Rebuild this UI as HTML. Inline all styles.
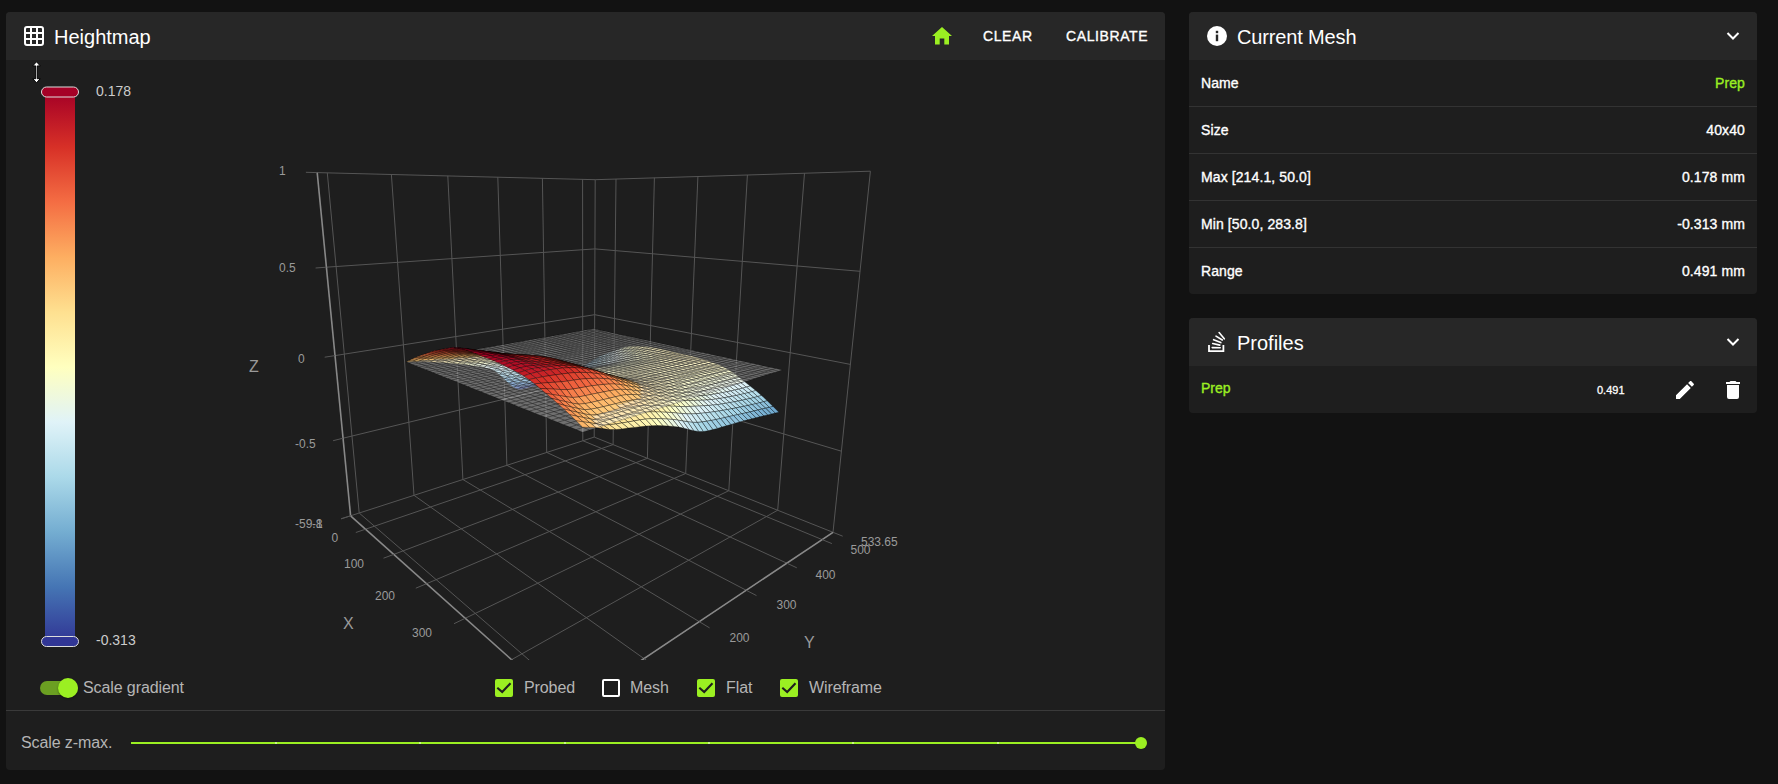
<!DOCTYPE html>
<html><head><meta charset="utf-8"><style>
*{margin:0;padding:0;box-sizing:border-box}
html,body{width:1778px;height:784px;overflow:hidden;background:#121212;font-family:"Liberation Sans",sans-serif;color:#fff}
.abs{position:absolute}
.panel{position:absolute;background:#1e1e1e;border-radius:4px;overflow:hidden}
.hdr{position:absolute;left:0;top:0;right:0;height:48px;background:#272727}
.t20{font-size:20px;line-height:20px;white-space:nowrap}
.row{position:absolute;left:0;right:0;height:47px;border-bottom:1px solid #333}
.rl{position:absolute;left:12px;top:16px;font-size:14px;font-weight:normal;-webkit-text-stroke:0.35px currentColor;line-height:14px;letter-spacing:0.1px;white-space:nowrap;color:#fff}
.rr{position:absolute;right:12px;top:16px;font-size:14px;font-weight:normal;-webkit-text-stroke:0.35px currentColor;line-height:14px;letter-spacing:0.1px;white-space:nowrap;color:#fff}
.lbl{font-size:16px;line-height:16px;color:#b5b5b5;white-space:nowrap;letter-spacing:-0.1px}
.btn{font-size:14px;font-weight:normal;-webkit-text-stroke:0.35px currentColor;line-height:14px;letter-spacing:0.6px;white-space:nowrap;color:#fff}
</style></head><body>
<div class="panel" style="left:6px;top:12px;width:1159px;height:758px">
  <div class="hdr"></div>
  <svg class="abs" style="left:18px;top:14px" width="20" height="20" viewBox="0 0 20 20">
    <rect x="1" y="1" width="18" height="18" rx="2" fill="none" stroke="#fff" stroke-width="2"/>
    <path d="M7 1V19M13 1V19M1 7H19M1 13H19" stroke="#fff" stroke-width="2"/>
  </svg>
  <div class="abs t20" style="left:48px;top:15px">Heightmap</div>
  <svg class="abs" style="left:924px;top:14px" width="24" height="20" viewBox="0 0 24 20">
    <path d="M9.7 18.5V12.5H14.3V18.5H19V10H22L12 1L2 10H5V18.5Z" fill="#9bef22"/>
  </svg>
  <div class="abs btn" style="left:977px;top:17px">CLEAR</div>
  <div class="abs btn" style="left:1060px;top:17px">CALIBRATE</div>
  <div class="abs" style="left:0;right:0;top:698px;height:1px;background:#3a3a3a"></div>
  <div class="abs lbl" style="left:15px;top:723px">Scale z-max.</div>
  <div class="abs" style="left:125px;top:730px;width:1011px;height:2px;background:#9bef22"></div>
  <svg class="abs" style="left:125px;top:728px" width="1020" height="8">
    <g fill="#fff" opacity="0.45">
      <rect x="144" y="2" width="2" height="2"/><rect x="288" y="2" width="2" height="2"/><rect x="433" y="2" width="2" height="2"/>
      <rect x="577" y="2" width="2" height="2"/><rect x="721" y="2" width="2" height="2"/><rect x="866" y="2" width="2" height="2"/>
    </g>
  </svg>
  <div class="abs" style="left:1129px;top:725px;width:12px;height:12px;border-radius:6px;background:#9bef22"></div>
  <!-- toggle -->
  <div class="abs" style="left:34px;top:669px;width:38px;height:14px;border-radius:7px;background:#6b9f22"></div>
  <div class="abs" style="left:52px;top:666px;width:20px;height:20px;border-radius:10px;background:#9bef22;box-shadow:0 1px 2px rgba(0,0,0,0.4)"></div>
  <div class="abs lbl" style="left:77px;top:668px">Scale gradient</div>
  <!-- checkboxes -->
  <div class="abs" style="left:489px;top:667px;width:18px;height:18px;border-radius:2px;background:#9bef22"></div>
  <svg class="abs" style="left:489px;top:667px" width="18" height="18"><path d="M2.3 8.7L7.2 13L15.5 4.3" fill="none" stroke="#1e1e1e" stroke-width="2.1"/></svg>
  <div class="abs lbl" style="left:518px;top:668px">Probed</div>
  <div class="abs" style="left:596px;top:667px;width:18px;height:18px;border-radius:2px;border:2px solid #fff"></div>
  <div class="abs lbl" style="left:624px;top:668px">Mesh</div>
  <div class="abs" style="left:691px;top:667px;width:18px;height:18px;border-radius:2px;background:#9bef22"></div>
  <svg class="abs" style="left:691px;top:667px" width="18" height="18"><path d="M2.3 8.7L7.2 13L15.5 4.3" fill="none" stroke="#1e1e1e" stroke-width="2.1"/></svg>
  <div class="abs lbl" style="left:720px;top:668px">Flat</div>
  <div class="abs" style="left:774px;top:667px;width:18px;height:18px;border-radius:2px;background:#9bef22"></div>
  <svg class="abs" style="left:774px;top:667px" width="18" height="18"><path d="M2.3 8.7L7.2 13L15.5 4.3" fill="none" stroke="#1e1e1e" stroke-width="2.1"/></svg>
  <div class="abs lbl" style="left:803px;top:668px">Wireframe</div>
</div>
<svg style="position:absolute;left:0;top:0" width="1778" height="784">
<style>.g{stroke:#555;stroke-width:1;fill:none} .a{stroke:#888;stroke-width:1.6;fill:none}
.t{font-family:"Liberation Sans",sans-serif;font-size:12px;fill:#9a9a9a} .n{font-family:"Liberation Sans",sans-serif;font-size:16px;fill:#9a9a9a}
.cbl{font-family:"Liberation Sans",sans-serif;font-size:14px;fill:#ccc}</style>
<clipPath id="cc"><rect x="6" y="60" width="1159" height="600"/></clipPath>
<defs><linearGradient id="cb" x1="0" y1="0" x2="0" y2="1"><stop offset="0.0" stop-color="#a50026"/><stop offset="0.1" stop-color="#d73027"/><stop offset="0.2" stop-color="#f46d43"/><stop offset="0.3" stop-color="#fdae61"/><stop offset="0.4" stop-color="#fee090"/><stop offset="0.5" stop-color="#ffffbf"/><stop offset="0.6" stop-color="#e0f3f8"/><stop offset="0.7" stop-color="#abd9e9"/><stop offset="0.8" stop-color="#74add1"/><stop offset="0.9" stop-color="#4575b4"/><stop offset="1.0" stop-color="#313695"/></linearGradient></defs>
<rect x="45" y="92" width="30" height="550" fill="url(#cb)"/>
<rect x="41.5" y="87" width="37" height="10" rx="5" fill="#a50026" stroke="#ddd" stroke-width="1"/>
<rect x="41.5" y="636.5" width="37" height="10" rx="5" fill="#313695" stroke="#ddd" stroke-width="1"/>
<text x="96" y="96" class="cbl">0.178</text>
<text x="96" y="645" class="cbl">-0.313</text>
<path d="M36.5 61.8L40.3 65.9H37.3V78.7H40.3L36.5 82.8L32.7 78.7H35.7V65.9H32.7Z" fill="#fff" stroke="#000" stroke-width="1"/>
<g clip-path="url(#cc)">
<path class="g" d="M365.6 529.2L613.1 444.6"/>
<path class="g" d="M393.8 554.4L647.4 458.3"/>
<path class="g" d="M426.6 583.7L685.7 473.5"/>
<path class="g" d="M465.2 618.3L728.8 490.7"/>
<path class="g" d="M511.5 659.7L777.7 510.2"/>
<path class="g" d="M567.5 709.7L833 532.3"/>
<path class="g" d="M359.2 513L578.2 702.5"/>
<path class="g" d="M414 495.3L644 658.6"/>
<path class="g" d="M462.9 479.5L699.3 621.7"/>
<path class="g" d="M506.9 465.3L746.3 590.3"/>
<path class="g" d="M546.7 452.4L786.9 563.2"/>
<path class="g" d="M582.8 440.7L822.2 539.6"/>
<path class="g" d="M594.2 437.1L833 532.3"/>
<path class="g" d="M350.6 515.8L594.2 437.1"/>
<path class="g" d="M359.2 513L327.3 172.9"/>
<path class="g" d="M414 495.3L391.4 174.5"/>
<path class="g" d="M462.9 479.5L447.8 175.9"/>
<path class="g" d="M506.9 465.3L497.8 177.2"/>
<path class="g" d="M546.7 452.4L542.4 178.3"/>
<path class="g" d="M582.8 440.7L582.6 179.4"/>
<path class="g" d="M594.2 437.1L595.2 179.7"/>
<path class="g" d="M343.1 438.2L594.4 377.3"/>
<path class="g" d="M335 355.6L594.7 314.7"/>
<path class="g" d="M326.4 267.2L594.9 248.9"/>
<path class="g" d="M317.2 172.6L595.2 179.7"/>
<path class="g" d="M613.1 444.6L616 179"/>
<path class="g" d="M647.4 458.3L654.4 177.8"/>
<path class="g" d="M685.7 473.5L697.9 176.5"/>
<path class="g" d="M728.8 490.7L747.4 175"/>
<path class="g" d="M777.7 510.2L804.5 173.2"/>
<path class="g" d="M833 532.3L870.4 171.2"/>
<path class="g" d="M594.4 377.3L841.4 451.2"/>
<path class="g" d="M594.7 314.7L850.4 364.4"/>
<path class="g" d="M594.9 248.9L860.1 271.3"/>
<path class="g" d="M595.2 179.7L870.4 171.2"/>
<path class="a" d="M350.6 515.8L317.2 172.6"/>
<path class="a" d="M350.6 515.8L567.5 709.7"/>
<path class="a" d="M567.5 709.7L833 532.3"/>
<path class="g" d="M350.6 515.8L341.1 518.8"/>
<path class="g" d="M343.1 438.2L333.1 440.7"/>
<path class="g" d="M335 355.6L324.7 357.2"/>
<path class="g" d="M326.4 267.2L315.6 268"/>
<path class="g" d="M317.2 172.6L305.9 172.3"/>
<path class="g" d="M350.6 515.8L341.1 518.8"/>
<path class="g" d="M365.6 529.2L355.8 532.5"/>
<path class="g" d="M393.8 554.4L383.5 558.2"/>
<path class="g" d="M426.6 583.7L415.8 588.2"/>
<path class="g" d="M465.2 618.3L454 623.7"/>
<path class="g" d="M511.5 659.7L499.9 666.2"/>
<path class="g" d="M567.5 709.7L555.4 717.7"/>
<path class="g" d="M567.5 709.7L577.6 718.8"/>
<path class="g" d="M578.2 702.5L588.4 711.4"/>
<path class="g" d="M644 658.6L654.4 665.9"/>
<path class="g" d="M699.3 621.7L709.6 627.9"/>
<path class="g" d="M746.3 590.3L756.5 595.6"/>
<path class="g" d="M786.9 563.2L796.8 567.8"/>
<path class="g" d="M822.2 539.6L831.9 543.6"/>
<path class="g" d="M833 532.3L842.7 536.2"/>
<style>#surf polygon{stroke:#000;stroke-opacity:0.32;stroke-width:1} #surf .p{fill:#fff;fill-opacity:0.36;stroke-opacity:0.22}</style><g id="surf"><polygon points="589.5,362.5 593.2,360.8 597.0,358.0 593.3,359.9" fill="#72abd0"/><polygon points="585.7,365.0 589.3,363.6 593.2,360.8 589.5,362.5" fill="#669cc8"/><polygon points="593.2,360.8 596.9,359.2 600.7,356.3 597.0,358.0" fill="#88bdda"/><polygon points="581.8,367.5 585.4,366.2 589.3,363.6 585.7,365.0" fill="#5a8ec1"/><polygon points="589.3,363.6 593.0,362.1 596.9,359.2 593.2,360.8" fill="#78b0d3"/><polygon class="p" points="589.6,329.5 593.3,330.3 597.1,329.6 593.4,328.8"/><polygon points="577.9,369.8 581.5,368.7 585.4,366.2 581.8,367.5" fill="#4f81ba"/><polygon points="596.9,359.2 600.7,357.7 604.5,354.6 600.7,356.3" fill="#9ccde3"/><polygon points="585.4,366.2 589.1,364.8 593.0,362.1 589.3,363.6" fill="#6ba2cb"/><polygon class="p" points="585.7,330.1 589.4,331.0 593.3,330.3 589.6,329.5"/><polygon class="p" points="593.3,330.3 597.0,331.1 600.9,330.4 597.1,329.6"/><polygon points="573.9,372.1 577.5,371.1 581.5,368.7 577.9,369.8" fill="#4576b4"/><polygon points="593.0,362.1 596.8,360.6 600.7,357.7 596.9,359.2" fill="#8cc0db"/><polygon points="581.5,368.7 585.2,367.4 589.1,364.8 585.4,366.2" fill="#5f94c4"/><polygon points="600.7,357.7 604.5,356.2 608.3,353.1 604.5,354.6" fill="#b0dbea"/><polygon class="p" points="581.8,330.8 585.4,331.7 589.4,331.0 585.7,330.1"/><polygon points="569.9,374.2 573.5,373.2 577.5,371.1 573.9,372.1" fill="#416aaf"/><polygon points="589.1,364.8 592.9,363.4 596.8,360.6 593.0,362.1" fill="#7cb4d5"/><polygon class="p" points="589.4,331.0 593.1,331.8 597.0,331.1 593.3,330.3"/><polygon class="p" points="597.0,331.1 600.8,331.9 604.7,331.2 600.9,330.4"/><polygon points="577.5,371.1 581.2,369.7 585.2,367.4 581.5,368.7" fill="#5588be"/><polygon points="596.8,360.6 600.6,359.2 604.5,356.2 600.7,357.7" fill="#9fcfe4"/><polygon class="p" points="577.8,331.5 581.5,332.4 585.4,331.7 581.8,330.8"/><polygon points="565.9,376.1 569.5,375.1 573.5,373.2 569.9,374.2" fill="#3e60aa"/><polygon points="585.2,367.4 588.9,366.0 592.9,363.4 589.1,364.8" fill="#6fa7ce"/><polygon class="p" points="585.4,331.7 589.2,332.5 593.1,331.8 589.4,331.0"/><polygon points="604.5,356.2 608.3,354.9 612.2,351.7 608.3,353.1" fill="#c2e4f0"/><polygon class="p" points="593.1,331.8 596.9,332.7 600.8,331.9 597.0,331.1"/><polygon points="573.5,373.2 577.2,371.9 581.2,369.7 577.5,371.1" fill="#4c7db8"/><polygon points="592.9,363.4 596.7,362.1 600.6,359.2 596.8,360.6" fill="#8fc3dd"/><polygon class="p" points="600.8,331.9 604.6,332.8 608.5,332.1 604.7,331.2"/><polygon points="581.2,369.7 584.9,368.5 588.9,366.0 585.2,367.4" fill="#659bc7"/><polygon points="561.8,377.8 565.4,376.7 569.5,375.1 565.9,376.1" fill="#3c59a6"/><polygon class="p" points="573.8,332.2 577.4,333.1 581.5,332.4 577.8,331.5"/><polygon points="600.6,359.2 604.4,357.9 608.3,354.9 604.5,356.2" fill="#b1dceb"/><polygon class="p" points="581.5,332.4 585.2,333.2 589.2,332.5 585.4,331.7"/><polygon points="569.5,375.1 573.1,373.8 577.2,371.9 573.5,373.2" fill="#4574b4"/><polygon class="p" points="589.2,332.5 593.0,333.4 596.9,332.7 593.1,331.8"/><polygon points="588.9,366.0 592.7,364.8 596.7,362.1 592.9,363.4" fill="#81b7d7"/><polygon class="p" points="596.9,332.7 600.7,333.5 604.6,332.8 600.8,331.9"/><polygon points="608.3,354.9 612.3,353.4 616.2,350.2 612.2,351.7" fill="#d4edf5"/><polygon class="p" points="604.6,332.8 608.5,333.6 612.4,332.9 608.5,332.1"/><polygon points="577.2,371.9 580.9,370.6 584.9,368.5 581.2,369.7" fill="#5b90c2"/><polygon points="596.7,362.1 600.5,360.8 604.4,357.9 600.6,359.2" fill="#a1d1e5"/><polygon points="557.7,379.2 561.3,378.0 565.4,376.7 561.8,377.8" fill="#3a54a4"/><polygon class="p" points="569.7,333.0 573.4,333.8 577.4,333.1 573.8,332.2"/><polygon class="p" points="577.4,333.1 581.2,334.0 585.2,333.2 581.5,332.4"/><polygon points="584.9,368.5 588.7,367.2 592.7,364.8 588.9,366.0" fill="#74add1"/><polygon points="565.4,376.7 569.1,375.4 573.1,373.8 569.5,375.1" fill="#426db0"/><polygon class="p" points="585.2,333.2 589.0,334.1 593.0,333.4 589.2,332.5"/><polygon points="604.4,357.9 608.4,356.5 612.3,353.4 608.3,354.9" fill="#c3e5f0"/><polygon class="p" points="593.0,333.4 596.8,334.2 600.7,333.5 596.9,332.7"/><polygon points="573.1,373.8 576.8,372.5 580.9,370.6 577.2,371.9" fill="#5487bd"/><polygon class="p" points="600.7,333.5 604.6,334.4 608.5,333.6 604.6,332.8"/><polygon points="592.7,364.8 596.5,363.5 600.5,360.8 596.7,362.1" fill="#93c6de"/><polygon points="553.6,380.5 557.1,378.9 561.3,378.0 557.7,379.2" fill="#3a51a3"/><polygon class="p" points="608.5,333.6 612.5,334.5 616.4,333.8 612.4,332.9"/><polygon points="612.3,353.4 616.3,351.9 620.2,348.6 616.2,350.2" fill="#e4f4f1"/><polygon class="p" points="565.6,333.7 569.3,334.6 573.4,333.8 569.7,333.0"/><polygon points="580.9,370.6 584.7,369.4 588.7,367.2 584.9,368.5" fill="#6ba2cb"/><polygon class="p" points="573.4,333.8 577.1,334.7 581.2,334.0 577.4,333.1"/><polygon points="600.5,360.8 604.4,359.5 608.4,356.5 604.4,357.9" fill="#b3ddeb"/><polygon points="561.3,378.0 564.9,376.6 569.1,375.4 565.4,376.7" fill="#4169ae"/><polygon class="p" points="581.2,334.0 584.9,334.8 589.0,334.1 585.2,333.2"/><polygon class="p" points="589.0,334.1 592.8,335.0 596.8,334.2 593.0,333.4"/><polygon points="588.7,367.2 592.5,366.0 596.5,363.5 592.7,364.8" fill="#86bbd9"/><polygon points="569.1,375.4 572.7,374.1 576.8,372.5 573.1,373.8" fill="#4f81ba"/><polygon class="p" points="596.8,334.2 600.7,335.1 604.6,334.4 600.7,333.5"/><polygon points="608.4,356.5 612.3,355.1 616.3,351.9 612.3,353.4" fill="#d5edf5"/><polygon points="549.4,381.8 552.9,379.9 557.1,378.9 553.6,380.5" fill="#3950a2"/><polygon class="p" points="604.6,334.4 608.6,335.3 612.5,334.5 608.5,333.6"/><polygon class="p" points="561.4,334.4 565.1,335.3 569.3,334.6 565.6,333.7"/><polygon points="576.8,372.5 580.6,371.3 584.7,369.4 580.9,370.6" fill="#649ac7"/><polygon points="596.5,363.5 600.4,362.2 604.4,359.5 600.5,360.8" fill="#a4d4e6"/><polygon class="p" points="612.5,334.5 616.5,335.4 620.3,334.7 616.4,333.8"/><polygon class="p" points="569.3,334.6 573.0,335.4 577.1,334.7 573.4,333.8"/><polygon points="557.1,378.9 560.7,377.6 564.9,376.6 561.3,378.0" fill="#4168ad"/><polygon points="616.3,351.9 620.3,350.6 624.2,347.3 620.2,348.6" fill="#eef8df"/><polygon class="p" points="577.1,334.7 580.8,335.6 584.9,334.8 581.2,334.0"/><polygon points="584.7,369.4 588.5,368.2 592.5,366.0 588.7,367.2" fill="#7bb3d4"/><polygon class="p" points="584.9,334.8 588.7,335.7 592.8,335.0 589.0,334.1"/><polygon points="604.4,359.5 608.4,358.1 612.3,355.1 608.4,356.5" fill="#c5e6f0"/><polygon points="564.9,376.6 568.6,375.4 572.7,374.1 569.1,375.4" fill="#4c7db8"/><polygon class="p" points="592.8,335.0 596.7,335.9 600.7,335.1 596.8,334.2"/><polygon points="545.1,383.0 548.6,380.9 552.9,379.9 549.4,381.8" fill="#394fa1"/><polygon class="p" points="600.7,335.1 604.6,336.0 608.6,335.3 604.6,334.4"/><polygon points="592.5,366.0 596.4,364.7 600.4,362.2 596.5,363.5" fill="#97c9e0"/><polygon class="p" points="557.2,335.2 560.9,336.0 565.1,335.3 561.4,334.4"/><polygon points="572.7,374.1 576.5,372.9 580.6,371.3 576.8,372.5" fill="#5e93c4"/><polygon class="p" points="608.6,335.3 612.5,336.1 616.5,335.4 612.5,334.5"/><polygon points="612.3,355.1 616.4,353.8 620.3,350.6 616.3,351.9" fill="#e3f4f2"/><polygon class="p" points="565.1,335.3 568.8,336.2 573.0,335.4 569.3,334.6"/><polygon points="552.9,379.9 556.5,378.5 560.7,377.6 557.1,378.9" fill="#4168ae"/><polygon class="p" points="616.5,335.4 620.5,336.3 624.4,335.5 620.3,334.7"/><polygon class="p" points="573.0,335.4 576.7,336.3 580.8,335.6 577.1,334.7"/><polygon points="580.6,371.3 584.4,370.1 588.5,368.2 584.7,369.4" fill="#73abd0"/><polygon points="600.4,362.2 604.4,360.9 608.4,358.1 604.4,359.5" fill="#b6deec"/><polygon class="p" points="580.8,335.6 584.7,336.5 588.7,335.7 584.9,334.8"/><polygon points="560.7,377.6 564.4,376.3 568.6,375.4 564.9,376.6" fill="#4b7cb8"/><polygon points="620.3,350.6 624.4,349.7 628.3,346.4 624.2,347.3" fill="#f7fcce"/><polygon class="p" points="588.7,335.7 592.6,336.6 596.7,335.9 592.8,335.0"/><polygon points="540.8,384.3 544.3,381.8 548.6,380.9 545.1,383.0" fill="#394ea1"/><polygon points="588.5,368.2 592.4,367.0 596.4,364.7 592.5,366.0" fill="#8dc1dc"/><polygon class="p" points="596.7,335.9 600.6,336.8 604.6,336.0 600.7,335.1"/><polygon points="608.4,358.1 612.4,356.9 616.4,353.8 612.3,355.1" fill="#d6eef5"/><polygon class="p" points="553.0,335.9 556.6,336.8 560.9,336.0 557.2,335.2"/><polygon points="568.6,375.4 572.3,374.1 576.5,372.9 572.7,374.1" fill="#5b90c2"/><polygon class="p" points="604.6,336.0 608.6,336.9 612.5,336.1 608.6,335.3"/><polygon class="p" points="560.9,336.0 564.6,336.9 568.8,336.2 565.1,335.3"/><polygon points="548.6,380.9 552.2,379.4 556.5,378.5 552.9,379.9" fill="#4168ae"/><polygon class="p" points="612.5,336.1 616.6,337.1 620.5,336.3 616.5,335.4"/><polygon points="596.4,364.7 600.4,363.5 604.4,360.9 600.4,362.2" fill="#a9d8e8"/><polygon class="p" points="568.8,336.2 572.6,337.1 576.7,336.3 573.0,335.4"/><polygon points="576.5,372.9 580.3,371.7 584.4,370.1 580.6,371.3" fill="#6da5cd"/><polygon points="616.4,353.8 620.5,352.9 624.4,349.7 620.3,350.6" fill="#ecf8e1"/><polygon class="p" points="620.5,336.3 624.6,337.2 628.5,336.4 624.4,335.5"/><polygon class="p" points="576.7,336.3 580.5,337.2 584.7,336.5 580.8,335.6"/><polygon points="556.5,378.5 560.1,377.2 564.4,376.3 560.7,377.6" fill="#4b7db8"/><polygon class="p" points="584.7,336.5 588.5,337.4 592.6,336.6 588.7,335.7"/><polygon points="584.4,370.1 588.3,368.9 592.4,367.0 588.5,368.2" fill="#84bad8"/><polygon points="604.4,360.9 608.4,359.7 612.4,356.9 608.4,358.1" fill="#c7e7f1"/><polygon points="536.5,385.5 539.9,382.8 544.3,381.8 540.8,384.3" fill="#384da1"/><polygon points="624.4,349.7 628.6,349.4 632.5,346.2 628.3,346.4" fill="#fdfec2"/><polygon class="p" points="592.6,336.6 596.5,337.5 600.6,336.8 596.7,335.9"/><polygon points="564.4,376.3 568.1,375.1 572.3,374.1 568.6,375.4" fill="#5b8fc1"/><polygon class="p" points="548.7,336.7 552.4,337.6 556.6,336.8 553.0,335.9"/><polygon class="p" points="600.6,336.8 604.6,337.7 608.6,336.9 604.6,336.0"/><polygon class="p" points="556.6,336.8 560.3,337.7 564.6,336.9 560.9,336.0"/><polygon points="592.4,367.0 596.3,365.8 600.4,363.5 596.4,364.7" fill="#9ecfe3"/><polygon points="544.3,381.8 547.9,380.2 552.2,379.4 548.6,380.9" fill="#4169ae"/><polygon points="612.4,356.9 616.5,355.9 620.5,352.9 616.4,353.8" fill="#e3f4f3"/><polygon class="p" points="608.6,336.9 612.6,337.8 616.6,337.1 612.5,336.1"/><polygon points="572.3,374.1 576.1,373.0 580.3,371.7 576.5,372.9" fill="#6aa2cb"/><polygon class="p" points="564.6,336.9 568.3,337.9 572.6,337.1 568.8,336.2"/><polygon class="p" points="616.6,337.1 620.7,338.0 624.6,337.2 620.5,336.3"/><polygon class="p" points="572.6,337.1 576.4,338.0 580.5,337.2 576.7,336.3"/><polygon points="552.2,379.4 555.8,377.9 560.1,377.2 556.5,378.5" fill="#4c7eb9"/><polygon class="p" points="624.6,337.2 628.7,338.1 632.6,337.3 628.5,336.4"/><polygon points="600.4,363.5 604.4,362.3 608.4,359.7 604.4,360.9" fill="#bae0ed"/><polygon points="580.3,371.7 584.1,370.6 588.3,368.9 584.4,370.1" fill="#7eb5d5"/><polygon class="p" points="580.5,337.2 584.4,338.2 588.5,337.4 584.7,336.5"/><polygon points="620.5,352.9 624.6,352.4 628.6,349.4 624.4,349.7" fill="#f3fbd4"/><polygon points="532.1,386.6 535.5,383.8 539.9,382.8 536.5,385.5" fill="#384da0"/><polygon class="p" points="588.5,337.4 592.4,338.3 596.5,337.5 592.6,336.6"/><polygon points="560.1,377.2 563.8,375.9 568.1,375.1 564.4,376.3" fill="#5b8fc2"/><polygon class="p" points="544.4,337.4 548.0,338.3 552.4,337.6 548.7,336.7"/><polygon class="p" points="596.5,337.5 600.5,338.4 604.6,337.7 600.6,336.8"/><polygon points="588.3,368.9 592.2,367.8 596.3,365.8 592.4,367.0" fill="#95c7df"/><polygon points="608.4,359.7 612.5,358.7 616.5,355.9 612.4,356.9" fill="#d6eef5"/><polygon class="p" points="552.4,337.6 556.0,338.5 560.3,337.7 556.6,336.8"/><polygon points="628.6,349.4 632.8,349.3 636.7,346.2 632.5,346.2" fill="#fffcbb"/><polygon points="539.9,382.8 543.5,380.9 547.9,380.2 544.3,381.8" fill="#426aaf"/><polygon class="p" points="604.6,337.7 608.6,338.6 612.6,337.8 608.6,336.9"/><polygon points="568.1,375.1 571.9,373.9 576.1,373.0 572.3,374.1" fill="#6aa1cb"/><polygon class="p" points="560.3,337.7 564.1,338.6 568.3,337.9 564.6,336.9"/><polygon class="p" points="612.6,337.8 616.7,338.7 620.7,338.0 616.6,337.1"/><polygon class="p" points="568.3,337.9 572.1,338.8 576.4,338.0 572.6,337.1"/><polygon points="596.3,365.8 600.3,364.7 604.4,362.3 600.4,363.5" fill="#afdbea"/><polygon points="616.5,355.9 620.6,355.4 624.6,352.4 620.5,352.9" fill="#eaf7e5"/><polygon points="547.9,380.2 551.5,378.6 555.8,377.9 552.2,379.4" fill="#4e7fb9"/><polygon class="p" points="620.7,338.0 624.8,338.9 628.7,338.1 624.6,337.2"/><polygon points="576.1,373.0 579.9,371.8 584.1,370.6 580.3,371.7" fill="#7ab2d4"/><polygon class="p" points="576.4,338.0 580.2,338.9 584.4,338.2 580.5,337.2"/><polygon points="527.6,387.8 531.1,384.7 535.5,383.8 532.1,386.6" fill="#384da0"/><polygon class="p" points="628.7,338.1 632.9,339.0 636.8,338.3 632.6,337.3"/><polygon class="p" points="584.4,338.2 588.3,339.1 592.4,338.3 588.5,337.4"/><polygon class="p" points="540.0,338.2 543.6,339.1 548.0,338.3 544.4,337.4"/><polygon points="555.8,377.9 559.5,376.6 563.8,375.9 560.1,377.2" fill="#5c91c2"/><polygon points="604.4,362.3 608.4,361.3 612.5,358.7 608.4,359.7" fill="#c9e8f2"/><polygon points="624.6,352.4 628.8,352.2 632.8,349.3 628.6,349.4" fill="#f9fdca"/><polygon points="584.1,370.6 588.0,369.4 592.2,367.8 588.3,368.9" fill="#8fc2dd"/><polygon class="p" points="592.4,338.3 596.4,339.2 600.5,338.4 596.5,337.5"/><polygon class="p" points="548.0,338.3 551.7,339.3 556.0,338.5 552.4,337.6"/><polygon points="535.5,383.8 539.1,381.6 543.5,380.9 539.9,382.8" fill="#426cb0"/><polygon class="p" points="600.5,338.4 604.5,339.4 608.6,338.6 604.6,337.7"/><polygon points="563.8,375.9 567.6,374.7 571.9,373.9 568.1,375.1" fill="#6aa1cb"/><polygon class="p" points="556.0,338.5 559.8,339.4 564.1,338.6 560.3,337.7"/><polygon points="632.8,349.3 637.0,349.2 640.9,346.4 636.7,346.2" fill="#fff8b4"/><polygon points="612.5,358.7 616.6,358.1 620.6,355.4 616.5,355.9" fill="#e2f4f4"/><polygon class="p" points="608.6,338.6 612.7,339.5 616.7,338.7 612.6,337.8"/><polygon points="592.2,367.8 596.2,366.7 600.3,364.7 596.3,365.8" fill="#a6d5e7"/><polygon class="p" points="564.1,338.6 567.9,339.6 572.1,338.8 568.3,337.9"/><polygon class="p" points="616.7,338.7 620.8,339.7 624.8,338.9 620.7,338.0"/><polygon points="543.5,380.9 547.1,379.2 551.5,378.6 547.9,380.2" fill="#5082bb"/><polygon points="571.9,373.9 575.7,372.8 579.9,371.8 576.1,373.0" fill="#79b1d3"/><polygon class="p" points="572.1,338.8 576.0,339.7 580.2,338.9 576.4,338.0"/><polygon points="523.1,388.9 526.6,385.7 531.1,384.7 527.6,387.8" fill="#384da0"/><polygon class="p" points="624.8,338.9 629.0,339.8 632.9,339.0 628.7,338.1"/><polygon points="620.6,355.4 624.8,355.0 628.8,352.2 624.6,352.4" fill="#f0f9da"/><polygon points="600.3,364.7 604.3,363.7 608.4,361.3 604.4,362.3" fill="#bee2ee"/><polygon class="p" points="580.2,338.9 584.1,339.9 588.3,339.1 584.4,338.2"/><polygon class="p" points="535.6,339.0 539.2,339.9 543.6,339.1 540.0,338.2"/><polygon points="551.5,378.6 555.2,377.1 559.5,376.6 555.8,377.9" fill="#5f93c4"/><polygon points="579.9,371.8 583.8,370.7 588.0,369.4 584.1,370.6" fill="#8bbfdb"/><polygon class="p" points="632.9,339.0 637.2,340.0 641.1,339.2 636.8,338.3"/><polygon class="p" points="588.3,339.1 592.3,340.0 596.4,339.2 592.4,338.3"/><polygon class="p" points="543.6,339.1 547.3,340.1 551.7,339.3 548.0,338.3"/><polygon class="p" points="596.4,339.2 600.4,340.2 604.5,339.4 600.5,338.4"/><polygon points="628.8,352.2 633.1,352.0 637.0,349.2 632.8,349.3" fill="#fefec2"/><polygon points="531.1,384.7 534.6,382.3 539.1,381.6 535.5,383.8" fill="#436eb0"/><polygon points="608.4,361.3 612.5,360.6 616.6,358.1 612.5,358.7" fill="#d7eef5"/><polygon points="559.5,376.6 563.3,375.3 567.6,374.7 563.8,375.9" fill="#6ca3cc"/><polygon class="p" points="551.7,339.3 555.4,340.2 559.8,339.4 556.0,338.5"/><polygon points="588.0,369.4 592.0,368.4 596.2,366.7 592.2,367.8" fill="#9fd0e4"/><polygon class="p" points="604.5,339.4 608.6,340.3 612.7,339.5 608.6,338.6"/><polygon class="p" points="559.8,339.4 563.5,340.4 567.9,339.6 564.1,338.6"/><polygon class="p" points="612.7,339.5 616.8,340.5 620.8,339.7 616.7,338.7"/><polygon points="637.0,349.2 641.3,349.3 645.3,346.6 640.9,346.4" fill="#fff4af"/><polygon points="567.6,374.7 571.4,373.6 575.7,372.8 571.9,373.9" fill="#7ab2d4"/><polygon points="539.1,381.6 542.6,379.7 547.1,379.2 543.5,380.9" fill="#5285bc"/><polygon class="p" points="567.9,339.6 571.7,340.5 576.0,339.7 572.1,338.8"/><polygon points="616.6,358.1 620.8,357.6 624.8,355.0 620.6,355.4" fill="#e8f6e9"/><polygon points="596.2,366.7 600.2,365.7 604.3,363.7 600.3,364.7" fill="#b5deec"/><polygon class="p" points="620.8,339.7 625.0,340.6 629.0,339.8 624.8,338.9"/><polygon points="518.6,389.5 522.0,386.2 526.6,385.7 523.1,388.9" fill="#394fa1"/><polygon class="p" points="576.0,339.7 579.9,340.7 584.1,339.9 580.2,338.9"/><polygon class="p" points="531.1,339.8 534.7,340.7 539.2,339.9 535.6,339.0"/><polygon points="575.7,372.8 579.6,371.6 583.8,370.7 579.9,371.8" fill="#8abfdb"/><polygon class="p" points="629.0,339.8 633.3,340.8 637.2,340.0 632.9,339.0"/><polygon points="547.1,379.2 550.8,377.6 555.2,377.1 551.5,378.6" fill="#6197c5"/><polygon class="p" points="584.1,339.9 588.1,340.8 592.3,340.0 588.3,339.1"/><polygon points="624.8,355.0 629.1,354.6 633.1,352.0 628.8,352.2" fill="#f6fbd0"/><polygon class="p" points="539.2,339.9 542.8,340.9 547.3,340.1 543.6,339.1"/><polygon class="p" points="637.2,340.0 641.5,340.9 645.4,340.1 641.1,339.2"/><polygon points="604.3,363.7 608.4,362.9 612.5,360.6 608.4,361.3" fill="#cce9f2"/><polygon class="p" points="592.3,340.0 596.3,341.0 600.4,340.2 596.4,339.2"/><polygon points="526.6,385.7 530.0,382.9 534.6,382.3 531.1,384.7" fill="#4370b1"/><polygon class="p" points="547.3,340.1 551.0,341.0 555.4,340.2 551.7,339.3"/><polygon points="583.8,370.7 587.8,369.6 592.0,368.4 588.0,369.4" fill="#9bcde2"/><polygon points="555.2,377.1 558.9,375.9 563.3,375.3 559.5,376.6" fill="#6ea6ce"/><polygon class="p" points="600.4,340.2 604.5,341.1 608.6,340.3 604.5,339.4"/><polygon class="p" points="555.4,340.2 559.2,341.2 563.5,340.4 559.8,339.4"/><polygon points="633.1,352.0 637.4,351.9 641.3,349.3 637.0,349.2" fill="#fffcbb"/><polygon points="612.5,360.6 616.7,360.0 620.8,357.6 616.6,358.1" fill="#e2f4f5"/><polygon class="p" points="608.6,340.3 612.7,341.3 616.8,340.5 612.7,339.5"/><polygon points="563.3,375.3 567.1,374.2 571.4,373.6 567.6,374.7" fill="#7cb3d4"/><polygon points="534.6,382.3 538.1,380.1 542.6,379.7 539.1,381.6" fill="#5588be"/><polygon class="p" points="563.5,340.4 567.4,341.3 571.7,340.5 567.9,339.6"/><polygon points="592.0,368.4 596.0,367.4 600.2,365.7 596.2,366.7" fill="#afdbea"/><polygon class="p" points="616.8,340.5 621.0,341.4 625.0,340.6 620.8,339.7"/><polygon class="p" points="571.7,340.5 575.6,341.5 579.9,340.7 576.0,339.7"/><polygon points="641.3,349.3 645.7,349.6 649.6,347.0 645.3,346.6" fill="#fff1aa"/><polygon points="513.9,387.7 517.3,384.3 522.0,386.2 518.6,389.5" fill="#3d5da8"/><polygon class="p" points="526.6,340.6 530.1,341.5 534.7,340.7 531.1,339.8"/><polygon points="571.4,373.6 575.3,372.5 579.6,371.6 575.7,372.8" fill="#8bbfdb"/><polygon class="p" points="625.0,340.6 629.3,341.6 633.3,340.8 629.0,339.8"/><polygon points="620.8,357.6 625.0,357.1 629.1,354.6 624.8,355.0" fill="#eef9dd"/><polygon points="542.6,379.7 546.3,377.9 550.8,377.6 547.1,379.2" fill="#659bc8"/><polygon class="p" points="579.9,340.7 583.8,341.6 588.1,340.8 584.1,339.9"/><polygon points="600.2,365.7 604.3,364.9 608.4,362.9 604.3,363.7" fill="#c3e5f0"/><polygon class="p" points="534.7,340.7 538.3,341.7 542.8,340.9 539.2,339.9"/><polygon class="p" points="633.3,340.8 637.6,341.7 641.5,340.9 637.2,340.0"/><polygon class="p" points="588.1,340.8 592.1,341.8 596.3,341.0 592.3,340.0"/><polygon points="522.0,386.2 525.4,383.0 530.0,382.9 526.6,385.7" fill="#4574b3"/><polygon class="p" points="542.8,340.9 546.5,341.8 551.0,341.0 547.3,340.1"/><polygon points="579.6,371.6 583.5,370.6 587.8,369.6 583.8,370.7" fill="#9acce2"/><polygon class="p" points="641.5,340.9 645.9,341.9 649.8,341.1 645.4,340.1"/><polygon points="550.8,377.6 554.5,376.3 558.9,375.9 555.2,377.1" fill="#72aad0"/><polygon points="629.1,354.6 633.4,354.4 637.4,351.9 633.1,352.0" fill="#fbfdc7"/><polygon class="p" points="596.3,341.0 600.3,341.9 604.5,341.1 600.4,340.2"/><polygon points="608.4,362.9 612.6,362.2 616.7,360.0 612.5,360.6" fill="#d9eff6"/><polygon class="p" points="551.0,341.0 554.8,342.0 559.2,341.2 555.4,340.2"/><polygon class="p" points="604.5,341.1 608.6,342.1 612.7,341.3 608.6,340.3"/><polygon points="587.8,369.6 591.8,368.7 596.0,367.4 592.0,368.4" fill="#abd9e9"/><polygon class="p" points="559.2,341.2 563.0,342.1 567.4,341.3 563.5,340.4"/><polygon points="558.9,375.9 562.7,374.7 567.1,374.2 563.3,375.3" fill="#7fb6d6"/><polygon points="530.0,382.9 533.6,380.4 538.1,380.1 534.6,382.3" fill="#588cc0"/><polygon points="637.4,351.9 641.7,352.0 645.7,349.6 641.3,349.3" fill="#fff8b5"/><polygon class="p" points="612.7,341.3 616.9,342.3 621.0,341.4 616.8,340.5"/><polygon class="p" points="567.4,341.3 571.3,342.3 575.6,341.5 571.7,340.5"/><polygon points="616.7,360.0 621.0,359.4 625.0,357.1 620.8,357.6" fill="#e8f6e9"/><polygon class="p" points="522.0,341.4 525.6,342.3 530.1,341.5 526.6,340.6"/><polygon class="p" points="621.0,341.4 625.3,342.4 629.3,341.6 625.0,340.6"/><polygon points="567.1,374.2 571.0,373.1 575.3,372.5 571.4,373.6" fill="#8dc1dc"/><polygon points="596.0,367.4 600.1,366.5 604.3,364.9 600.2,365.7" fill="#bde2ee"/><polygon class="p" points="575.6,341.5 579.5,342.5 583.8,341.6 579.9,340.7"/><polygon points="538.1,380.1 541.8,378.2 546.3,377.9 542.6,379.7" fill="#69a0ca"/><polygon points="645.7,349.6 650.1,350.0 654.1,347.7 649.6,347.0" fill="#feefa7"/><polygon class="p" points="530.1,341.5 533.8,342.5 538.3,341.7 534.7,340.7"/><polygon class="p" points="629.3,341.6 633.6,342.6 637.6,341.7 633.3,340.8"/><polygon points="509.1,384.0 512.5,380.7 517.3,384.3 513.9,387.7" fill="#4b7cb8"/><polygon class="p" points="583.8,341.6 587.8,342.6 592.1,341.8 588.1,340.8"/><polygon points="625.0,357.1 629.3,356.7 633.4,354.4 629.1,354.6" fill="#f4fbd3"/><polygon class="p" points="538.3,341.7 542.0,342.7 546.5,341.8 542.8,340.9"/><polygon points="575.3,372.5 579.2,371.4 583.5,370.6 579.6,371.6" fill="#9bcce2"/><polygon class="p" points="637.6,341.7 641.9,342.7 645.9,341.9 641.5,340.9"/><polygon points="604.3,364.9 608.5,364.1 612.6,362.2 608.4,362.9" fill="#d1ebf4"/><polygon points="546.3,377.9 550.0,376.5 554.5,376.3 550.8,377.6" fill="#76afd2"/><polygon class="p" points="592.1,341.8 596.1,342.8 600.3,341.9 596.3,341.0"/><polygon points="517.3,384.3 520.7,381.0 525.4,383.0 522.0,386.2" fill="#5082bb"/><polygon class="p" points="546.5,341.8 550.3,342.8 554.8,342.0 551.0,341.0"/><polygon class="p" points="645.9,341.9 650.3,342.9 654.2,342.1 649.8,341.1"/><polygon class="p" points="600.3,341.9 604.5,342.9 608.6,342.1 604.5,341.1"/><polygon points="633.4,354.4 637.7,354.3 641.7,352.0 637.4,351.9" fill="#ffffbf"/><polygon points="583.5,370.6 587.6,369.6 591.8,368.7 587.8,369.6" fill="#aad8e9"/><polygon class="p" points="554.8,342.0 558.6,343.0 563.0,342.1 559.2,341.2"/><polygon points="554.5,376.3 558.3,375.1 562.7,374.7 558.9,375.9" fill="#83b9d7"/><polygon points="525.4,383.0 529.0,380.3 533.6,380.4 530.0,382.9" fill="#5d92c3"/><polygon points="612.6,362.2 616.8,361.5 621.0,359.4 616.7,360.0" fill="#e3f4f3"/><polygon class="p" points="608.6,342.1 612.8,343.1 616.9,342.3 612.7,341.3"/><polygon class="p" points="563.0,342.1 566.9,343.1 571.3,342.3 567.4,341.3"/><polygon class="p" points="517.3,342.2 520.9,343.2 525.6,342.3 522.0,341.4"/><polygon class="p" points="616.9,342.3 621.2,343.2 625.3,342.4 621.0,341.4"/><polygon points="591.8,368.7 595.9,367.8 600.1,366.5 596.0,367.4" fill="#bae0ed"/><polygon points="641.7,352.0 646.2,352.3 650.1,350.0 645.7,349.6" fill="#fff5b0"/><polygon points="562.7,374.7 566.6,373.7 571.0,373.1 567.1,374.2" fill="#8fc3dd"/><polygon class="p" points="571.3,342.3 575.2,343.3 579.5,342.5 575.6,341.5"/><polygon class="p" points="525.6,342.3 529.2,343.3 533.8,342.5 530.1,341.5"/><polygon points="533.6,380.4 537.2,378.4 541.8,378.2 538.1,380.1" fill="#6da5cd"/><polygon class="p" points="625.3,342.4 629.6,343.4 633.6,342.6 629.3,341.6"/><polygon points="621.0,359.4 625.3,358.9 629.3,356.7 625.0,357.1" fill="#eff9dd"/><polygon class="p" points="579.5,342.5 583.5,343.4 587.8,342.6 583.8,341.6"/><polygon class="p" points="533.8,342.5 537.5,343.5 542.0,342.7 538.3,341.7"/><polygon points="650.1,350.0 654.6,350.7 658.6,348.6 654.1,347.7" fill="#feeea5"/><polygon points="571.0,373.1 574.9,372.1 579.2,371.4 575.3,372.5" fill="#9dcee3"/><polygon points="600.1,366.5 604.3,365.7 608.5,364.1 604.3,364.9" fill="#cbe9f2"/><polygon class="p" points="633.6,342.6 638.0,343.6 641.9,342.7 637.6,341.7"/><polygon class="p" points="587.8,342.6 591.9,343.6 596.1,342.8 592.1,341.8"/><polygon points="541.8,378.2 545.5,376.7 550.0,376.5 546.3,377.9" fill="#7bb3d4"/><polygon class="p" points="542.0,342.7 545.8,343.6 550.3,342.8 546.5,341.8"/><polygon points="504.2,379.3 507.6,376.1 512.5,380.7 509.1,384.0" fill="#6ba3cc"/><polygon class="p" points="641.9,342.7 646.4,343.7 650.3,342.9 645.9,341.9"/><polygon points="629.3,356.7 633.7,356.5 637.7,354.3 633.4,354.4" fill="#f9fdc9"/><polygon class="p" points="596.1,342.8 600.3,343.8 604.5,342.9 600.3,341.9"/><polygon points="579.2,371.4 583.3,370.5 587.6,369.6 583.5,370.6" fill="#abd9e9"/><polygon class="p" points="550.3,342.8 554.1,343.8 558.6,343.0 554.8,342.0"/><polygon points="512.5,380.7 515.9,377.4 520.7,381.0 517.3,384.3" fill="#679ec9"/><polygon points="608.5,364.1 612.7,363.3 616.8,361.5 612.6,362.2" fill="#def2f7"/><polygon class="p" points="650.3,342.9 654.8,343.9 658.7,343.0 654.2,342.1"/><polygon points="550.0,376.5 553.8,375.4 558.3,375.1 554.5,376.3" fill="#88bdda"/><polygon class="p" points="604.5,342.9 608.6,343.9 612.8,343.1 608.6,342.1"/><polygon class="p" points="558.6,343.0 562.4,344.0 566.9,343.1 563.0,342.1"/><polygon points="637.7,354.3 642.2,354.5 646.2,352.3 641.7,352.0" fill="#fffbb9"/><polygon points="520.7,381.0 524.2,378.2 529.0,380.3 525.4,383.0" fill="#6aa1cb"/><polygon class="p" points="512.7,343.0 516.2,344.0 520.9,343.2 517.3,342.2"/><polygon points="587.6,369.6 591.6,368.8 595.9,367.8 591.8,368.7" fill="#b9e0ed"/><polygon class="p" points="612.8,343.1 617.1,344.1 621.2,343.2 616.9,342.3"/><polygon class="p" points="566.9,343.1 570.8,344.1 575.2,343.3 571.3,342.3"/><polygon points="558.3,375.1 562.1,374.2 566.6,373.7 562.7,374.7" fill="#93c6df"/><polygon points="616.8,361.5 621.1,360.8 625.3,358.9 621.0,359.4" fill="#eaf7e6"/><polygon class="p" points="520.9,343.2 524.5,344.2 529.2,343.3 525.6,342.3"/><polygon class="p" points="621.2,343.2 625.5,344.2 629.6,343.4 625.3,342.4"/><polygon points="529.0,380.3 532.6,378.1 537.2,378.4 533.6,380.4" fill="#74acd1"/><polygon points="646.2,352.3 650.7,352.9 654.6,350.7 650.1,350.0" fill="#fff3ad"/><polygon class="p" points="575.2,343.3 579.2,344.3 583.5,343.4 579.5,342.5"/><polygon class="p" points="529.2,343.3 532.9,344.3 537.5,343.5 533.8,342.5"/><polygon points="595.9,367.8 600.0,366.9 604.3,365.7 600.1,366.5" fill="#c7e7f1"/><polygon class="p" points="629.6,343.4 633.9,344.4 638.0,343.6 633.6,342.6"/><polygon points="566.6,373.7 570.5,372.8 574.9,372.1 571.0,373.1" fill="#9fd0e4"/><polygon class="p" points="583.5,343.4 587.6,344.4 591.9,343.6 587.8,342.6"/><polygon points="625.3,358.9 629.6,358.5 633.7,356.5 629.3,356.7" fill="#f4fbd2"/><polygon class="p" points="537.5,343.5 541.2,344.5 545.8,343.6 542.0,342.7"/><polygon points="654.6,350.7 659.2,351.6 663.1,349.6 658.6,348.6" fill="#feeda4"/><polygon points="537.2,378.4 540.9,376.8 545.5,376.7 541.8,378.2" fill="#82b8d7"/><polygon class="p" points="638.0,343.6 642.4,344.6 646.4,343.7 641.9,342.7"/><polygon class="p" points="591.9,343.6 596.0,344.6 600.3,343.8 596.1,342.8"/><polygon points="604.3,365.7 608.5,364.8 612.7,363.3 608.5,364.1" fill="#d8eff6"/><polygon points="574.9,372.1 578.9,371.2 583.3,370.5 579.2,371.4" fill="#acdae9"/><polygon class="p" points="545.8,343.6 549.6,344.7 554.1,343.8 550.3,342.8"/><polygon class="p" points="646.4,343.7 650.9,344.7 654.8,343.9 650.3,342.9"/><polygon class="p" points="600.3,343.8 604.4,344.8 608.6,343.9 604.5,342.9"/><polygon points="633.7,356.5 638.1,356.5 642.2,354.5 637.7,354.3" fill="#feffc1"/><polygon points="545.5,376.7 549.2,375.6 553.8,375.4 550.0,376.5" fill="#8dc1dc"/><polygon class="p" points="554.1,343.8 558.0,344.8 562.4,344.0 558.6,343.0"/><polygon class="p" points="654.8,343.9 659.4,344.9 663.3,344.0 658.7,343.0"/><polygon class="p" points="507.9,343.9 511.5,344.9 516.2,344.0 512.7,343.0"/><polygon points="499.2,374.6 502.6,371.5 507.6,376.1 504.2,379.3" fill="#93c5de"/><polygon class="p" points="608.6,343.9 612.9,344.9 617.1,344.1 612.8,343.1"/><polygon points="583.3,370.5 587.3,369.6 591.6,368.8 587.6,369.6" fill="#b9e0ed"/><polygon points="612.7,363.3 617.0,362.6 621.1,360.8 616.8,361.5" fill="#e6f5ed"/><polygon points="507.6,376.1 511.0,373.0 515.9,377.4 512.5,380.7" fill="#8abfdb"/><polygon class="p" points="562.4,344.0 566.4,345.0 570.8,344.1 566.9,343.1"/><polygon points="553.8,375.4 557.6,374.5 562.1,374.2 558.3,375.1" fill="#98cae1"/><polygon class="p" points="516.2,344.0 519.8,345.0 524.5,344.2 520.9,343.2"/><polygon points="642.2,354.5 646.7,354.9 650.7,352.9 646.2,352.3" fill="#fff8b4"/><polygon points="515.9,377.4 519.4,374.6 524.2,378.2 520.7,381.0" fill="#84bad8"/><polygon class="p" points="617.1,344.1 621.4,345.1 625.5,344.2 621.2,343.2"/><polygon class="p" points="570.8,344.1 574.8,345.1 579.2,344.3 575.2,343.3"/><polygon class="p" points="524.5,344.2 528.2,345.2 532.9,344.3 529.2,343.3"/><polygon points="591.6,368.8 595.8,367.9 600.0,366.9 595.9,367.8" fill="#c6e6f1"/><polygon points="524.2,378.2 527.8,376.0 532.6,378.1 529.0,380.3" fill="#83b9d8"/><polygon class="p" points="625.5,344.2 629.8,345.3 633.9,344.4 629.6,343.4"/><polygon points="621.1,360.8 625.5,360.4 629.6,358.5 625.3,358.9" fill="#f0f9da"/><polygon points="562.1,374.2 566.0,373.3 570.5,372.8 566.6,373.7" fill="#a3d2e5"/><polygon class="p" points="579.2,344.3 583.2,345.3 587.6,344.4 583.5,343.4"/><polygon points="650.7,352.9 655.2,353.5 659.2,351.6 654.6,350.7" fill="#fff2ab"/><polygon class="p" points="532.9,344.3 536.6,345.3 541.2,344.5 537.5,343.5"/><polygon class="p" points="633.9,344.4 638.4,345.4 642.4,344.6 638.0,343.6"/><polygon points="532.6,378.1 536.2,376.5 540.9,376.8 537.2,378.4" fill="#8abeda"/><polygon class="p" points="587.6,344.4 591.7,345.5 596.0,344.6 591.9,343.6"/><polygon points="600.0,366.9 604.3,366.1 608.5,364.8 604.3,365.7" fill="#d5eef5"/><polygon class="p" points="541.2,344.5 545.0,345.5 549.6,344.7 545.8,343.6"/><polygon points="570.5,372.8 574.5,371.9 578.9,371.2 574.9,372.1" fill="#aedbea"/><polygon points="659.2,351.6 663.8,352.4 667.7,350.6 663.1,349.6" fill="#feeda3"/><polygon class="p" points="642.4,344.6 646.9,345.6 650.9,344.7 646.4,343.7"/><polygon points="629.6,358.5 634.0,358.4 638.1,356.5 633.7,356.5" fill="#f9fdc9"/><polygon class="p" points="596.0,344.6 600.2,345.6 604.4,344.8 600.3,343.8"/><polygon class="p" points="549.6,344.7 553.4,345.7 558.0,344.8 554.1,343.8"/><polygon points="540.9,376.8 544.6,375.7 549.2,375.6 545.5,376.7" fill="#94c6df"/><polygon class="p" points="650.9,344.7 655.4,345.7 659.4,344.9 654.8,343.9"/><polygon class="p" points="503.1,344.7 506.6,345.7 511.5,344.9 507.9,343.9"/><polygon class="p" points="604.4,344.8 608.7,345.8 612.9,344.9 608.6,343.9"/><polygon points="608.5,364.8 612.8,364.1 617.0,362.6 612.7,363.3" fill="#e3f4f2"/><polygon points="578.9,371.2 582.9,370.4 587.3,369.6 583.3,370.5" fill="#bae1ed"/><polygon class="p" points="558.0,344.8 561.9,345.8 566.4,345.0 562.4,344.0"/><polygon points="638.1,356.5 642.6,356.8 646.7,354.9 642.2,354.5" fill="#fffdbb"/><polygon class="p" points="659.4,344.9 664.0,345.9 667.9,345.0 663.3,344.0"/><polygon class="p" points="511.5,344.9 515.0,345.9 519.8,345.0 516.2,344.0"/><polygon points="549.2,375.6 553.1,374.8 557.6,374.5 553.8,375.4" fill="#9dcee3"/><polygon class="p" points="612.9,344.9 617.2,345.9 621.4,345.1 617.1,344.1"/><polygon class="p" points="566.4,345.0 570.3,346.0 574.8,345.1 570.8,344.1"/><polygon points="494.2,370.8 497.5,367.8 502.6,371.5 499.2,374.6" fill="#b7dfec"/><polygon class="p" points="519.8,345.0 523.5,346.0 528.2,345.2 524.5,344.2"/><polygon points="587.3,369.6 591.4,368.8 595.8,367.9 591.6,368.8" fill="#c7e7f1"/><polygon points="617.0,362.6 621.3,362.0 625.5,360.4 621.1,360.8" fill="#edf8e1"/><polygon points="646.7,354.9 651.2,355.4 655.2,353.5 650.7,352.9" fill="#fff6b1"/><polygon class="p" points="621.4,345.1 625.7,346.1 629.8,345.3 625.5,344.2"/><polygon points="502.6,371.5 506.0,368.6 511.0,373.0 507.6,376.1" fill="#b1dceb"/><polygon class="p" points="574.8,345.1 578.8,346.2 583.2,345.3 579.2,344.3"/><polygon points="557.6,374.5 561.5,373.7 566.0,373.3 562.1,374.2" fill="#a7d6e7"/><polygon class="p" points="528.2,345.2 531.9,346.2 536.6,345.3 532.9,344.3"/><polygon points="511.0,373.0 514.5,370.3 519.4,374.6 515.9,377.4" fill="#a8d6e8"/><polygon class="p" points="629.8,345.3 634.3,346.3 638.4,345.4 633.9,344.4"/><polygon points="519.4,374.6 523.0,372.4 527.8,376.0 524.2,378.2" fill="#9fcfe4"/><polygon class="p" points="583.2,345.3 587.3,346.3 591.7,345.5 587.6,344.4"/><polygon points="595.8,367.9 600.0,367.0 604.3,366.1 600.0,366.9" fill="#d4edf5"/><polygon points="655.2,353.5 659.8,354.2 663.8,352.4 659.2,351.6" fill="#fff0a9"/><polygon points="625.5,360.4 629.9,360.1 634.0,358.4 629.6,358.5" fill="#f6fbd0"/><polygon class="p" points="536.6,345.3 540.4,346.4 545.0,345.5 541.2,344.5"/><polygon points="566.0,373.3 570.0,372.5 574.5,371.9 570.5,372.8" fill="#b1dceb"/><polygon class="p" points="638.4,345.4 642.8,346.4 646.9,345.6 642.4,344.6"/><polygon points="527.8,376.0 531.5,374.4 536.2,376.5 532.6,378.1" fill="#9acbe1"/><polygon class="p" points="591.7,345.5 595.9,346.5 600.2,345.6 596.0,344.6"/><polygon class="p" points="545.0,345.5 548.8,346.5 553.4,345.7 549.6,344.7"/><polygon points="663.8,352.4 668.5,353.3 672.4,351.7 667.7,350.6" fill="#feeca2"/><polygon class="p" points="646.9,345.6 651.4,346.6 655.4,345.7 650.9,344.7"/><polygon class="p" points="498.3,345.6 501.8,346.6 506.6,345.7 503.1,344.7"/><polygon points="536.2,376.5 540.0,375.4 544.6,375.7 540.9,376.8" fill="#9ccde2"/><polygon points="604.3,366.1 608.5,365.3 612.8,364.1 608.5,364.8" fill="#e2f4f5"/><polygon class="p" points="600.2,345.6 604.4,346.7 608.7,345.8 604.4,344.8"/><polygon points="634.0,358.4 638.5,358.5 642.6,356.8 638.1,356.5" fill="#fefec2"/><polygon points="574.5,371.9 578.5,371.1 582.9,370.4 578.9,371.2" fill="#bce1ee"/><polygon class="p" points="553.4,345.7 557.3,346.7 561.9,345.8 558.0,344.8"/><polygon class="p" points="655.4,345.7 660.0,346.8 664.0,345.9 659.4,344.9"/><polygon class="p" points="506.6,345.7 510.2,346.7 515.0,345.9 511.5,344.9"/><polygon class="p" points="608.7,345.8 613.0,346.8 617.2,345.9 612.9,344.9"/><polygon points="544.6,375.7 548.5,374.9 553.1,374.8 549.2,375.6" fill="#a3d3e6"/><polygon class="p" points="561.9,345.8 565.8,346.9 570.3,346.0 566.4,345.0"/><polygon points="642.6,356.8 647.2,357.2 651.2,355.4 646.7,354.9" fill="#fffab7"/><polygon points="612.8,364.1 617.1,363.4 621.3,362.0 617.0,362.6" fill="#eaf7e5"/><polygon class="p" points="664.0,345.9 668.7,346.9 672.6,346.1 667.9,345.0"/><polygon class="p" points="515.0,345.9 518.7,346.9 523.5,346.0 519.8,345.0"/><polygon points="582.9,370.4 587.1,369.5 591.4,368.8 587.3,369.6" fill="#c8e7f1"/><polygon class="p" points="617.2,345.9 621.5,347.0 625.7,346.1 621.4,345.1"/><polygon class="p" points="570.3,346.0 574.4,347.0 578.8,346.2 574.8,345.1"/><polygon points="553.1,374.8 557.0,374.0 561.5,373.7 557.6,374.5" fill="#acd9e9"/><polygon class="p" points="523.5,346.0 527.2,347.1 531.9,346.2 528.2,345.2"/><polygon points="489.2,368.8 492.5,365.9 497.5,367.8 494.2,370.8" fill="#d1ecf4"/><polygon class="p" points="625.7,346.1 630.1,347.2 634.3,346.3 629.8,345.3"/><polygon points="651.2,355.4 655.8,355.9 659.8,354.2 655.2,353.5" fill="#fff4ae"/><polygon class="p" points="578.8,346.2 582.9,347.2 587.3,346.3 583.2,345.3"/><polygon points="621.3,362.0 625.7,361.7 629.9,360.1 625.5,360.4" fill="#f3fad5"/><polygon points="591.4,368.8 595.6,367.9 600.0,367.0 595.8,367.9" fill="#d5eef5"/><polygon class="p" points="531.9,346.2 535.7,347.2 540.4,346.4 536.6,345.3"/><polygon class="p" points="634.3,346.3 638.8,347.3 642.8,346.4 638.4,345.4"/><polygon points="497.5,367.8 500.9,365.1 506.0,368.6 502.6,371.5" fill="#d3edf4"/><polygon points="561.5,373.7 565.5,373.0 570.0,372.5 566.0,373.3" fill="#b5deec"/><polygon class="p" points="587.3,346.3 591.5,347.4 595.9,346.5 591.7,345.5"/><polygon points="659.8,354.2 664.5,354.9 668.5,353.3 663.8,352.4" fill="#feefa7"/><polygon class="p" points="540.4,346.4 544.2,347.4 548.8,346.5 545.0,345.5"/><polygon points="506.0,368.6 509.5,366.1 514.5,370.3 511.0,373.0" fill="#cce9f2"/><polygon class="p" points="642.8,346.4 647.4,347.5 651.4,346.6 646.9,345.6"/><polygon class="p" points="493.3,346.4 496.8,347.5 501.8,346.6 498.3,345.6"/><polygon points="514.5,370.3 518.0,368.3 523.0,372.4 519.4,374.6" fill="#c0e3ef"/><polygon points="629.9,360.1 634.4,360.2 638.5,358.5 634.0,358.4" fill="#fafdc7"/><polygon points="600.0,367.0 604.2,366.2 608.5,365.3 604.3,366.1" fill="#e1f3f6"/><polygon class="p" points="595.9,346.5 600.1,347.5 604.4,346.7 600.2,345.6"/><polygon points="523.0,372.4 526.6,371.0 531.5,374.4 527.8,376.0" fill="#b4ddec"/><polygon points="570.0,372.5 574.0,371.7 578.5,371.1 574.5,371.9" fill="#bfe3ef"/><polygon class="p" points="548.8,346.5 552.7,347.6 557.3,346.7 553.4,345.7"/><polygon points="668.5,353.3 673.2,354.3 677.1,352.8 672.4,351.7" fill="#feeca2"/><polygon points="531.5,374.4 535.2,373.3 540.0,375.4 536.2,376.5" fill="#acd9e9"/><polygon class="p" points="651.4,346.6 656.1,347.7 660.0,346.8 655.4,345.7"/><polygon class="p" points="501.8,346.6 505.3,347.6 510.2,346.7 506.6,345.7"/><polygon class="p" points="604.4,346.7 608.7,347.7 613.0,346.8 608.7,345.8"/><polygon points="638.5,358.5 643.1,358.8 647.2,357.2 642.6,356.8" fill="#fffdbc"/><polygon class="p" points="557.3,346.7 561.3,347.7 565.8,346.9 561.9,345.8"/><polygon points="608.5,365.3 612.9,364.6 617.1,363.4 612.8,364.1" fill="#e9f6e7"/><polygon points="540.0,375.4 543.8,374.7 548.5,374.9 544.6,375.7" fill="#abd9e9"/><polygon class="p" points="660.0,346.8 664.7,347.8 668.7,346.9 664.0,345.9"/><polygon class="p" points="510.2,346.7 513.8,347.8 518.7,346.9 515.0,345.9"/><polygon points="578.5,371.1 582.6,370.2 587.1,369.5 582.9,370.4" fill="#cae8f2"/><polygon class="p" points="613.0,346.8 617.3,347.9 621.5,347.0 617.2,345.9"/><polygon class="p" points="565.8,346.9 569.9,347.9 574.4,347.0 570.3,346.0"/><polygon class="p" points="668.7,346.9 673.4,348.0 677.3,347.1 672.6,346.1"/><polygon class="p" points="518.7,346.9 522.4,348.0 527.2,347.1 523.5,346.0"/><polygon points="647.2,357.2 651.8,357.6 655.8,355.9 651.2,355.4" fill="#fff7b3"/><polygon points="548.5,374.9 552.3,374.3 557.0,374.0 553.1,374.8" fill="#b1dceb"/><polygon class="p" points="621.5,347.0 626.0,348.0 630.1,347.2 625.7,346.1"/><polygon points="617.1,363.4 621.5,363.0 625.7,361.7 621.3,362.0" fill="#f1f9d9"/><polygon class="p" points="574.4,347.0 578.5,348.1 582.9,347.2 578.8,346.2"/><polygon points="587.1,369.5 591.2,368.6 595.6,367.9 591.4,368.8" fill="#d6eef5"/><polygon class="p" points="527.2,347.1 530.9,348.1 535.7,347.2 531.9,346.2"/><polygon points="484.1,367.6 487.4,364.8 492.5,365.9 489.2,368.8" fill="#e1f4f5"/><polygon class="p" points="630.1,347.2 634.6,348.2 638.8,347.3 634.3,346.3"/><polygon points="655.8,355.9 660.5,356.5 664.5,354.9 659.8,354.2" fill="#fff2ac"/><polygon points="557.0,374.0 560.9,373.4 565.5,373.0 561.5,373.7" fill="#b9e0ed"/><polygon class="p" points="582.9,347.2 587.1,348.3 591.5,347.4 587.3,346.3"/><polygon class="p" points="535.7,347.2 539.5,348.3 544.2,347.4 540.4,346.4"/><polygon points="625.7,361.7 630.2,361.7 634.4,360.2 629.9,360.1" fill="#f8fccc"/><polygon class="p" points="638.8,347.3 643.3,348.4 647.4,347.5 642.8,346.4"/><polygon class="p" points="488.4,347.3 491.9,348.4 496.8,347.5 493.3,346.4"/><polygon points="595.6,367.9 599.9,367.1 604.2,366.2 600.0,367.0" fill="#e2f4f5"/><polygon class="p" points="591.5,347.4 595.7,348.4 600.1,347.5 595.9,346.5"/><polygon points="492.5,365.9 495.9,363.3 500.9,365.1 497.5,367.8" fill="#e7f6eb"/><polygon points="664.5,354.9 669.3,355.7 673.2,354.3 668.5,353.3" fill="#feeea6"/><polygon class="p" points="544.2,347.4 548.1,348.5 552.7,347.6 548.8,346.5"/><polygon points="565.5,373.0 569.5,372.2 574.0,371.7 570.0,372.5" fill="#c2e4f0"/><polygon class="p" points="647.4,347.5 652.0,348.5 656.1,347.7 651.4,346.6"/><polygon class="p" points="496.8,347.5 500.4,348.5 505.3,347.6 501.8,346.6"/><polygon class="p" points="600.1,347.5 604.4,348.6 608.7,347.7 604.4,346.7"/><polygon points="500.9,365.1 504.4,362.8 509.5,366.1 506.0,368.6" fill="#e7f6ea"/><polygon points="634.4,360.2 638.9,360.4 643.1,358.8 638.5,358.5" fill="#feffc1"/><polygon class="p" points="552.7,347.6 556.7,348.6 561.3,347.7 557.3,346.7"/><polygon points="604.2,366.2 608.6,365.6 612.9,364.6 608.5,365.3" fill="#e9f6e8"/><polygon points="673.2,354.3 678.0,355.2 681.9,353.9 677.1,352.8" fill="#feeba1"/><polygon points="509.5,366.1 513.0,364.2 518.0,368.3 514.5,370.3" fill="#e2f4f4"/><polygon class="p" points="656.1,347.7 660.7,348.7 664.7,347.8 660.0,346.8"/><polygon class="p" points="505.3,347.6 509.0,348.7 513.8,347.8 510.2,346.7"/><polygon points="518.0,368.3 521.7,366.9 526.6,371.0 523.0,372.4" fill="#d4edf5"/><polygon points="526.6,371.0 530.3,370.0 535.2,373.3 531.5,374.4" fill="#c5e6f0"/><polygon class="p" points="608.7,347.7 613.0,348.8 617.3,347.9 613.0,346.8"/><polygon points="574.0,371.7 578.1,370.8 582.6,370.2 578.5,371.1" fill="#cdeaf3"/><polygon class="p" points="561.3,347.7 565.3,348.8 569.9,347.9 565.8,346.9"/><polygon points="535.2,373.3 539.0,372.7 543.8,374.7 540.0,375.4" fill="#bae0ed"/><polygon points="643.1,358.8 647.7,359.1 651.8,357.6 647.2,357.2" fill="#fffab7"/><polygon class="p" points="664.7,347.8 669.5,348.9 673.4,348.0 668.7,346.9"/><polygon class="p" points="513.8,347.8 517.5,348.9 522.4,348.0 518.7,346.9"/><polygon class="p" points="617.3,347.9 621.7,348.9 626.0,348.0 621.5,347.0"/><polygon points="612.9,364.6 617.3,364.2 621.5,363.0 617.1,363.4" fill="#f0f9db"/><polygon points="543.8,374.7 547.6,374.1 552.3,374.3 548.5,374.9" fill="#b8dfed"/><polygon class="p" points="569.9,347.9 573.9,349.0 578.5,348.1 574.4,347.0"/><polygon points="582.6,370.2 586.8,369.3 591.2,368.6 587.1,369.5" fill="#d8eff6"/><polygon class="p" points="673.4,348.0 678.2,349.1 682.1,348.2 677.3,347.1"/><polygon class="p" points="522.4,348.0 526.1,349.0 530.9,348.1 527.2,347.1"/><polygon class="p" points="626.0,348.0 630.4,349.1 634.6,348.2 630.1,347.2"/><polygon points="651.8,357.6 656.5,358.0 660.5,356.5 655.8,355.9" fill="#fff5b0"/><polygon class="p" points="578.5,348.1 582.6,349.2 587.1,348.3 582.9,347.2"/><polygon points="479.0,366.7 482.3,364.0 487.4,364.8 484.1,367.6" fill="#e9f7e7"/><polygon points="552.3,374.3 556.3,373.7 560.9,373.4 557.0,374.0" fill="#bde2ee"/><polygon class="p" points="530.9,348.1 534.7,349.2 539.5,348.3 535.7,347.2"/><polygon points="621.5,363.0 626.0,363.0 630.2,361.7 625.7,361.7" fill="#f6fccf"/><polygon class="p" points="634.6,348.2 639.2,349.3 643.3,348.4 638.8,347.3"/><polygon class="p" points="483.3,348.2 486.8,349.2 491.9,348.4 488.4,347.3"/><polygon points="591.2,368.6 595.5,367.8 599.9,367.1 595.6,367.9" fill="#e2f4f4"/><polygon class="p" points="587.1,348.3 591.3,349.3 595.7,348.4 591.5,347.4"/><polygon points="660.5,356.5 665.3,357.2 669.3,355.7 664.5,354.9" fill="#fff1a9"/><polygon class="p" points="539.5,348.3 543.4,349.4 548.1,348.5 544.2,347.4"/><polygon class="p" points="643.3,348.4 647.9,349.4 652.0,348.5 647.4,347.5"/><polygon points="560.9,373.4 564.9,372.7 569.5,372.2 565.5,373.0" fill="#c6e6f1"/><polygon class="p" points="491.9,348.4 495.4,349.4 500.4,348.5 496.8,347.5"/><polygon points="630.2,361.7 634.8,361.8 638.9,360.4 634.4,360.2" fill="#fcfec5"/><polygon points="487.4,364.8 490.8,362.3 495.9,363.3 492.5,365.9" fill="#f1f9d9"/><polygon class="p" points="595.7,348.4 600.0,349.5 604.4,348.6 600.1,347.5"/><polygon class="p" points="548.1,348.5 552.0,349.5 556.7,348.6 552.7,347.6"/><polygon points="669.3,355.7 674.1,356.6 678.0,355.2 673.2,354.3" fill="#feeda4"/><polygon points="599.9,367.1 604.2,366.4 608.6,365.6 604.2,366.2" fill="#e9f6e7"/><polygon class="p" points="652.0,348.5 656.7,349.6 660.7,348.7 656.1,347.7"/><polygon class="p" points="500.4,348.5 504.0,349.6 509.0,348.7 505.3,347.6"/><polygon class="p" points="604.4,348.6 608.7,349.7 613.0,348.8 608.7,347.7"/><polygon points="569.5,372.2 573.6,371.3 578.1,370.8 574.0,371.7" fill="#d0ebf3"/><polygon points="495.9,363.3 499.3,361.1 504.4,362.8 500.9,365.1" fill="#f5fbd1"/><polygon class="p" points="556.7,348.6 560.7,349.7 565.3,348.8 561.3,347.7"/><polygon points="638.9,360.4 643.6,360.6 647.7,359.1 643.1,358.8" fill="#fffcbb"/><polygon points="678.0,355.2 682.9,356.3 686.8,355.0 681.9,353.9" fill="#feeba1"/><polygon class="p" points="660.7,348.7 665.5,349.8 669.5,348.9 664.7,347.8"/><polygon class="p" points="509.0,348.7 512.6,349.8 517.5,348.9 513.8,347.8"/><polygon class="p" points="613.0,348.8 617.5,349.8 621.7,348.9 617.3,347.9"/><polygon points="608.6,365.6 613.0,365.2 617.3,364.2 612.9,364.6" fill="#eff9dc"/><polygon points="504.4,362.8 508.0,361.0 513.0,364.2 509.5,366.1" fill="#f4fbd3"/><polygon class="p" points="565.3,348.8 569.4,349.9 573.9,349.0 569.9,347.9"/><polygon points="513.0,364.2 516.7,363.0 521.7,366.9 518.0,368.3" fill="#edf8e0"/><polygon points="521.7,366.9 525.4,366.1 530.3,370.0 526.6,371.0" fill="#e2f4f3"/><polygon class="p" points="669.5,348.9 674.3,350.0 678.2,349.1 673.4,348.0"/><polygon class="p" points="517.5,348.9 521.3,349.9 526.1,349.0 522.4,348.0"/><polygon points="530.3,370.0 534.1,369.4 539.0,372.7 535.2,373.3" fill="#d3ecf4"/><polygon points="578.1,370.8 582.3,369.9 586.8,369.3 582.6,370.2" fill="#dbf0f7"/><polygon points="647.7,359.1 652.4,359.5 656.5,358.0 651.8,357.6" fill="#fff7b3"/><polygon class="p" points="621.7,348.9 626.2,350.0 630.4,349.1 626.0,348.0"/><polygon points="539.0,372.7 542.9,372.2 547.6,374.1 543.8,374.7" fill="#c6e6f1"/><polygon class="p" points="573.9,349.0 578.1,350.1 582.6,349.2 578.5,348.1"/><polygon points="617.3,364.2 621.7,364.1 626.0,363.0 621.5,363.0" fill="#f5fbd1"/><polygon class="p" points="678.2,349.1 683.1,350.1 687.0,349.2 682.1,348.2"/><polygon class="p" points="526.1,349.0 529.9,350.1 534.7,349.2 530.9,348.1"/><polygon points="547.6,374.1 551.6,373.7 556.3,373.7 552.3,374.3" fill="#c4e5f0"/><polygon class="p" points="630.4,349.1 635.0,350.2 639.2,349.3 634.6,348.2"/><polygon class="p" points="478.3,349.1 481.7,350.2 486.8,349.2 483.3,348.2"/><polygon points="473.8,366.0 477.1,363.3 482.3,364.0 479.0,366.7" fill="#f0f9da"/><polygon points="656.5,358.0 661.2,358.6 665.3,357.2 660.5,356.5" fill="#fff3ac"/><polygon class="p" points="582.6,349.2 586.8,350.2 591.3,349.3 587.1,348.3"/><polygon points="586.8,369.3 591.0,368.4 595.5,367.8 591.2,368.6" fill="#e4f4f1"/><polygon class="p" points="534.7,349.2 538.6,350.3 543.4,349.4 539.5,348.3"/><polygon class="p" points="639.2,349.3 643.8,350.4 647.9,349.4 643.3,348.4"/><polygon class="p" points="486.8,349.2 490.3,350.3 495.4,349.4 491.9,348.4"/><polygon points="626.0,363.0 630.5,363.1 634.8,361.8 630.2,361.7" fill="#fafdc7"/><polygon points="556.3,373.7 560.3,373.1 564.9,372.7 560.9,373.4" fill="#cae8f2"/><polygon class="p" points="591.3,349.3 595.6,350.4 600.0,349.5 595.7,348.4"/><polygon points="665.3,357.2 670.1,358.0 674.1,356.6 669.3,355.7" fill="#feefa7"/><polygon class="p" points="543.4,349.4 547.3,350.5 552.0,349.5 548.1,348.5"/><polygon points="482.3,364.0 485.6,361.5 490.8,362.3 487.4,364.8" fill="#f8fccc"/><polygon points="595.5,367.8 599.8,367.1 604.2,366.4 599.9,367.1" fill="#eaf7e6"/><polygon class="p" points="647.9,349.4 652.6,350.5 656.7,349.6 652.0,348.5"/><polygon class="p" points="495.4,349.4 499.0,350.5 504.0,349.6 500.4,348.5"/><polygon class="p" points="600.0,349.5 604.3,350.6 608.7,349.7 604.4,348.6"/><polygon points="634.8,361.8 639.4,362.0 643.6,360.6 638.9,360.4" fill="#fffebe"/><polygon class="p" points="552.0,349.5 556.0,350.6 560.7,349.7 556.7,348.6"/><polygon points="564.9,372.7 569.0,371.8 573.6,371.3 569.5,372.2" fill="#d3edf4"/><polygon points="674.1,356.6 679.0,357.7 682.9,356.3 678.0,355.2" fill="#feeda4"/><polygon class="p" points="656.7,349.6 661.5,350.7 665.5,349.8 660.7,348.7"/><polygon class="p" points="504.0,349.6 507.7,350.7 512.6,349.8 509.0,348.7"/><polygon class="p" points="608.7,349.7 613.1,350.8 617.5,349.8 613.0,348.8"/><polygon points="604.2,366.4 608.6,366.0 613.0,365.2 608.6,365.6" fill="#f0f9db"/><polygon points="490.8,362.3 494.2,360.1 499.3,361.1 495.9,363.3" fill="#feffc0"/><polygon class="p" points="560.7,349.7 564.7,350.8 569.4,349.9 565.3,348.8"/><polygon points="682.9,356.3 687.8,357.5 691.7,356.1 686.8,355.0" fill="#feeba1"/><polygon class="p" points="665.5,349.8 670.3,350.9 674.3,350.0 669.5,348.9"/><polygon class="p" points="512.6,349.8 516.3,350.9 521.3,349.9 517.5,348.9"/><polygon points="643.6,360.6 648.2,360.9 652.4,359.5 647.7,359.1" fill="#fff9b6"/><polygon points="573.6,371.3 577.8,370.3 582.3,369.9 578.1,370.8" fill="#def2f7"/><polygon class="p" points="617.5,349.8 621.9,350.9 626.2,350.0 621.7,348.9"/><polygon class="p" points="569.4,349.9 573.5,351.0 578.1,350.1 573.9,349.0"/><polygon points="499.3,361.1 502.9,359.4 508.0,361.0 504.4,362.8" fill="#fffcbb"/><polygon points="613.0,365.2 617.4,365.1 621.7,364.1 617.3,364.2" fill="#f5fbd2"/><polygon class="p" points="674.3,350.0 679.2,351.1 683.1,350.1 678.2,349.1"/><polygon class="p" points="521.3,349.9 525.0,351.0 529.9,350.1 526.1,349.0"/><polygon class="p" points="626.2,350.0 630.8,351.1 635.0,350.2 630.4,349.1"/><polygon class="p" points="473.1,350.0 476.5,351.1 481.7,350.2 478.3,349.1"/><polygon points="652.4,359.5 657.1,360.0 661.2,358.6 656.5,358.0" fill="#fff5af"/><polygon points="508.0,361.0 511.6,359.9 516.7,363.0 513.0,364.2" fill="#ffffc0"/><polygon points="534.1,369.4 538.0,369.0 542.9,372.2 539.0,372.7" fill="#def2f7"/><polygon points="525.4,366.1 529.2,365.4 534.1,369.4 530.3,370.0" fill="#eaf7e5"/><polygon class="p" points="578.1,350.1 582.3,351.2 586.8,350.2 582.6,349.2"/><polygon points="516.7,363.0 520.4,362.2 525.4,366.1 521.7,366.9" fill="#f6fbd0"/><polygon points="582.3,369.9 586.5,369.0 591.0,368.4 586.8,369.3" fill="#e5f5ee"/><polygon points="542.9,372.2 546.8,371.9 551.6,373.7 547.6,374.1" fill="#d1ecf4"/><polygon class="p" points="683.1,350.1 688.1,351.2 692.0,350.3 687.0,349.2"/><polygon class="p" points="529.9,350.1 533.8,351.2 538.6,350.3 534.7,349.2"/><polygon points="468.5,365.2 471.8,362.7 477.1,363.3 473.8,366.0" fill="#f7fcce"/><polygon class="p" points="635.0,350.2 639.6,351.3 643.8,350.4 639.2,349.3"/><polygon points="621.7,364.1 626.3,364.2 630.5,363.1 626.0,363.0" fill="#fafdc9"/><polygon class="p" points="481.7,350.2 485.2,351.3 490.3,350.3 486.8,349.2"/><polygon class="p" points="586.8,350.2 591.1,351.3 595.6,350.4 591.3,349.3"/><polygon points="661.2,358.6 666.0,359.4 670.1,358.0 665.3,357.2" fill="#fff1aa"/><polygon points="551.6,373.7 555.6,373.1 560.3,373.1 556.3,373.7" fill="#d0ebf3"/><polygon class="p" points="538.6,350.3 542.5,351.4 547.3,350.5 543.4,349.4"/><polygon class="p" points="643.8,350.4 648.5,351.5 652.6,350.5 647.9,349.4"/><polygon class="p" points="490.3,350.3 493.9,351.4 499.0,350.5 495.4,349.4"/><polygon points="591.0,368.4 595.3,367.7 599.8,367.1 595.5,367.8" fill="#ebf7e3"/><polygon class="p" points="595.6,350.4 599.9,351.5 604.3,350.6 600.0,349.5"/><polygon points="630.5,363.1 635.2,363.2 639.4,362.0 634.8,361.8" fill="#feffc0"/><polygon points="477.1,363.3 480.4,361.0 485.6,361.5 482.3,364.0" fill="#ffffc0"/><polygon points="670.1,358.0 675.0,359.0 679.0,357.7 674.1,356.6" fill="#feeea6"/><polygon class="p" points="547.3,350.5 551.3,351.6 556.0,350.6 552.0,349.5"/><polygon points="560.3,373.1 564.3,372.2 569.0,371.8 564.9,372.7" fill="#d8eff6"/><polygon class="p" points="652.6,350.5 657.4,351.6 661.5,350.7 656.7,349.6"/><polygon class="p" points="499.0,350.5 502.6,351.6 507.7,350.7 504.0,349.6"/><polygon class="p" points="604.3,350.6 608.7,351.7 613.1,350.8 608.7,349.7"/><polygon points="599.8,367.1 604.2,366.7 608.6,366.0 604.2,366.4" fill="#f1f9da"/><polygon class="p" points="556.0,350.6 560.1,351.7 564.7,350.8 560.7,349.7"/><polygon points="679.0,357.7 683.9,358.9 687.8,357.5 682.9,356.3" fill="#feeda4"/><polygon points="639.4,362.0 644.1,362.2 648.2,360.9 643.6,360.6" fill="#fffbb8"/><polygon class="p" points="661.5,350.7 666.3,351.8 670.3,350.9 665.5,349.8"/><polygon class="p" points="507.7,350.7 511.4,351.8 516.3,350.9 512.6,349.8"/><polygon points="485.6,361.5 489.0,359.4 494.2,360.1 490.8,362.3" fill="#fff9b5"/><polygon class="p" points="613.1,350.8 617.6,351.9 621.9,350.9 617.5,349.8"/><polygon points="569.0,371.8 573.1,370.8 577.8,370.3 573.6,371.3" fill="#e1f3f6"/><polygon class="p" points="564.7,350.8 568.9,351.9 573.5,351.0 569.4,349.9"/><polygon points="687.8,357.5 692.8,358.8 696.8,357.4 691.7,356.1" fill="#feeca2"/><polygon points="608.6,366.0 613.1,366.0 617.4,365.1 613.0,365.2" fill="#f5fbd1"/><polygon class="p" points="670.3,350.9 675.2,352.0 679.2,351.1 674.3,350.0"/><polygon class="p" points="516.3,350.9 520.1,352.0 525.0,351.0 521.3,349.9"/><polygon points="648.2,360.9 653.0,361.4 657.1,360.0 652.4,359.5" fill="#fff6b2"/><polygon class="p" points="621.9,350.9 626.5,352.0 630.8,351.1 626.2,350.0"/><polygon class="p" points="467.9,350.9 471.3,352.0 476.5,351.1 473.1,350.0"/><polygon points="494.2,360.1 497.7,358.5 502.9,359.4 499.3,361.1" fill="#fff4ae"/><polygon class="p" points="573.5,351.0 577.7,352.1 582.3,351.2 578.1,350.1"/><polygon class="p" points="679.2,351.1 684.2,352.2 688.1,351.2 683.1,350.1"/><polygon class="p" points="525.0,351.0 528.9,352.1 533.8,351.2 529.9,350.1"/><polygon points="577.8,370.3 582.0,369.4 586.5,369.0 582.3,369.9" fill="#e7f6eb"/><polygon points="617.4,365.1 622.0,365.2 626.3,364.2 621.7,364.1" fill="#f9fdc9"/><polygon class="p" points="630.8,351.1 635.4,352.2 639.6,351.3 635.0,350.2"/><polygon class="p" points="476.5,351.1 480.0,352.2 485.2,351.3 481.7,350.2"/><polygon points="657.1,360.0 661.9,360.7 666.0,359.4 661.2,358.6" fill="#fff3ac"/><polygon points="502.9,359.4 506.5,358.3 511.6,359.9 508.0,361.0" fill="#fff3ac"/><polygon class="p" points="582.3,351.2 586.5,352.3 591.1,351.3 586.8,350.2"/><polygon points="463.2,364.5 466.4,362.1 471.8,362.7 468.5,365.2" fill="#fdfec3"/><polygon class="p" points="688.1,351.2 693.1,352.3 697.0,351.4 692.0,350.3"/><polygon class="p" points="533.8,351.2 537.7,352.3 542.5,351.4 538.6,350.3"/><polygon points="538.0,369.0 541.9,368.8 546.8,371.9 542.9,372.2" fill="#e5f5ef"/><polygon points="511.6,359.9 515.3,359.2 520.4,362.2 516.7,363.0" fill="#fff7b3"/><polygon points="529.2,365.4 533.0,365.1 538.0,369.0 534.1,369.4" fill="#f1f9d9"/><polygon class="p" points="639.6,351.3 644.3,352.4 648.5,351.5 643.8,350.4"/><polygon points="520.4,362.2 524.1,361.6 529.2,365.4 525.4,366.1" fill="#fdfec3"/><polygon class="p" points="485.2,351.3 488.8,352.4 493.9,351.4 490.3,350.3"/><polygon points="546.8,371.9 550.8,371.5 555.6,373.1 551.6,373.7" fill="#dcf1f7"/><polygon points="586.5,369.0 590.8,368.2 595.3,367.7 591.0,368.4" fill="#edf8e0"/><polygon class="p" points="591.1,351.3 595.4,352.4 599.9,351.5 595.6,350.4"/><polygon points="626.3,364.2 630.9,364.3 635.2,363.2 630.5,363.1" fill="#fefec1"/><polygon points="666.0,359.4 670.9,360.3 675.0,359.0 670.1,358.0" fill="#fff0a8"/><polygon class="p" points="542.5,351.4 546.5,352.5 551.3,351.6 547.3,350.5"/><polygon class="p" points="648.5,351.5 653.2,352.6 657.4,351.6 652.6,350.5"/><polygon class="p" points="493.9,351.4 497.5,352.5 502.6,351.6 499.0,350.5"/><polygon points="471.8,362.7 475.1,360.4 480.4,361.0 477.1,363.3" fill="#fff9b6"/><polygon points="555.6,373.1 559.6,372.2 564.3,372.2 560.3,373.1" fill="#ddf2f7"/><polygon class="p" points="599.9,351.5 604.3,352.6 608.7,351.7 604.3,350.6"/><polygon points="675.0,359.0 679.9,360.2 683.9,358.9 679.0,357.7" fill="#feeea6"/><polygon points="595.3,367.7 599.7,367.3 604.2,366.7 599.8,367.1" fill="#f2fad7"/><polygon class="p" points="551.3,351.6 555.3,352.7 560.1,351.7 556.0,350.6"/><polygon points="635.2,363.2 639.8,363.4 644.1,362.2 639.4,362.0" fill="#fffcba"/><polygon class="p" points="657.4,351.6 662.2,352.7 666.3,351.8 661.5,350.7"/><polygon class="p" points="502.6,351.6 506.3,352.7 511.4,351.8 507.7,350.7"/><polygon class="p" points="608.7,351.7 613.2,352.8 617.6,351.9 613.1,350.8"/><polygon points="480.4,361.0 483.8,358.9 489.0,359.4 485.6,361.5" fill="#fff2ac"/><polygon class="p" points="560.1,351.7 564.2,352.9 568.9,351.9 564.7,350.8"/><polygon points="564.3,372.2 568.5,371.1 573.1,370.8 569.0,371.8" fill="#e4f4f1"/><polygon points="683.9,358.9 688.9,360.2 692.8,358.8 687.8,357.5" fill="#feeda4"/><polygon class="p" points="666.3,351.8 671.2,352.9 675.2,352.0 670.3,350.9"/><polygon class="p" points="511.4,351.8 515.1,352.9 520.1,352.0 516.3,350.9"/><polygon points="604.2,366.7 608.6,366.7 613.1,366.0 608.6,366.0" fill="#f6fcd0"/><polygon points="644.1,362.2 648.8,362.6 653.0,361.4 648.2,360.9" fill="#fff8b4"/><polygon class="p" points="617.6,351.9 622.1,353.0 626.5,352.0 621.9,350.9"/><polygon class="p" points="462.6,351.8 466.0,353.0 471.3,352.0 467.9,350.9"/><polygon class="p" points="568.9,351.9 573.1,353.0 577.7,352.1 573.5,351.0"/><polygon points="692.8,358.8 697.9,360.4 701.8,358.9 696.8,357.4" fill="#feeda3"/><polygon class="p" points="675.2,352.0 680.2,353.1 684.2,352.2 679.2,351.1"/><polygon class="p" points="520.1,352.0 523.9,353.1 528.9,352.1 525.0,351.0"/><polygon points="489.0,359.4 492.5,357.8 497.7,358.5 494.2,360.1" fill="#feeda4"/><polygon points="573.1,370.8 577.3,369.8 582.0,369.4 577.8,370.3" fill="#eaf7e6"/><polygon class="p" points="626.5,352.0 631.1,353.2 635.4,352.2 630.8,351.1"/><polygon points="613.1,366.0 617.6,366.1 622.0,365.2 617.4,365.1" fill="#fafdc9"/><polygon class="p" points="471.3,352.0 474.8,353.1 480.0,352.2 476.5,351.1"/><polygon points="653.0,361.4 657.8,362.0 661.9,360.7 657.1,360.0" fill="#fff4ae"/><polygon class="p" points="577.7,352.1 581.9,353.2 586.5,352.3 582.3,351.2"/><polygon class="p" points="684.2,352.2 689.2,353.3 693.1,352.3 688.1,351.2"/><polygon class="p" points="528.9,352.1 532.8,353.3 537.7,352.3 533.8,351.2"/><polygon points="457.8,363.9 461.0,361.6 466.4,362.1 463.2,364.5" fill="#fffbb9"/><polygon class="p" points="635.4,352.2 640.0,353.3 644.3,352.4 639.6,351.3"/><polygon class="p" points="480.0,352.2 483.6,353.3 488.8,352.4 485.2,351.3"/><polygon points="497.7,358.5 501.3,357.4 506.5,358.3 502.9,359.4" fill="#feea9f"/><polygon class="p" points="586.5,352.3 590.9,353.4 595.4,352.4 591.1,351.3"/><polygon points="622.0,365.2 626.5,365.4 630.9,364.3 626.3,364.2" fill="#fdfec2"/><polygon points="661.9,360.7 666.8,361.6 670.9,360.3 666.0,359.4" fill="#fff1aa"/><polygon points="582.0,369.4 586.3,368.7 590.8,368.2 586.5,369.0" fill="#eff9dc"/><polygon class="p" points="693.1,352.3 698.2,353.5 702.1,352.5 697.0,351.4"/><polygon class="p" points="537.7,352.3 541.6,353.4 546.5,352.5 542.5,351.4"/><polygon class="p" points="644.3,352.4 649.0,353.5 653.2,352.6 648.5,351.5"/><polygon points="506.5,358.3 510.2,357.6 515.3,359.2 511.6,359.9" fill="#feeba0"/><polygon class="p" points="488.8,352.4 492.4,353.5 497.5,352.5 493.9,351.4"/><polygon class="p" points="595.4,352.4 599.8,353.6 604.3,352.6 599.9,351.5"/><polygon points="541.9,368.8 545.9,368.7 550.8,371.5 546.8,371.9" fill="#ebf7e4"/><polygon points="533.0,365.1 536.9,365.1 541.9,368.8 538.0,369.0" fill="#f6fccf"/><polygon points="515.3,359.2 519.1,358.6 524.1,361.6 520.4,362.2" fill="#fff0a9"/><polygon points="670.9,360.3 675.9,361.6 679.9,360.2 675.0,359.0" fill="#fff0a8"/><polygon points="524.1,361.6 528.0,361.3 533.0,365.1 529.2,365.4" fill="#fffbb9"/><polygon points="466.4,362.1 469.7,359.9 475.1,360.4 471.8,362.7" fill="#fff3ae"/><polygon class="p" points="546.5,352.5 550.5,353.6 555.3,352.7 551.3,351.6"/><polygon points="630.9,364.3 635.5,364.6 639.8,363.4 635.2,363.2" fill="#fffcbb"/><polygon points="590.8,368.2 595.2,367.9 599.7,367.3 595.3,367.7" fill="#f4fbd4"/><polygon points="550.8,371.5 554.8,370.9 559.6,372.2 555.6,373.1" fill="#e5f5ef"/><polygon class="p" points="653.2,352.6 658.0,353.7 662.2,352.7 657.4,351.6"/><polygon class="p" points="497.5,352.5 501.2,353.7 506.3,352.7 502.6,351.6"/><polygon class="p" points="604.3,352.6 608.8,353.8 613.2,352.8 608.7,351.7"/><polygon points="679.9,360.2 684.9,361.6 688.9,360.2 683.9,358.9" fill="#feefa6"/><polygon class="p" points="555.3,352.7 559.4,353.8 564.2,352.9 560.1,351.7"/><polygon class="p" points="662.2,352.7 667.1,353.9 671.2,352.9 666.3,351.8"/><polygon points="559.6,372.2 563.7,371.2 568.5,371.1 564.3,372.2" fill="#e7f6ec"/><polygon class="p" points="506.3,352.7 510.1,353.9 515.1,352.9 511.4,351.8"/><polygon points="639.8,363.4 644.6,363.8 648.8,362.6 644.1,362.2" fill="#fff8b5"/><polygon points="599.7,367.3 604.2,367.4 608.6,366.7 604.2,366.7" fill="#f7fccd"/><polygon points="475.1,360.4 478.5,358.5 483.8,358.9 480.4,361.0" fill="#feeda3"/><polygon class="p" points="613.2,352.8 617.7,353.9 622.1,353.0 617.6,351.9"/><polygon class="p" points="457.3,352.8 460.7,353.9 466.0,353.0 462.6,351.8"/><polygon points="688.9,360.2 694.0,361.8 697.9,360.4 692.8,358.8" fill="#feeea6"/><polygon class="p" points="564.2,352.9 568.4,354.0 573.1,353.0 568.9,351.9"/><polygon class="p" points="671.2,352.9 676.1,354.1 680.2,353.1 675.2,352.0"/><polygon class="p" points="515.1,352.9 518.9,354.0 523.9,353.1 520.1,352.0"/><polygon class="p" points="622.1,353.0 626.7,354.1 631.1,353.2 626.5,352.0"/><polygon class="p" points="466.0,353.0 469.5,354.1 474.8,353.1 471.3,352.0"/><polygon points="648.8,362.6 653.6,363.2 657.8,362.0 653.0,361.4" fill="#fff5b0"/><polygon points="608.6,366.7 613.2,367.0 617.6,366.1 613.1,366.0" fill="#fafdc8"/><polygon points="568.5,371.1 572.7,370.1 577.3,369.8 573.1,370.8" fill="#ecf8e2"/><polygon points="697.9,360.4 703.1,362.0 707.0,360.6 701.8,358.9" fill="#feeea6"/><polygon class="p" points="573.1,353.0 577.3,354.2 581.9,353.2 577.7,352.1"/><polygon points="483.8,358.9 487.3,357.4 492.5,357.8 489.0,359.4" fill="#fee79b"/><polygon class="p" points="680.2,353.1 685.2,354.2 689.2,353.3 684.2,352.2"/><polygon class="p" points="523.9,353.1 527.8,354.2 532.8,353.3 528.9,352.1"/><polygon class="p" points="631.1,353.2 635.7,354.3 640.0,353.3 635.4,352.2"/><polygon class="p" points="474.8,353.1 478.3,354.3 483.6,353.3 480.0,352.2"/><polygon points="657.8,362.0 662.7,362.9 666.8,361.6 661.9,360.7" fill="#fff2ac"/><polygon class="p" points="581.9,353.2 586.3,354.4 590.9,353.4 586.5,352.3"/><polygon points="617.6,366.1 622.2,366.3 626.5,365.4 622.0,365.2" fill="#fefec1"/><polygon points="452.4,363.4 455.6,361.2 461.0,361.6 457.8,363.9" fill="#fff5b0"/><polygon points="577.3,369.8 581.6,369.0 586.3,368.7 582.0,369.4" fill="#f2fad8"/><polygon class="p" points="689.2,353.3 694.3,354.4 698.2,353.5 693.1,352.3"/><polygon points="492.5,357.8 496.1,356.8 501.3,357.4 497.7,358.5" fill="#fee495"/><polygon class="p" points="532.8,353.3 536.7,354.4 541.6,353.4 537.7,352.3"/><polygon class="p" points="640.0,353.3 644.8,354.5 649.0,353.5 644.3,352.4"/><polygon class="p" points="483.6,353.3 487.2,354.5 492.4,353.5 488.8,352.4"/><polygon class="p" points="590.9,353.4 595.3,354.5 599.8,353.6 595.4,352.4"/><polygon points="666.8,361.6 671.8,362.9 675.9,361.6 670.9,360.3" fill="#fff1aa"/><polygon class="p" points="698.2,353.5 703.4,354.6 707.3,353.6 702.1,352.5"/><polygon class="p" points="541.6,353.4 545.7,354.6 550.5,353.6 546.5,352.5"/><polygon points="626.5,365.4 631.2,365.6 635.5,364.6 630.9,364.3" fill="#fffdbb"/><polygon points="501.3,357.4 505.0,356.8 510.2,357.6 506.5,358.3" fill="#fee394"/><polygon class="p" points="649.0,353.5 653.9,354.7 658.0,353.7 653.2,352.6"/><polygon points="586.3,368.7 590.6,368.3 595.2,367.9 590.8,368.2" fill="#f6fbd0"/><polygon class="p" points="492.4,353.5 496.1,354.6 501.2,353.7 497.5,352.5"/><polygon points="461.0,361.6 464.3,359.5 469.7,359.9 466.4,362.1" fill="#feeea5"/><polygon class="p" points="599.8,353.6 604.3,354.7 608.8,353.8 604.3,352.6"/><polygon points="675.9,361.6 680.9,362.9 684.9,361.6 679.9,360.2" fill="#fff0a8"/><polygon points="510.2,357.6 513.9,357.1 519.1,358.6 515.3,359.2" fill="#fee496"/><polygon class="p" points="550.5,353.6 554.6,354.8 559.4,353.8 555.3,352.7"/><polygon points="536.9,365.1 540.9,365.3 545.9,368.7 541.9,368.8" fill="#fbfdc6"/><polygon points="545.9,368.7 549.9,368.5 554.8,370.9 550.8,371.5" fill="#f1f9d9"/><polygon class="p" points="658.0,353.7 662.9,354.8 667.1,353.9 662.2,352.7"/><polygon points="528.0,361.3 531.9,361.4 536.9,365.1 533.0,365.1" fill="#fff6b1"/><polygon class="p" points="501.2,353.7 505.0,354.8 510.1,353.9 506.3,352.7"/><polygon points="635.5,364.6 640.3,364.9 644.6,363.8 639.8,363.4" fill="#fff9b6"/><polygon points="519.1,358.6 522.9,358.4 528.0,361.3 524.1,361.6" fill="#feeaa0"/><polygon points="595.2,367.9 599.6,368.0 604.2,367.4 599.7,367.3" fill="#f9fdca"/><polygon class="p" points="608.8,353.8 613.3,354.9 617.7,353.9 613.2,352.8"/><polygon class="p" points="451.9,353.7 455.2,354.9 460.7,353.9 457.3,352.8"/><polygon points="684.9,361.6 690.0,363.1 694.0,361.8 688.9,360.2" fill="#fff0a8"/><polygon points="554.8,370.9 558.9,370.1 563.7,371.2 559.6,372.2" fill="#edf8e0"/><polygon points="469.7,359.9 473.1,358.1 478.5,358.5 475.1,360.4" fill="#fee79b"/><polygon class="p" points="559.4,353.8 563.6,355.0 568.4,354.0 564.2,352.9"/><polygon class="p" points="667.1,353.9 672.0,355.0 676.1,354.1 671.2,352.9"/><polygon class="p" points="510.1,353.9 513.9,355.0 518.9,354.0 515.1,352.9"/><polygon points="644.6,363.8 649.4,364.4 653.6,363.2 648.8,362.6" fill="#fff6b1"/><polygon class="p" points="617.7,353.9 622.3,355.1 626.7,354.1 622.1,353.0"/><polygon class="p" points="460.7,353.9 464.1,355.1 469.5,354.1 466.0,353.0"/><polygon points="694.0,361.8 699.1,363.4 703.1,362.0 697.9,360.4" fill="#fff0a8"/><polygon points="604.2,367.4 608.7,367.7 613.2,367.0 608.6,366.7" fill="#fbfec6"/><polygon class="p" points="568.4,354.0 572.6,355.1 577.3,354.2 573.1,353.0"/><polygon points="563.7,371.2 567.9,370.2 572.7,370.1 568.5,371.1" fill="#eff9dc"/><polygon class="p" points="676.1,354.1 681.2,355.2 685.2,354.2 680.2,353.1"/><polygon class="p" points="518.9,354.0 522.8,355.2 527.8,354.2 523.9,353.1"/><polygon points="478.5,358.5 482.0,356.9 487.3,357.4 483.8,358.9" fill="#fee293"/><polygon class="p" points="626.7,354.1 631.4,355.3 635.7,354.3 631.1,353.2"/><polygon class="p" points="469.5,354.1 473.0,355.2 478.3,354.3 474.8,353.1"/><polygon points="703.1,362.0 708.3,363.8 712.2,362.4 707.0,360.6" fill="#fff0a9"/><polygon points="653.6,363.2 658.5,364.1 662.7,362.9 657.8,362.0" fill="#fff3ad"/><polygon class="p" points="577.3,354.2 581.6,355.3 586.3,354.4 581.9,353.2"/><polygon points="613.2,367.0 617.7,367.2 622.2,366.3 617.6,366.1" fill="#feffc1"/><polygon class="p" points="685.2,354.2 690.3,355.4 694.3,354.4 689.2,353.3"/><polygon class="p" points="527.8,354.2 531.8,355.4 536.7,354.4 532.8,353.3"/><polygon points="572.7,370.1 576.9,369.3 581.6,369.0 577.3,369.8" fill="#f4fbd3"/><polygon points="446.8,362.9 450.0,360.8 455.6,361.2 452.4,363.4" fill="#fff0a8"/><polygon class="p" points="635.7,354.3 640.5,355.5 644.8,354.5 640.0,353.3"/><polygon class="p" points="478.3,354.3 481.9,355.4 487.2,354.5 483.6,353.3"/><polygon points="487.3,357.4 490.8,356.4 496.1,356.8 492.5,357.8" fill="#fedd8d"/><polygon points="662.7,362.9 667.6,364.2 671.8,362.9 666.8,361.6" fill="#fff2ab"/><polygon class="p" points="586.3,354.4 590.6,355.5 595.3,354.5 590.9,353.4"/><polygon class="p" points="694.3,354.4 699.5,355.6 703.4,354.6 698.2,353.5"/><polygon class="p" points="536.7,354.4 540.8,355.6 545.7,354.6 541.6,353.4"/><polygon points="622.2,366.3 626.8,366.6 631.2,365.6 626.5,365.4" fill="#fffdbb"/><polygon class="p" points="644.8,354.5 649.6,355.6 653.9,354.7 649.0,353.5"/><polygon class="p" points="487.2,354.5 490.8,355.6 496.1,354.6 492.4,353.5"/><polygon points="581.6,369.0 586.0,368.7 590.6,368.3 586.3,368.7" fill="#f8fccb"/><polygon points="496.1,356.8 499.8,356.2 505.0,356.8 501.3,357.4" fill="#feda8a"/><polygon class="p" points="595.3,354.5 599.7,355.7 604.3,354.7 599.8,353.6"/><polygon points="671.8,362.9 676.8,364.2 680.9,362.9 675.9,361.6" fill="#fff1aa"/><polygon points="455.6,361.2 458.8,359.2 464.3,359.5 461.0,361.6" fill="#fee89d"/><polygon class="p" points="703.4,354.6 708.7,355.8 712.5,354.8 707.3,353.6"/><polygon class="p" points="545.7,354.6 549.8,355.8 554.6,354.8 550.5,353.6"/><polygon class="p" points="653.9,354.7 658.7,355.8 662.9,354.8 658.0,353.7"/><polygon points="631.2,365.6 636.0,366.0 640.3,364.9 635.5,364.6" fill="#fff9b6"/><polygon class="p" points="496.1,354.6 499.8,355.8 505.0,354.8 501.2,353.7"/><polygon class="p" points="604.3,354.7 608.8,355.9 613.3,354.9 608.8,353.8"/><polygon points="505.0,356.8 508.7,356.3 513.9,357.1 510.2,357.6" fill="#feda8a"/><polygon class="p" points="446.4,354.7 449.7,355.9 455.2,354.9 451.9,353.7"/><polygon points="680.9,362.9 686.0,364.4 690.0,363.1 684.9,361.6" fill="#fff1aa"/><polygon points="590.6,368.3 595.0,368.5 599.6,368.0 595.2,367.9" fill="#fbfdc7"/><polygon class="p" points="554.6,354.8 558.8,355.9 563.6,355.0 559.4,353.8"/><polygon class="p" points="662.9,354.8 667.9,356.0 672.0,355.0 667.1,353.9"/><polygon class="p" points="505.0,354.8 508.7,356.0 513.9,355.0 510.1,353.9"/><polygon points="513.9,357.1 517.7,356.9 522.9,358.4 519.1,358.6" fill="#fedd8d"/><polygon points="464.3,359.5 467.7,357.7 473.1,358.1 469.7,359.9" fill="#fee293"/><polygon points="540.9,365.3 545.0,365.5 549.9,368.5 545.9,368.7" fill="#fffebe"/><polygon points="640.3,364.9 645.1,365.6 649.4,364.4 644.6,363.8" fill="#fff6b2"/><polygon class="p" points="613.3,354.9 617.9,356.1 622.3,355.1 617.7,353.9"/><polygon class="p" points="455.2,354.9 458.7,356.0 464.1,355.1 460.7,353.9"/><polygon points="531.9,361.4 535.9,361.9 540.9,365.3 536.9,365.1" fill="#fff2ab"/><polygon points="690.0,363.1 695.1,364.8 699.1,363.4 694.0,361.8" fill="#fff1aa"/><polygon points="522.9,358.4 526.8,358.5 531.9,361.4 528.0,361.3" fill="#fee698"/><polygon points="549.9,368.5 554.0,368.1 558.9,370.1 554.8,370.9" fill="#f7fccd"/><polygon points="599.6,368.0 604.1,368.4 608.7,367.7 604.2,367.4" fill="#fdfec3"/><polygon class="p" points="563.6,355.0 567.8,356.1 572.6,355.1 568.4,354.0"/><polygon class="p" points="672.0,355.0 677.1,356.2 681.2,355.2 676.1,354.1"/><polygon class="p" points="513.9,355.0 517.7,356.2 522.8,355.2 518.9,354.0"/><polygon points="558.9,370.1 563.1,369.4 567.9,370.2 563.7,371.2" fill="#f5fbd1"/><polygon class="p" points="622.3,355.1 627.0,356.3 631.4,355.3 626.7,354.1"/><polygon points="699.1,363.4 704.3,365.2 708.3,363.8 703.1,362.0" fill="#fff2ab"/><polygon class="p" points="464.1,355.1 467.6,356.2 473.0,355.2 469.5,354.1"/><polygon points="649.4,364.4 654.3,365.3 658.5,364.1 653.6,363.2" fill="#fff4ae"/><polygon points="473.1,358.1 476.6,356.6 482.0,356.9 478.5,358.5" fill="#feda8b"/><polygon class="p" points="572.6,355.1 576.9,356.3 581.6,355.3 577.3,354.2"/><polygon points="608.7,367.7 613.2,368.1 617.7,367.2 613.2,367.0" fill="#ffffbf"/><polygon class="p" points="681.2,355.2 686.3,356.4 690.3,355.4 685.2,354.2"/><polygon class="p" points="522.8,355.2 526.7,356.4 531.8,355.4 527.8,354.2"/><polygon points="708.3,363.8 713.6,365.6 717.4,364.3 712.2,362.4" fill="#fff3ac"/><polygon class="p" points="631.4,355.3 636.1,356.4 640.5,355.5 635.7,354.3"/><polygon class="p" points="473.0,355.2 476.5,356.4 481.9,355.4 478.3,354.3"/><polygon points="567.9,370.2 572.2,369.5 576.9,369.3 572.7,370.1" fill="#f7fccd"/><polygon points="658.5,364.1 663.4,365.4 667.6,364.2 662.7,362.9" fill="#fff3ad"/><polygon class="p" points="581.6,355.3 586.0,356.5 590.6,355.5 586.3,354.4"/><polygon points="441.2,362.6 444.4,360.6 450.0,360.8 446.8,362.9" fill="#feeaa0"/><polygon points="482.0,356.9 485.5,356.0 490.8,356.4 487.3,357.4" fill="#fed485"/><polygon class="p" points="690.3,355.4 695.5,356.6 699.5,355.6 694.3,354.4"/><polygon class="p" points="531.8,355.4 535.8,356.6 540.8,355.6 536.7,354.4"/><polygon points="617.7,367.2 622.4,367.6 626.8,366.6 622.2,366.3" fill="#fffcbb"/><polygon class="p" points="640.5,355.5 645.3,356.6 649.6,355.6 644.8,354.5"/><polygon class="p" points="481.9,355.4 485.5,356.6 490.8,355.6 487.2,354.5"/><polygon points="667.6,364.2 672.6,365.5 676.8,364.2 671.8,362.9" fill="#fff2ac"/><polygon class="p" points="590.6,355.5 595.1,356.7 599.7,355.7 595.3,354.5"/><polygon points="576.9,369.3 581.3,369.0 586.0,368.7 581.6,369.0" fill="#fbfdc7"/><polygon class="p" points="699.5,355.6 704.7,356.8 708.7,355.8 703.4,354.6"/><polygon class="p" points="540.8,355.6 544.8,356.7 549.8,355.8 545.7,354.6"/><polygon points="490.8,356.4 494.5,355.8 499.8,356.2 496.1,356.8" fill="#fed182"/><polygon class="p" points="649.6,355.6 654.5,356.8 658.7,355.8 653.9,354.7"/><polygon points="450.0,360.8 453.2,359.0 458.8,359.2 455.6,361.2" fill="#fee495"/><polygon class="p" points="490.8,355.6 494.5,356.8 499.8,355.8 496.1,354.6"/><polygon points="626.8,366.6 631.6,367.0 636.0,366.0 631.2,365.6" fill="#fff9b6"/><polygon points="676.8,364.2 681.9,365.7 686.0,364.4 680.9,362.9" fill="#fff2ab"/><polygon class="p" points="599.7,355.7 604.2,356.9 608.8,355.9 604.3,354.7"/><polygon class="p" points="440.9,355.7 444.2,356.9 449.7,355.9 446.4,354.7"/><polygon class="p" points="708.7,355.8 714.0,357.0 717.9,356.0 712.5,354.8"/><polygon points="586.0,368.7 590.4,369.0 595.0,368.5 590.6,368.3" fill="#fdfec2"/><polygon class="p" points="549.8,355.8 553.9,356.9 558.8,355.9 554.6,354.8"/><polygon points="499.8,356.2 503.5,355.8 508.7,356.3 505.0,356.8" fill="#fed081"/><polygon class="p" points="658.7,355.8 663.7,357.0 667.9,356.0 662.9,354.8"/><polygon class="p" points="499.8,355.8 503.5,357.0 508.7,356.0 505.0,354.8"/><polygon points="636.0,366.0 640.8,366.6 645.1,365.6 640.3,364.9" fill="#fff6b2"/><polygon points="686.0,364.4 691.1,366.1 695.1,364.8 690.0,363.1" fill="#fff2ac"/><polygon class="p" points="608.8,355.9 613.4,357.1 617.9,356.1 613.3,354.9"/><polygon class="p" points="449.7,355.9 453.1,357.0 458.7,356.0 455.2,354.9"/><polygon points="458.8,359.2 462.1,357.5 467.7,357.7 464.3,359.5" fill="#fedb8c"/><polygon class="p" points="558.8,355.9 563.0,357.1 567.8,356.1 563.6,355.0"/><polygon points="595.0,368.5 599.5,369.1 604.1,368.4 599.6,368.0" fill="#feffc0"/><polygon points="508.7,356.3 512.6,356.1 517.7,356.9 513.9,357.1" fill="#fed081"/><polygon class="p" points="667.9,356.0 672.9,357.2 677.1,356.2 672.0,355.0"/><polygon class="p" points="508.7,356.0 512.6,357.2 517.7,356.2 513.9,355.0"/><polygon points="695.1,364.8 700.4,366.5 704.3,365.2 699.1,363.4" fill="#fff3ad"/><polygon class="p" points="617.9,356.1 622.5,357.3 627.0,356.3 622.3,355.1"/><polygon class="p" points="458.7,356.0 462.1,357.2 467.6,356.2 464.1,355.1"/><polygon points="645.1,365.6 650.0,366.5 654.3,365.3 649.4,364.4" fill="#fff5af"/><polygon points="517.7,356.9 521.6,357.0 526.8,358.5 522.9,358.4" fill="#fed686"/><polygon points="535.9,361.9 539.9,362.5 545.0,365.5 540.9,365.3" fill="#feefa6"/><polygon points="545.0,365.5 549.1,365.6 554.0,368.1 549.9,368.5" fill="#fffab7"/><polygon class="p" points="567.8,356.1 572.1,357.3 576.9,356.3 572.6,355.1"/><polygon points="526.8,358.5 530.8,359.1 535.9,361.9 531.9,361.4" fill="#fee293"/><polygon points="604.1,368.4 608.7,368.9 613.2,368.1 608.7,367.7" fill="#fffebe"/><polygon class="p" points="677.1,356.2 682.2,357.4 686.3,356.4 681.2,355.2"/><polygon class="p" points="517.7,356.2 521.6,357.4 526.7,356.4 522.8,355.2"/><polygon points="467.7,357.7 471.1,356.3 476.6,356.6 473.1,358.1" fill="#fed283"/><polygon points="554.0,368.1 558.2,367.8 563.1,369.4 558.9,370.1" fill="#feffc1"/><polygon points="704.3,365.2 709.6,366.9 713.6,365.6 708.3,363.8" fill="#fff4ae"/><polygon class="p" points="627.0,356.3 631.7,357.4 636.1,356.4 631.4,355.3"/><polygon class="p" points="467.6,356.2 471.1,357.4 476.5,356.4 473.0,355.2"/><polygon points="654.3,365.3 659.2,366.6 663.4,365.4 658.5,364.1" fill="#fff3ae"/><polygon class="p" points="576.9,356.3 581.3,357.5 586.0,356.5 581.6,355.3"/><polygon points="563.1,369.4 567.4,368.9 572.2,369.5 567.9,370.2" fill="#fcfec4"/><polygon class="p" points="686.3,356.4 691.5,357.6 695.5,356.6 690.3,355.4"/><polygon points="713.6,365.6 718.9,367.7 722.8,366.5 717.4,364.3" fill="#fff5b0"/><polygon class="p" points="526.7,356.4 530.7,357.6 535.8,356.6 531.8,355.4"/><polygon points="613.2,368.1 617.9,368.5 622.4,367.6 617.7,367.2" fill="#fffcba"/><polygon points="435.6,362.3 438.7,360.5 444.4,360.6 441.2,362.6" fill="#fee699"/><polygon class="p" points="636.1,356.4 641.0,357.6 645.3,356.6 640.5,355.5"/><polygon class="p" points="476.5,356.4 480.2,357.6 485.5,356.6 481.9,355.4"/><polygon points="476.6,356.6 480.1,355.6 485.5,356.0 482.0,356.9" fill="#fecc7d"/><polygon points="663.4,365.4 668.5,366.8 672.6,365.5 667.6,364.2" fill="#fff3ad"/><polygon class="p" points="586.0,356.5 590.4,357.7 595.1,356.7 590.6,355.5"/><polygon class="p" points="695.5,356.6 700.8,357.8 704.7,356.8 699.5,355.6"/><polygon class="p" points="535.8,356.6 539.8,357.7 544.8,356.7 540.8,355.6"/><polygon points="572.2,369.5 576.5,369.2 581.3,369.0 576.9,369.3" fill="#feffc1"/><polygon class="p" points="645.3,356.6 650.2,357.8 654.5,356.8 649.6,355.6"/><polygon class="p" points="485.5,356.6 489.2,357.8 494.5,356.8 490.8,355.6"/><polygon points="622.4,367.6 627.1,368.1 631.6,367.0 626.8,366.6" fill="#fff9b6"/><polygon points="672.6,365.5 677.7,367.0 681.9,365.7 676.8,364.2" fill="#fff3ad"/><polygon points="485.5,356.0 489.1,355.3 494.5,355.8 490.8,356.4" fill="#fec87a"/><polygon class="p" points="595.1,356.7 599.6,357.9 604.2,356.9 599.7,355.7"/><polygon class="p" points="435.2,356.7 438.5,357.9 444.2,356.9 440.9,355.7"/><polygon points="444.4,360.6 447.6,358.8 453.2,359.0 450.0,360.8" fill="#fede8e"/><polygon class="p" points="704.7,356.8 710.1,358.0 714.0,357.0 708.7,355.8"/><polygon class="p" points="544.8,356.7 549.0,357.9 553.9,356.9 549.8,355.8"/><polygon points="581.3,369.0 585.7,369.4 590.4,369.0 586.0,368.7" fill="#fffebe"/><polygon class="p" points="654.5,356.8 659.5,358.0 663.7,357.0 658.7,355.8"/><polygon class="p" points="494.5,356.8 498.3,358.0 503.5,357.0 499.8,355.8"/><polygon points="681.9,365.7 687.0,367.3 691.1,366.1 686.0,364.4" fill="#fff3ad"/><polygon points="631.6,367.0 636.4,367.7 640.8,366.6 636.0,366.0" fill="#fff6b2"/><polygon class="p" points="604.2,356.9 608.8,358.1 613.4,357.1 608.8,355.9"/><polygon class="p" points="444.2,356.9 447.6,358.0 453.1,357.0 449.7,355.9"/><polygon points="494.5,355.8 498.2,355.4 503.5,355.8 499.8,356.2" fill="#fdc778"/><polygon class="p" points="714.0,357.0 719.4,358.1 723.3,357.1 717.9,356.0"/><polygon class="p" points="553.9,356.9 558.1,358.1 563.0,357.1 558.8,355.9"/><polygon points="590.4,369.0 594.9,369.7 599.5,369.1 595.0,368.5" fill="#fffebd"/><polygon class="p" points="663.7,357.0 668.7,358.2 672.9,357.2 667.9,356.0"/><polygon points="453.2,359.0 456.5,357.3 462.1,357.5 458.8,359.2" fill="#fed485"/><polygon class="p" points="503.5,357.0 507.4,358.2 512.6,357.2 508.7,356.0"/><polygon points="691.1,366.1 696.3,367.7 700.4,366.5 695.1,364.8" fill="#fff4ae"/><polygon class="p" points="613.4,357.1 618.0,358.3 622.5,357.3 617.9,356.1"/><polygon class="p" points="453.1,357.0 456.6,358.2 462.1,357.2 458.7,356.0"/><polygon points="503.5,355.8 507.3,355.6 512.6,356.1 508.7,356.3" fill="#fdc778"/><polygon points="640.8,366.6 645.6,367.6 650.0,366.5 645.1,365.6" fill="#fff5af"/><polygon class="p" points="563.0,357.1 567.3,358.3 572.1,357.3 567.8,356.1"/><polygon class="p" points="672.9,357.2 678.0,358.4 682.2,357.4 677.1,356.2"/><polygon class="p" points="512.6,357.2 516.5,358.4 521.6,357.4 517.7,356.2"/><polygon points="599.5,369.1 604.1,369.7 608.7,368.9 604.1,368.4" fill="#fffdbc"/><polygon points="700.4,366.5 705.7,368.1 709.6,366.9 704.3,365.2" fill="#fff5af"/><polygon points="512.6,356.1 516.4,356.2 521.6,357.0 517.7,356.9" fill="#fec97b"/><polygon class="p" points="622.5,357.3 627.3,358.5 631.7,357.4 627.0,356.3"/><polygon class="p" points="462.1,357.2 465.7,358.4 471.1,357.4 467.6,356.2"/><polygon points="650.0,366.5 654.9,367.7 659.2,366.6 654.3,365.3" fill="#fff4ae"/><polygon points="462.1,357.5 465.5,356.1 471.1,356.3 467.7,357.7" fill="#fecb7c"/><polygon class="p" points="572.1,357.3 576.5,358.5 581.3,357.5 576.9,356.3"/><polygon points="521.6,357.0 525.6,357.6 530.8,359.1 526.8,358.5" fill="#fed182"/><polygon points="539.9,362.5 544.0,363.1 549.1,365.6 545.0,365.5" fill="#feeca1"/><polygon points="709.6,366.9 715.0,368.9 718.9,367.7 713.6,365.6" fill="#fff6b1"/><polygon points="530.8,359.1 534.8,359.9 539.9,362.5 535.9,361.9" fill="#fee090"/><polygon class="p" points="682.2,357.4 687.4,358.6 691.5,357.6 686.3,356.4"/><polygon class="p" points="521.6,357.4 525.6,358.6 530.7,357.6 526.7,356.4"/><polygon points="549.1,365.6 553.2,365.8 558.2,367.8 554.0,368.1" fill="#fff5af"/><polygon points="608.7,368.9 613.3,369.5 617.9,368.5 613.2,368.1" fill="#fffbb9"/><polygon class="p" points="631.7,357.4 636.5,358.6 641.0,357.6 636.1,356.4"/><polygon class="p" points="471.1,357.4 474.7,358.6 480.2,357.6 476.5,356.4"/><polygon points="659.2,366.6 664.2,367.9 668.5,366.8 663.4,365.4" fill="#fff4ae"/><polygon points="429.8,362.0 432.9,360.3 438.7,360.5 435.6,362.3" fill="#fee192"/><polygon points="718.9,367.7 724.3,370.6 728.1,369.5 722.8,366.5" fill="#fffab8"/><polygon points="558.2,367.8 562.5,367.7 567.4,368.9 563.1,369.4" fill="#fffab7"/><polygon class="p" points="581.3,357.5 585.7,358.7 590.4,357.7 586.0,356.5"/><polygon points="471.1,356.3 474.6,355.3 480.1,355.6 476.6,356.6" fill="#fdc476"/><polygon class="p" points="691.5,357.6 696.7,358.8 700.8,357.8 695.5,356.6"/><polygon class="p" points="530.7,357.6 534.8,358.8 539.8,357.7 535.8,356.6"/><polygon class="p" points="641.0,357.6 645.8,358.8 650.2,357.8 645.3,356.6"/><polygon class="p" points="480.2,357.6 483.8,358.8 489.2,357.8 485.5,356.6"/><polygon points="617.9,368.5 622.6,369.1 627.1,368.1 622.4,367.6" fill="#fff9b6"/><polygon points="567.4,368.9 571.7,368.8 576.5,369.2 572.2,369.5" fill="#fffbba"/><polygon points="668.5,366.8 673.6,368.2 677.7,367.0 672.6,365.5" fill="#fff4ae"/><polygon class="p" points="590.4,357.7 594.9,358.9 599.6,357.9 595.1,356.7"/><polygon class="p" points="429.6,357.7 432.8,358.9 438.5,357.9 435.2,356.7"/><polygon class="p" points="700.8,357.8 706.1,359.0 710.1,358.0 704.7,356.8"/><polygon class="p" points="539.8,357.7 544.0,359.0 549.0,357.9 544.8,356.7"/><polygon points="480.1,355.6 483.7,354.9 489.1,355.3 485.5,356.0" fill="#fdc072"/><polygon points="438.7,360.5 441.9,358.8 447.6,358.8 444.4,360.6" fill="#fed788"/><polygon class="p" points="650.2,357.8 655.2,359.0 659.5,358.0 654.5,356.8"/><polygon class="p" points="489.2,357.8 493.0,359.0 498.3,358.0 494.5,356.8"/><polygon points="576.5,369.2 580.9,369.7 585.7,369.4 581.3,369.0" fill="#fffcba"/><polygon points="677.7,367.0 682.9,368.5 687.0,367.3 681.9,365.7" fill="#fff4ae"/><polygon points="627.1,368.1 631.9,368.8 636.4,367.7 631.6,367.0" fill="#fff6b2"/><polygon class="p" points="599.6,357.9 604.2,359.1 608.8,358.1 604.2,356.9"/><polygon class="p" points="438.5,357.9 441.9,359.1 447.6,358.0 444.2,356.9"/><polygon class="p" points="710.1,358.0 715.5,359.2 719.4,358.1 714.0,357.0"/><polygon class="p" points="549.0,357.9 553.2,359.1 558.1,358.1 553.9,356.9"/><polygon points="489.1,355.3 492.8,355.0 498.2,355.4 494.5,355.8" fill="#fdbf71"/><polygon class="p" points="659.5,358.0 664.5,359.2 668.7,358.2 663.7,357.0"/><polygon class="p" points="498.3,358.0 502.1,359.2 507.4,358.2 503.5,357.0"/><polygon points="687.0,367.3 692.3,368.9 696.3,367.7 691.1,366.1" fill="#fff5af"/><polygon points="585.7,369.4 590.2,370.2 594.9,369.7 590.4,369.0" fill="#fffcba"/><polygon class="p" points="608.8,358.1 613.5,359.3 618.0,358.3 613.4,357.1"/><polygon class="p" points="447.6,358.0 451.0,359.3 456.6,358.2 453.1,357.0"/><polygon points="447.6,358.8 450.9,357.3 456.5,357.3 453.2,359.0" fill="#fecd7e"/><polygon points="636.4,367.7 641.2,368.7 645.6,367.6 640.8,366.6" fill="#fff5af"/><polygon class="p" points="719.4,358.1 724.9,359.4 728.8,358.3 723.3,357.1"/><polygon class="p" points="558.1,358.1 562.4,359.3 567.3,358.3 563.0,357.1"/><polygon points="498.2,355.4 502.0,355.3 507.3,355.6 503.5,355.8" fill="#fdbe70"/><polygon class="p" points="668.7,358.2 673.9,359.4 678.0,358.4 672.9,357.2"/><polygon class="p" points="507.4,358.2 511.3,359.4 516.5,358.4 512.6,357.2"/><polygon points="696.3,367.7 701.6,369.4 705.7,368.1 700.4,366.5" fill="#fff5b0"/><polygon points="594.9,369.7 599.4,370.5 604.1,369.7 599.5,369.1" fill="#fffcba"/><polygon class="p" points="618.0,358.3 622.8,359.5 627.3,358.5 622.5,357.3"/><polygon class="p" points="456.6,358.2 460.1,359.5 465.7,358.4 462.1,357.2"/><polygon points="645.6,367.6 650.6,368.8 654.9,367.7 650.0,366.5" fill="#fff4ae"/><polygon class="p" points="567.3,358.3 571.6,359.5 576.5,358.5 572.1,357.3"/><polygon points="507.3,355.6 511.2,355.7 516.4,356.2 512.6,356.1" fill="#fdc071"/><polygon points="456.5,357.3 459.9,356.0 465.5,356.1 462.1,357.5" fill="#fdc475"/><polygon points="705.7,368.1 711.0,370.1 715.0,368.9 709.6,366.9" fill="#fff7b2"/><polygon class="p" points="678.0,358.4 683.2,359.6 687.4,358.6 682.2,357.4"/><polygon class="p" points="516.5,358.4 520.4,359.6 525.6,358.6 521.6,357.4"/><polygon points="604.1,369.7 608.7,370.4 613.3,369.5 608.7,368.9" fill="#fffab8"/><polygon class="p" points="627.3,358.5 632.1,359.7 636.5,358.6 631.7,357.4"/><polygon class="p" points="465.7,358.4 469.2,359.6 474.7,358.6 471.1,357.4"/><polygon points="654.9,367.7 659.9,369.1 664.2,367.9 659.2,366.6" fill="#fff4ae"/><polygon points="516.4,356.2 520.4,356.7 525.6,357.6 521.6,357.0" fill="#fdc476"/><polygon points="715.0,368.9 720.4,371.7 724.3,370.6 718.9,367.7" fill="#fffab8"/><polygon class="p" points="576.5,358.5 580.9,359.7 585.7,358.7 581.3,357.5"/><polygon points="724.3,370.6 729.7,374.2 733.6,373.1 728.1,369.5" fill="#fdfec3"/><polygon class="p" points="687.4,358.6 692.6,359.8 696.7,358.8 691.5,357.6"/><polygon points="525.6,357.6 529.6,358.4 534.8,359.9 530.8,359.1" fill="#fece7f"/><polygon points="424.0,361.6 427.1,360.0 432.9,360.3 429.8,362.0" fill="#feda8a"/><polygon class="p" points="525.6,358.6 529.7,359.8 534.8,358.8 530.7,357.6"/><polygon points="534.8,359.9 538.9,360.8 544.0,363.1 539.9,362.5" fill="#fedd8d"/><polygon points="544.0,363.1 548.2,363.7 553.2,365.8 549.1,365.6" fill="#fee89d"/><polygon points="465.5,356.1 469.0,355.1 474.6,355.3 471.1,356.3" fill="#fdbd6f"/><polygon class="p" points="636.5,358.6 641.4,359.9 645.8,358.8 641.0,357.6"/><polygon class="p" points="474.7,358.6 478.4,359.8 483.8,358.8 480.2,357.6"/><polygon points="613.3,369.5 618.1,370.2 622.6,369.1 617.9,368.5" fill="#fff8b5"/><polygon points="664.2,367.9 669.3,369.4 673.6,368.2 668.5,366.8" fill="#fff4ae"/><polygon points="553.2,365.8 557.5,366.1 562.5,367.7 558.2,367.8" fill="#fff0a8"/><polygon class="p" points="585.7,358.7 590.2,359.9 594.9,358.9 590.4,357.7"/><polygon class="p" points="423.8,358.7 427.1,359.9 432.8,358.9 429.6,357.7"/><polygon class="p" points="696.7,358.8 702.1,360.0 706.1,359.0 700.8,357.8"/><polygon class="p" points="534.8,358.8 538.9,360.0 544.0,359.0 539.8,357.7"/><polygon points="562.5,367.7 566.8,367.9 571.7,368.8 567.4,368.9" fill="#fff5af"/><polygon class="p" points="645.8,358.8 650.8,360.1 655.2,359.0 650.2,357.8"/><polygon class="p" points="483.8,358.8 487.6,360.0 493.0,359.0 489.2,357.8"/><polygon points="673.6,368.2 678.7,369.7 682.9,368.5 677.7,367.0" fill="#fff4af"/><polygon points="432.9,360.3 436.1,358.7 441.9,358.8 438.7,360.5" fill="#fed182"/><polygon points="474.6,355.3 478.2,354.6 483.7,354.9 480.1,355.6" fill="#fdb86b"/><polygon points="622.6,369.1 627.4,369.9 631.9,368.8 627.1,368.1" fill="#fff6b2"/><polygon class="p" points="594.9,358.9 599.5,360.1 604.2,359.1 599.6,357.9"/><polygon class="p" points="432.8,358.9 436.2,360.1 441.9,359.1 438.5,357.9"/><polygon points="571.7,368.8 576.1,369.4 580.9,369.7 576.5,369.2" fill="#fff7b3"/><polygon class="p" points="706.1,359.0 711.5,360.2 715.5,359.2 710.1,358.0"/><polygon class="p" points="544.0,359.0 548.1,360.2 553.2,359.1 549.0,357.9"/><polygon class="p" points="655.2,359.0 660.2,360.3 664.5,359.2 659.5,358.0"/><polygon class="p" points="493.0,359.0 496.8,360.2 502.1,359.2 498.3,358.0"/><polygon points="682.9,368.5 688.1,370.1 692.3,368.9 687.0,367.3" fill="#fff5b0"/><polygon points="483.7,354.9 487.3,354.5 492.8,355.0 489.1,355.3" fill="#fdb669"/><polygon class="p" points="604.2,359.1 608.8,360.3 613.5,359.3 608.8,358.1"/><polygon points="580.9,369.7 585.4,370.6 590.2,370.2 585.7,369.4" fill="#fff9b6"/><polygon class="p" points="441.9,359.1 445.3,360.3 451.0,359.3 447.6,358.0"/><polygon points="631.9,368.8 636.8,369.8 641.2,368.7 636.4,367.7" fill="#fff5b0"/><polygon class="p" points="715.5,359.2 721.0,360.4 724.9,359.4 719.4,358.1"/><polygon class="p" points="553.2,359.1 557.4,360.4 562.4,359.3 558.1,358.1"/><polygon points="441.9,358.8 445.2,357.3 450.9,357.3 447.6,358.8" fill="#fdc778"/><polygon points="692.3,368.9 697.6,370.5 701.6,369.4 696.3,367.7" fill="#fff6b1"/><polygon class="p" points="664.5,359.2 669.6,360.5 673.9,359.4 668.7,358.2"/><polygon class="p" points="502.1,359.2 506.0,360.4 511.3,359.4 507.4,358.2"/><polygon points="590.2,370.2 594.7,371.2 599.4,370.5 594.9,369.7" fill="#fffab7"/><polygon points="492.8,355.0 496.6,354.8 502.0,355.3 498.2,355.4" fill="#fdb669"/><polygon class="p" points="613.5,359.3 618.2,360.5 622.8,359.5 618.0,358.3"/><polygon class="p" points="451.0,359.3 454.5,360.5 460.1,359.5 456.6,358.2"/><polygon points="641.2,368.7 646.2,369.9 650.6,368.8 645.6,367.6" fill="#fff4ae"/><polygon class="p" points="724.9,359.4 730.5,360.6 734.3,359.6 728.8,358.3"/><polygon class="p" points="562.4,359.3 566.7,360.6 571.6,359.5 567.3,358.3"/><polygon points="701.6,369.4 707.0,371.2 711.0,370.1 705.7,368.1" fill="#fff7b3"/><polygon class="p" points="673.9,359.4 679.0,360.7 683.2,359.6 678.0,358.4"/><polygon class="p" points="511.3,359.4 515.2,360.6 520.4,359.6 516.5,358.4"/><polygon points="450.9,357.3 454.2,355.9 459.9,356.0 456.5,357.3" fill="#fdbd6f"/><polygon points="502.0,355.3 505.8,355.3 511.2,355.7 507.3,355.6" fill="#fdb769"/><polygon class="p" points="622.8,359.5 627.6,360.7 632.1,359.7 627.3,358.5"/><polygon points="599.4,370.5 604.1,371.3 608.7,370.4 604.1,369.7" fill="#fff9b7"/><polygon class="p" points="460.1,359.5 463.7,360.7 469.2,359.6 465.7,358.4"/><polygon points="650.6,368.8 655.6,370.2 659.9,369.1 654.9,367.7" fill="#fff4ae"/><polygon points="711.0,370.1 716.4,372.8 720.4,371.7 715.0,368.9" fill="#fffab8"/><polygon class="p" points="571.6,359.5 576.0,360.8 580.9,359.7 576.5,358.5"/><polygon points="720.4,371.7 725.8,375.3 729.7,374.2 724.3,370.6" fill="#fdfec3"/><polygon class="p" points="683.2,359.6 688.5,360.9 692.6,359.8 687.4,358.6"/><polygon class="p" points="520.4,359.6 524.5,360.8 529.7,359.8 525.6,358.6"/><polygon points="511.2,355.7 515.1,356.0 520.4,356.7 516.4,356.2" fill="#fdba6c"/><polygon points="729.7,374.2 735.2,378.3 739.0,377.2 733.6,373.1" fill="#f3fbd4"/><polygon class="p" points="632.1,359.7 637.0,360.9 641.4,359.9 636.5,358.6"/><polygon class="p" points="469.2,359.6 472.9,360.9 478.4,359.8 474.7,358.6"/><polygon points="418.1,361.4 421.1,359.9 427.1,360.0 424.0,361.6" fill="#fed383"/><polygon points="659.9,369.1 665.0,370.5 669.3,369.4 664.2,367.9" fill="#fff4af"/><polygon points="608.7,370.4 613.4,371.2 618.1,370.2 613.3,369.5" fill="#fff8b5"/><polygon points="459.9,356.0 463.4,354.9 469.0,355.1 465.5,356.1" fill="#fdb668"/><polygon class="p" points="580.9,359.7 585.4,361.0 590.2,359.9 585.7,358.7"/><polygon class="p" points="418.0,359.7 421.2,360.9 427.1,359.9 423.8,358.7"/><polygon points="520.4,356.7 524.4,357.3 529.6,358.4 525.6,357.6" fill="#fdc072"/><polygon class="p" points="692.6,359.8 698.0,361.1 702.1,360.0 696.7,358.8"/><polygon class="p" points="529.7,359.8 533.8,361.0 538.9,360.0 534.8,358.8"/><polygon points="529.6,358.4 533.7,359.3 538.9,360.8 534.8,359.9" fill="#fecc7d"/><polygon points="538.9,360.8 543.1,361.8 548.2,363.7 544.0,363.1" fill="#feda8b"/><polygon class="p" points="641.4,359.9 646.4,361.1 650.8,360.1 645.8,358.8"/><polygon class="p" points="478.4,359.8 482.1,361.1 487.6,360.0 483.8,358.8"/><polygon points="669.3,369.4 674.5,370.9 678.7,369.7 673.6,368.2" fill="#fff5af"/><polygon points="548.2,363.7 552.4,364.4 557.5,366.1 553.2,365.8" fill="#fee598"/><polygon points="618.1,370.2 622.8,371.0 627.4,369.9 622.6,369.1" fill="#fff6b2"/><polygon class="p" points="590.2,359.9 594.7,361.2 599.5,360.1 594.9,358.9"/><polygon class="p" points="427.1,359.9 430.4,361.1 436.2,360.1 432.8,358.9"/><polygon points="557.5,366.1 561.8,366.6 566.8,367.9 562.5,367.7" fill="#feeca2"/><polygon points="427.1,360.0 430.2,358.5 436.1,358.7 432.9,360.3" fill="#feca7b"/><polygon points="469.0,355.1 472.6,354.4 478.2,354.6 474.6,355.3" fill="#fdb164"/><polygon class="p" points="702.1,360.0 707.5,361.3 711.5,360.2 706.1,359.0"/><polygon class="p" points="538.9,360.0 543.1,361.2 548.1,360.2 544.0,359.0"/><polygon class="p" points="650.8,360.1 655.8,361.3 660.2,360.3 655.2,359.0"/><polygon class="p" points="487.6,360.0 491.3,361.3 496.8,360.2 493.0,359.0"/><polygon points="678.7,369.7 684.0,371.3 688.1,370.1 682.9,368.5" fill="#fff5b0"/><polygon points="566.8,367.9 571.2,368.6 576.1,369.4 571.7,368.8" fill="#fff1aa"/><polygon class="p" points="599.5,360.1 604.1,361.4 608.8,360.3 604.2,359.1"/><polygon class="p" points="436.2,360.1 439.6,361.3 445.3,360.3 441.9,359.1"/><polygon points="627.4,369.9 632.3,370.9 636.8,369.8 631.9,368.8" fill="#fff5b0"/><polygon class="p" points="711.5,360.2 717.0,361.4 721.0,360.4 715.5,359.2"/><polygon class="p" points="548.1,360.2 552.4,361.4 557.4,360.4 553.2,359.1"/><polygon points="576.1,369.4 580.5,370.4 585.4,370.6 580.9,369.7" fill="#fff5b0"/><polygon points="478.2,354.6 481.8,354.2 487.3,354.5 483.7,354.9" fill="#fdae61"/><polygon points="688.1,370.1 693.5,371.7 697.6,370.5 692.3,368.9" fill="#fff6b1"/><polygon class="p" points="660.2,360.3 665.3,361.5 669.6,360.5 664.5,359.2"/><polygon class="p" points="496.8,360.2 500.6,361.5 506.0,360.4 502.1,359.2"/><polygon points="436.1,358.7 439.3,357.2 445.2,357.3 441.9,358.8" fill="#fdc072"/><polygon class="p" points="608.8,360.3 613.5,361.6 618.2,360.5 613.5,359.3"/><polygon class="p" points="445.3,360.3 448.8,361.5 454.5,360.5 451.0,359.3"/><polygon points="585.4,370.6 589.9,371.8 594.7,371.2 590.2,370.2" fill="#fff8b4"/><polygon points="636.8,369.8 641.7,371.0 646.2,369.9 641.2,368.7" fill="#fff4ae"/><polygon class="p" points="721.0,360.4 726.6,361.6 730.5,360.6 724.9,359.4"/><polygon class="p" points="557.4,360.4 561.7,361.6 566.7,360.6 562.4,359.3"/><polygon points="487.3,354.5 491.1,354.3 496.6,354.8 492.8,355.0" fill="#fdad61"/><polygon points="697.6,370.5 703.0,372.4 707.0,371.2 701.6,369.4" fill="#fff7b3"/><polygon class="p" points="669.6,360.5 674.8,361.7 679.0,360.7 673.9,359.4"/><polygon class="p" points="506.0,360.4 509.9,361.7 515.2,360.6 511.3,359.4"/><polygon class="p" points="618.2,360.5 623.0,361.8 627.6,360.7 622.8,359.5"/><polygon class="p" points="454.5,360.5 458.0,361.7 463.7,360.7 460.1,359.5"/><polygon points="594.7,371.2 599.3,372.2 604.1,371.3 599.4,370.5" fill="#fff8b5"/><polygon points="646.2,369.9 651.2,371.2 655.6,370.2 650.6,368.8" fill="#fff4ae"/><polygon points="707.0,371.2 712.4,373.9 716.4,372.8 711.0,370.1" fill="#fffbb8"/><polygon points="445.2,357.3 448.5,356.0 454.2,355.9 450.9,357.3" fill="#fdb76a"/><polygon class="p" points="730.5,360.6 736.2,361.8 740.0,360.8 734.3,359.6"/><polygon class="p" points="566.7,360.6 571.1,361.8 576.0,360.8 571.6,359.5"/><polygon points="496.6,354.8 500.4,354.8 505.8,355.3 502.0,355.3" fill="#fdaf62"/><polygon points="716.4,372.8 721.9,376.4 725.8,375.3 720.4,371.7" fill="#fdfec3"/><polygon class="p" points="679.0,360.7 684.3,361.9 688.5,360.9 683.2,359.6"/><polygon class="p" points="515.2,360.6 519.2,361.9 524.5,360.8 520.4,359.6"/><polygon points="725.8,375.3 731.3,379.4 735.2,378.3 729.7,374.2" fill="#f4fbd4"/><polygon points="735.2,378.3 740.7,382.7 744.5,381.5 739.0,377.2" fill="#e9f7e7"/><polygon class="p" points="627.6,360.7 632.4,362.0 637.0,360.9 632.1,359.7"/><polygon class="p" points="463.7,360.7 467.3,361.9 472.9,360.9 469.2,359.6"/><polygon points="655.6,370.2 660.7,371.6 665.0,370.5 659.9,369.1" fill="#fff4af"/><polygon points="604.1,371.3 608.8,372.3 613.4,371.2 608.7,370.4" fill="#fff8b4"/><polygon points="505.8,355.3 509.7,355.5 515.1,356.0 511.2,355.7" fill="#fdb164"/><polygon class="p" points="576.0,360.8 580.5,362.0 585.4,361.0 580.9,359.7"/><polygon class="p" points="412.1,360.7 415.3,362.0 421.2,360.9 418.0,359.7"/><polygon points="412.1,361.5 415.1,360.0 421.1,359.9 418.1,361.4" fill="#fecd7e"/><polygon class="p" points="688.5,360.9 693.9,362.1 698.0,361.1 692.6,359.8"/><polygon class="p" points="524.5,360.8 528.6,362.1 533.8,361.0 529.7,359.8"/><polygon points="454.2,355.9 457.7,354.9 463.4,354.9 459.9,356.0" fill="#fdaf62"/><polygon class="p" points="637.0,360.9 641.9,362.2 646.4,361.1 641.4,359.9"/><polygon points="515.1,356.0 519.1,356.5 524.4,357.3 520.4,356.7" fill="#fdb668"/><polygon class="p" points="472.9,360.9 476.5,362.1 482.1,361.1 478.4,359.8"/><polygon points="665.0,370.5 670.2,372.0 674.5,370.9 669.3,369.4" fill="#fff5b0"/><polygon points="613.4,371.2 618.2,372.1 622.8,371.0 618.1,370.2" fill="#fff6b2"/><polygon class="p" points="585.4,361.0 589.9,362.2 594.7,361.2 590.2,359.9"/><polygon class="p" points="421.2,360.9 424.5,362.2 430.4,361.1 427.1,359.9"/><polygon points="524.4,357.3 528.5,358.1 533.7,359.3 529.6,358.4" fill="#fdbe70"/><polygon class="p" points="698.0,361.1 703.4,362.3 707.5,361.3 702.1,360.0"/><polygon class="p" points="533.8,361.0 537.9,362.3 543.1,361.2 538.9,360.0"/><polygon points="533.7,359.3 537.9,360.3 543.1,361.8 538.9,360.8" fill="#feca7b"/><polygon points="421.1,359.9 424.3,358.5 430.2,358.5 427.1,360.0" fill="#fdc375"/><polygon class="p" points="646.4,361.1 651.4,362.4 655.8,361.3 650.8,360.1"/><polygon points="463.4,354.9 466.9,354.2 472.6,354.4 469.0,355.1" fill="#fca85e"/><polygon points="674.5,370.9 679.7,372.4 684.0,371.3 678.7,369.7" fill="#fff5b1"/><polygon class="p" points="482.1,361.1 485.9,362.3 491.3,361.3 487.6,360.0"/><polygon points="543.1,361.8 547.3,362.8 552.4,364.4 548.2,363.7" fill="#fed888"/><polygon class="p" points="594.7,361.2 599.4,362.4 604.1,361.4 599.5,360.1"/><polygon class="p" points="430.4,361.1 433.7,362.4 439.6,361.3 436.2,360.1"/><polygon points="552.4,364.4 556.7,365.2 561.8,366.6 557.5,366.1" fill="#fee394"/><polygon points="622.8,371.0 627.7,372.1 632.3,370.9 627.4,369.9" fill="#fff5b0"/><polygon class="p" points="707.5,361.3 713.0,362.5 717.0,361.4 711.5,360.2"/><polygon class="p" points="543.1,361.2 547.3,362.5 552.4,361.4 548.1,360.2"/><polygon points="561.8,366.6 566.2,367.4 571.2,368.6 566.8,367.9" fill="#feea9e"/><polygon points="684.0,371.3 689.3,372.9 693.5,371.7 688.1,370.1" fill="#fff6b2"/><polygon class="p" points="655.8,361.3 661.0,362.6 665.3,361.5 660.2,360.3"/><polygon class="p" points="491.3,361.3 495.2,362.5 500.6,361.5 496.8,360.2"/><polygon points="472.6,354.4 476.2,353.8 481.8,354.2 478.2,354.6" fill="#fca45c"/><polygon points="571.2,368.6 575.6,369.6 580.5,370.4 576.1,369.4" fill="#feefa7"/><polygon class="p" points="604.1,361.4 608.9,362.6 613.5,361.6 608.8,360.3"/><polygon class="p" points="439.6,361.3 443.0,362.6 448.8,361.5 445.3,360.3"/><polygon points="430.2,358.5 433.4,357.1 439.3,357.2 436.1,358.7" fill="#fdba6c"/><polygon points="632.3,370.9 637.2,372.1 641.7,371.0 636.8,369.8" fill="#fff4ae"/><polygon class="p" points="717.0,361.4 722.6,362.7 726.6,361.6 721.0,360.4"/><polygon class="p" points="552.4,361.4 556.7,362.7 561.7,361.6 557.4,360.4"/><polygon points="580.5,370.4 585.1,371.6 589.9,371.8 585.4,370.6" fill="#fff4af"/><polygon points="693.5,371.7 698.8,373.5 703.0,372.4 697.6,370.5" fill="#fff7b4"/><polygon class="p" points="665.3,361.5 670.5,362.8 674.8,361.7 669.6,360.5"/><polygon class="p" points="500.6,361.5 504.5,362.8 509.9,361.7 506.0,360.4"/><polygon points="481.8,354.2 485.5,353.9 491.1,354.3 487.3,354.5" fill="#fba35c"/><polygon class="p" points="613.5,361.6 618.3,362.8 623.0,361.8 618.2,360.5"/><polygon class="p" points="448.8,361.5 452.3,362.8 458.0,361.7 454.5,360.5"/><polygon points="641.7,371.0 646.7,372.3 651.2,371.2 646.2,369.9" fill="#fff4ae"/><polygon points="703.0,372.4 708.4,375.0 712.4,373.9 707.0,371.2" fill="#fffbb8"/><polygon points="589.9,371.8 594.5,373.0 599.3,372.2 594.7,371.2" fill="#fff7b3"/><polygon class="p" points="726.6,361.6 732.2,362.9 736.2,361.8 730.5,360.6"/><polygon class="p" points="561.7,361.6 566.1,362.9 571.1,361.8 566.7,360.6"/><polygon points="439.3,357.2 442.6,355.9 448.5,356.0 445.2,357.3" fill="#fdb164"/><polygon points="712.4,373.9 717.9,377.5 721.9,376.4 716.4,372.8" fill="#fdfec3"/><polygon class="p" points="674.8,361.7 680.1,363.0 684.3,361.9 679.0,360.7"/><polygon class="p" points="509.9,361.7 513.9,363.0 519.2,361.9 515.2,360.6"/><polygon points="721.9,376.4 727.4,380.5 731.3,379.4 725.8,375.3" fill="#f4fbd3"/><polygon points="731.3,379.4 736.8,383.8 740.7,382.7 735.2,378.3" fill="#e9f7e7"/><polygon points="740.7,382.7 746.3,387.1 750.1,386.0 744.5,381.5" fill="#ddf2f7"/><polygon points="491.1,354.3 494.9,354.3 500.4,354.8 496.6,354.8" fill="#fca45c"/><polygon class="p" points="623.0,361.8 627.9,363.0 632.4,362.0 627.6,360.7"/><polygon class="p" points="458.0,361.7 461.6,363.0 467.3,361.9 463.7,360.7"/><polygon points="651.2,371.2 656.3,372.7 660.7,371.6 655.6,370.2" fill="#fff4af"/><polygon points="599.3,372.2 604.0,373.3 608.8,372.3 604.1,371.3" fill="#fff7b3"/><polygon class="p" points="736.2,361.8 741.9,363.1 745.8,362.1 740.0,360.8"/><polygon class="p" points="571.1,361.8 575.6,363.1 580.5,362.0 576.0,360.8"/><polygon class="p" points="406.1,361.8 409.3,363.1 415.3,362.0 412.1,360.7"/><polygon class="p" points="684.3,361.9 689.7,363.2 693.9,362.1 688.5,360.9"/><polygon class="p" points="519.2,361.9 523.3,363.2 528.6,362.1 524.5,360.8"/><polygon points="406.1,361.8 409.1,360.4 415.1,360.0 412.1,361.5" fill="#fec879"/><polygon points="500.4,354.8 504.3,354.9 509.7,355.5 505.8,355.3" fill="#fca65d"/><polygon class="p" points="632.4,362.0 637.4,363.2 641.9,362.2 637.0,360.9"/><polygon points="448.5,356.0 451.9,354.9 457.7,354.9 454.2,355.9" fill="#fca85e"/><polygon class="p" points="467.3,361.9 470.9,363.2 476.5,362.1 472.9,360.9"/><polygon points="660.7,371.6 665.9,373.1 670.2,372.0 665.0,370.5" fill="#fff5b0"/><polygon points="608.8,372.3 613.5,373.3 618.2,372.1 613.4,371.2" fill="#fff6b2"/><polygon class="p" points="580.5,362.0 585.1,363.3 589.9,362.2 585.4,361.0"/><polygon class="p" points="415.3,362.0 418.5,363.3 424.5,362.2 421.2,360.9"/><polygon points="509.7,355.5 513.7,355.8 519.1,356.5 515.1,356.0" fill="#fdab60"/><polygon class="p" points="693.9,362.1 699.3,363.4 703.4,362.3 698.0,361.1"/><polygon class="p" points="528.6,362.1 532.7,363.4 537.9,362.3 533.8,361.0"/><polygon class="p" points="641.9,362.2 647.0,363.4 651.4,362.4 646.4,361.1"/><polygon points="670.2,372.0 675.4,373.6 679.7,372.4 674.5,370.9" fill="#fff6b1"/><polygon class="p" points="476.5,362.1 480.3,363.4 485.9,362.3 482.1,361.1"/><polygon points="519.1,356.5 523.1,357.1 528.5,358.1 524.4,357.3" fill="#fdb265"/><polygon points="415.1,360.0 418.2,358.7 424.3,358.5 421.1,359.9" fill="#fdbd6f"/><polygon class="p" points="589.9,362.2 594.6,363.5 599.4,362.4 594.7,361.2"/><polygon class="p" points="424.5,362.2 427.8,363.5 433.7,362.4 430.4,361.1"/><polygon points="457.7,354.9 461.2,354.1 466.9,354.2 463.4,354.9" fill="#fba05b"/><polygon points="618.2,372.1 623.1,373.2 627.7,372.1 622.8,371.0" fill="#fff5b0"/><polygon points="528.5,358.1 532.6,359.0 537.9,360.3 533.7,359.3" fill="#fdbc6e"/><polygon class="p" points="703.4,362.3 708.9,363.6 713.0,362.5 707.5,361.3"/><polygon class="p" points="537.9,362.3 542.1,363.6 547.3,362.5 543.1,361.2"/><polygon points="679.7,372.4 685.1,374.0 689.3,372.9 684.0,371.3" fill="#fff6b2"/><polygon points="537.9,360.3 542.1,361.4 547.3,362.8 543.1,361.8" fill="#fec97a"/><polygon class="p" points="651.4,362.4 656.5,363.6 661.0,362.6 655.8,361.3"/><polygon class="p" points="485.9,362.3 489.7,363.6 495.2,362.5 491.3,361.3"/><polygon points="547.3,362.8 551.6,363.7 556.7,365.2 552.4,364.4" fill="#fed686"/><polygon class="p" points="599.4,362.4 604.1,363.7 608.9,362.6 604.1,361.4"/><polygon class="p" points="433.7,362.4 437.2,363.7 443.0,362.6 439.6,361.3"/><polygon points="627.7,372.1 632.6,373.2 637.2,372.1 632.3,370.9" fill="#fff4ae"/><polygon points="556.7,365.2 561.1,366.1 566.2,367.4 561.8,366.6" fill="#fee191"/><polygon points="466.9,354.2 470.5,353.6 476.2,353.8 472.6,354.4" fill="#fa9b58"/><polygon class="p" points="713.0,362.5 718.6,363.8 722.6,362.7 717.0,361.4"/><polygon class="p" points="547.3,362.5 551.6,363.8 556.7,362.7 552.4,361.4"/><polygon points="424.3,358.5 427.5,357.2 433.4,357.1 430.2,358.5" fill="#fdb466"/><polygon points="689.3,372.9 694.7,374.7 698.8,373.5 693.5,371.7" fill="#fff8b4"/><polygon points="566.2,367.4 570.6,368.4 575.6,369.6 571.2,368.6" fill="#fee89c"/><polygon class="p" points="661.0,362.6 666.1,363.9 670.5,362.8 665.3,361.5"/><polygon class="p" points="495.2,362.5 499.1,363.8 504.5,362.8 500.6,361.5"/><polygon points="575.6,369.6 580.2,370.8 585.1,371.6 580.5,370.4" fill="#feefa6"/><polygon class="p" points="608.9,362.6 613.6,363.9 618.3,362.8 613.5,361.6"/><polygon class="p" points="443.0,362.6 446.5,363.9 452.3,362.8 448.8,361.5"/><polygon points="637.2,372.1 642.2,373.3 646.7,372.3 641.7,371.0" fill="#fff4ae"/><polygon points="698.8,373.5 704.3,376.1 708.4,375.0 703.0,372.4" fill="#fffbb8"/><polygon class="p" points="722.6,362.7 728.3,364.0 732.2,362.9 726.6,361.6"/><polygon class="p" points="556.7,362.7 561.1,364.0 566.1,362.9 561.7,361.6"/><polygon points="476.2,353.8 479.9,353.5 485.5,353.9 481.8,354.2" fill="#fa9857"/><polygon points="585.1,371.6 589.7,372.8 594.5,373.0 589.9,371.8" fill="#fff4ae"/><polygon class="p" points="670.5,362.8 675.8,364.1 680.1,363.0 674.8,361.7"/><polygon points="708.4,375.0 713.9,378.5 717.9,377.5 712.4,373.9" fill="#fdfec2"/><polygon class="p" points="504.5,362.8 508.5,364.0 513.9,363.0 509.9,361.7"/><polygon points="717.9,377.5 723.4,381.5 727.4,380.5 721.9,376.4" fill="#f4fbd3"/><polygon points="746.3,387.1 752.0,391.6 755.8,390.5 750.1,386.0" fill="#cbe9f2"/><polygon points="736.8,383.8 742.5,388.2 746.3,387.1 740.7,382.7" fill="#def2f7"/><polygon points="727.4,380.5 732.9,384.8 736.8,383.8 731.3,379.4" fill="#eaf7e6"/><polygon points="433.4,357.1 436.7,355.9 442.6,355.9 439.3,357.2" fill="#fdaa5f"/><polygon class="p" points="618.3,362.8 623.2,364.1 627.9,363.0 623.0,361.8"/><polygon class="p" points="452.3,362.8 455.9,364.1 461.6,363.0 458.0,361.7"/><polygon points="646.7,372.3 651.8,373.7 656.3,372.7 651.2,371.2" fill="#fff4ae"/><polygon points="594.5,373.0 599.2,374.2 604.0,373.3 599.3,372.2" fill="#fff6b2"/><polygon class="p" points="732.2,362.9 738.0,364.2 741.9,363.1 736.2,361.8"/><polygon class="p" points="566.1,362.9 570.6,364.2 575.6,363.1 571.1,361.8"/><polygon points="485.5,353.9 489.3,353.8 494.9,354.3 491.1,354.3" fill="#fa9857"/><polygon class="p" points="680.1,363.0 685.4,364.3 689.7,363.2 684.3,361.9"/><polygon class="p" points="513.9,363.0 518.0,364.2 523.3,363.2 519.2,361.9"/><polygon class="p" points="627.9,363.0 632.8,364.3 637.4,363.2 632.4,362.0"/><polygon class="p" points="461.6,363.0 465.3,364.3 470.9,363.2 467.3,361.9"/><polygon points="656.3,372.7 661.5,374.1 665.9,373.1 660.7,371.6" fill="#fff5af"/><polygon points="494.9,354.3 498.8,354.3 504.3,354.9 500.4,354.8" fill="#fa9b58"/><polygon class="p" points="741.9,363.1 747.8,364.4 751.6,363.3 745.8,362.1"/><polygon points="604.0,373.3 608.8,374.4 613.5,373.3 608.8,372.3" fill="#fff6b1"/><polygon class="p" points="575.6,363.1 580.1,364.4 585.1,363.3 580.5,362.0"/><polygon points="442.6,355.9 446.0,354.9 451.9,354.9 448.5,356.0" fill="#fba15b"/><polygon class="p" points="409.3,363.1 412.5,364.4 418.5,363.3 415.3,362.0"/><polygon class="p" points="689.7,363.2 695.1,364.5 699.3,363.4 693.9,362.1"/><polygon class="p" points="523.3,363.2 527.4,364.4 532.7,363.4 528.6,362.1"/><polygon class="p" points="637.4,363.2 642.4,364.5 647.0,363.4 641.9,362.2"/><polygon points="665.9,373.1 671.1,374.7 675.4,373.6 670.2,372.0" fill="#fff6b1"/><polygon class="p" points="470.9,363.2 474.7,364.5 480.3,363.4 476.5,362.1"/><polygon points="504.3,354.9 508.2,355.1 513.7,355.8 509.7,355.5" fill="#fb9f5a"/><polygon class="p" points="585.1,363.3 589.7,364.6 594.6,363.5 589.9,362.2"/><polygon class="p" points="418.5,363.3 421.9,364.6 427.8,363.5 424.5,362.2"/><polygon points="613.5,373.3 618.4,374.4 623.1,373.2 618.2,372.1" fill="#fff5b0"/><polygon points="409.1,360.4 412.1,359.0 418.2,358.7 415.1,360.0" fill="#fdb86b"/><polygon class="p" points="699.3,363.4 704.8,364.7 708.9,363.6 703.4,362.3"/><polygon class="p" points="532.7,363.4 536.9,364.7 542.1,363.6 537.9,362.3"/><polygon points="451.9,354.9 455.4,354.0 461.2,354.1 457.7,354.9" fill="#fa9857"/><polygon points="513.7,355.8 517.7,356.2 523.1,357.1 519.1,356.5" fill="#fca55d"/><polygon points="675.4,373.6 680.8,375.2 685.1,374.0 679.7,372.4" fill="#fff6b2"/><polygon class="p" points="647.0,363.4 652.1,364.7 656.5,363.6 651.4,362.4"/><polygon class="p" points="480.3,363.4 484.1,364.7 489.7,363.6 485.9,362.3"/><polygon class="p" points="594.6,363.5 599.3,364.8 604.1,363.7 599.4,362.4"/><polygon points="523.1,357.1 527.3,357.8 532.6,359.0 528.5,358.1" fill="#fdaf62"/><polygon class="p" points="427.8,363.5 431.2,364.8 437.2,363.7 433.7,362.4"/><polygon points="623.1,373.2 628.0,374.3 632.6,373.2 627.7,372.1" fill="#fff4ae"/><polygon class="p" points="708.9,363.6 714.5,364.9 718.6,363.8 713.0,362.5"/><polygon class="p" points="542.1,363.6 546.4,364.9 551.6,363.8 547.3,362.5"/><polygon points="532.6,359.0 536.8,360.0 542.1,361.4 537.9,360.3" fill="#fdbb6d"/><polygon points="685.1,374.0 690.4,375.9 694.7,374.7 689.3,372.9" fill="#fff8b4"/><polygon points="461.2,354.1 464.7,353.4 470.5,353.6 466.9,354.2" fill="#f99254"/><polygon class="p" points="656.5,363.6 661.7,365.0 666.1,363.9 661.0,362.6"/><polygon points="542.1,361.4 546.4,362.4 551.6,363.7 547.3,362.8" fill="#fec779"/><polygon class="p" points="489.7,363.6 493.6,364.9 499.1,363.8 495.2,362.5"/><polygon points="418.2,358.7 421.4,357.3 427.5,357.2 424.3,358.5" fill="#fdae61"/><polygon class="p" points="604.1,363.7 608.9,365.0 613.6,363.9 608.9,362.6"/><polygon points="551.6,363.7 556.0,364.7 561.1,366.1 556.7,365.2" fill="#fed384"/><polygon class="p" points="437.2,363.7 440.6,365.0 446.5,363.9 443.0,362.6"/><polygon points="632.6,373.2 637.7,374.4 642.2,373.3 637.2,372.1" fill="#fff3ae"/><polygon points="694.7,374.7 700.1,377.3 704.3,376.1 698.8,373.5" fill="#fffbb8"/><polygon class="p" points="718.6,363.8 724.3,365.1 728.3,364.0 722.6,362.7"/><polygon points="561.1,366.1 565.6,367.1 570.6,368.4 566.2,367.4" fill="#fedf8f"/><polygon class="p" points="551.6,363.8 556.0,365.1 561.1,364.0 556.7,362.7"/><polygon class="p" points="666.1,363.9 671.4,365.2 675.8,364.1 670.5,362.8"/><polygon points="570.6,368.4 575.2,369.5 580.2,370.8 575.6,369.6" fill="#fee79b"/><polygon points="704.3,376.1 709.8,379.6 713.9,378.5 708.4,375.0" fill="#fdfec2"/><polygon class="p" points="499.1,363.8 503.0,365.1 508.5,364.0 504.5,362.8"/><polygon points="470.5,353.6 474.2,353.2 479.9,353.5 476.2,353.8" fill="#f98e52"/><polygon points="752.0,391.6 757.7,396.5 761.5,395.4 755.8,390.5" fill="#b7dfec"/><polygon points="713.9,378.5 719.4,382.5 723.4,381.5 717.9,377.5" fill="#f5fbd2"/><polygon points="742.5,388.2 748.1,392.7 752.0,391.6 746.3,387.1" fill="#cce9f2"/><polygon points="732.9,384.8 738.6,389.2 742.5,388.2 736.8,383.8" fill="#dff2f8"/><polygon points="723.4,381.5 729.0,385.8 732.9,384.8 727.4,380.5" fill="#ebf7e5"/><polygon class="p" points="613.6,363.9 618.5,365.2 623.2,364.1 618.3,362.8"/><polygon points="580.2,370.8 584.8,372.0 589.7,372.8 585.1,371.6" fill="#feeea5"/><polygon class="p" points="446.5,363.9 450.1,365.2 455.9,364.1 452.3,362.8"/><polygon points="642.2,373.3 647.3,374.6 651.8,373.7 646.7,372.3" fill="#fff4ae"/><polygon points="427.5,357.2 430.7,355.9 436.7,355.9 433.4,357.1" fill="#fba35c"/><polygon class="p" points="728.3,364.0 734.1,365.3 738.0,364.2 732.2,362.9"/><polygon class="p" points="561.1,364.0 565.5,365.3 570.6,364.2 566.1,362.9"/><polygon points="589.7,372.8 594.4,374.1 599.2,374.2 594.5,373.0" fill="#fff3ad"/><polygon class="p" points="675.8,364.1 681.1,365.4 685.4,364.3 680.1,363.0"/><polygon class="p" points="508.5,364.0 512.5,365.3 518.0,364.2 513.9,363.0"/><polygon points="479.9,353.5 483.6,353.3 489.3,353.8 485.5,353.9" fill="#f98e52"/><polygon class="p" points="623.2,364.1 628.2,365.4 632.8,364.3 627.9,363.0"/><polygon class="p" points="455.9,364.1 459.5,365.4 465.3,364.3 461.6,363.0"/><polygon points="651.8,373.7 657.0,375.1 661.5,374.1 656.3,372.7" fill="#fff4af"/><polygon class="p" points="738.0,364.2 743.9,365.5 747.8,364.4 741.9,363.1"/><polygon class="p" points="570.6,364.2 575.1,365.5 580.1,364.4 575.6,363.1"/><polygon points="599.2,374.2 604.0,375.4 608.8,374.4 604.0,373.3" fill="#fff6b1"/><polygon class="p" points="685.4,364.3 690.9,365.6 695.1,364.5 689.7,363.2"/><polygon class="p" points="518.0,364.2 522.1,365.6 527.4,364.4 523.3,363.2"/><polygon points="436.7,355.9 440.1,354.8 446.0,354.9 442.6,355.9" fill="#fa9957"/><polygon points="489.3,353.8 493.2,353.8 498.8,354.3 494.9,354.3" fill="#f98f53"/><polygon class="p" points="632.8,364.3 637.8,365.6 642.4,364.5 637.4,363.2"/><polygon class="p" points="465.3,364.3 469.0,365.6 474.7,364.5 470.9,363.2"/><polygon points="661.5,374.1 666.7,375.7 671.1,374.7 665.9,373.1" fill="#fff5b0"/><polygon class="p" points="747.8,364.4 753.7,365.7 757.5,364.6 751.6,363.3"/><polygon class="p" points="580.1,364.4 584.8,365.7 589.7,364.6 585.1,363.3"/><polygon class="p" points="412.5,364.4 415.8,365.7 421.9,364.6 418.5,363.3"/><polygon points="608.8,374.4 613.6,375.5 618.4,374.4 613.5,373.3" fill="#fff5b0"/><polygon points="498.8,354.3 502.7,354.4 508.2,355.1 504.3,354.9" fill="#f99254"/><polygon class="p" points="695.1,364.5 700.6,365.8 704.8,364.7 699.3,363.4"/><polygon class="p" points="527.4,364.4 531.6,365.8 536.9,364.7 532.7,363.4"/><polygon points="671.1,374.7 676.4,376.3 680.8,375.2 675.4,373.6" fill="#fff6b2"/><polygon class="p" points="642.4,364.5 647.5,365.8 652.1,364.7 647.0,363.4"/><polygon class="p" points="474.7,364.5 478.5,365.8 484.1,364.7 480.3,363.4"/><polygon points="446.0,354.9 449.5,353.9 455.4,354.0 451.9,354.9" fill="#f99053"/><polygon class="p" points="589.7,364.6 594.4,365.9 599.3,364.8 594.6,363.5"/><polygon class="p" points="421.9,364.6 425.2,365.9 431.2,364.8 427.8,363.5"/><polygon points="508.2,355.1 512.3,355.4 517.7,356.2 513.7,355.8" fill="#fa9857"/><polygon points="618.4,374.4 623.3,375.4 628.0,374.3 623.1,373.2" fill="#fff4ae"/><polygon class="p" points="704.8,364.7 710.4,366.0 714.5,364.9 708.9,363.6"/><polygon class="p" points="536.9,364.7 541.2,366.0 546.4,364.9 542.1,363.6"/><polygon points="680.8,375.2 686.2,377.1 690.4,375.9 685.1,374.0" fill="#fff8b4"/><polygon class="p" points="652.1,364.7 657.3,366.1 661.7,365.0 656.5,363.6"/><polygon points="517.7,356.2 521.9,356.7 527.3,357.8 523.1,357.1" fill="#fba05b"/><polygon class="p" points="484.1,364.7 488.0,366.0 493.6,364.9 489.7,363.6"/><polygon class="p" points="599.3,364.8 604.1,366.1 608.9,365.0 604.1,363.7"/><polygon points="455.4,354.0 458.9,353.3 464.7,353.4 461.2,354.1" fill="#f88950"/><polygon points="412.1,359.0 415.3,357.6 421.4,357.3 418.2,358.7" fill="#fca85e"/><polygon class="p" points="431.2,364.8 434.7,366.1 440.6,365.0 437.2,363.7"/><polygon points="527.3,357.8 531.5,358.5 536.8,360.0 532.6,359.0" fill="#fdad60"/><polygon points="690.4,375.9 695.9,378.4 700.1,377.3 694.7,374.7" fill="#fffbb8"/><polygon points="628.0,374.3 633.0,375.4 637.7,374.4 632.6,373.2" fill="#fff3ad"/><polygon class="p" points="714.5,364.9 720.2,366.2 724.3,365.1 718.6,363.8"/><polygon class="p" points="546.4,364.9 550.8,366.2 556.0,365.1 551.6,363.8"/><polygon points="536.8,360.0 541.1,360.9 546.4,362.4 542.1,361.4" fill="#fdb96b"/><polygon class="p" points="661.7,365.0 667.0,366.3 671.4,365.2 666.1,363.9"/><polygon class="p" points="493.6,364.9 497.5,366.2 503.0,365.1 499.1,363.8"/><polygon points="700.1,377.3 705.6,380.6 709.8,379.6 704.3,376.1" fill="#feffc1"/><polygon points="757.7,396.5 763.5,401.7 767.2,400.7 761.5,395.4" fill="#a1d1e5"/><polygon points="546.4,362.4 550.8,363.4 556.0,364.7 551.6,363.7" fill="#fdc577"/><polygon points="748.1,392.7 753.9,397.5 757.7,396.5 752.0,391.6" fill="#b8e0ed"/><polygon points="709.8,379.6 715.3,383.4 719.4,382.5 713.9,378.5" fill="#f5fbd1"/><polygon class="p" points="608.9,365.0 613.7,366.3 618.5,365.2 613.6,363.9"/><polygon points="738.6,389.2 744.3,393.6 748.1,392.7 742.5,388.2" fill="#cdeaf3"/><polygon class="p" points="440.6,365.0 444.2,366.3 450.1,365.2 446.5,363.9"/><polygon points="719.4,382.5 725.0,386.7 729.0,385.8 723.4,381.5" fill="#ebf7e3"/><polygon points="729.0,385.8 734.6,390.1 738.6,389.2 732.9,384.8" fill="#e0f3f7"/><polygon points="556.0,364.7 560.4,365.6 565.6,367.1 561.1,366.1" fill="#fed182"/><polygon points="464.7,353.4 468.4,352.9 474.2,353.2 470.5,353.6" fill="#f7854e"/><polygon points="637.7,374.4 642.8,375.5 647.3,374.6 642.2,373.3" fill="#fff3ad"/><polygon class="p" points="724.3,365.1 730.1,366.4 734.1,365.3 728.3,364.0"/><polygon class="p" points="556.0,365.1 560.4,366.4 565.5,365.3 561.1,364.0"/><polygon points="565.6,367.1 570.1,368.0 575.2,369.5 570.6,368.4" fill="#fedd8e"/><polygon points="421.4,357.3 424.6,356.1 430.7,355.9 427.5,357.2" fill="#fa9c59"/><polygon class="p" points="671.4,365.2 676.8,366.5 681.1,365.4 675.8,364.1"/><polygon class="p" points="503.0,365.1 507.1,366.5 512.5,365.3 508.5,364.0"/><polygon points="575.2,369.5 579.8,370.6 584.8,372.0 580.2,370.8" fill="#fee699"/><polygon class="p" points="618.5,365.2 623.4,366.5 628.2,365.4 623.2,364.1"/><polygon class="p" points="450.1,365.2 453.7,366.5 459.5,365.4 455.9,364.1"/><polygon points="584.8,372.0 589.4,373.2 594.4,374.1 589.7,372.8" fill="#feeea5"/><polygon points="647.3,374.6 652.5,375.9 657.0,375.1 651.8,373.7" fill="#fff3ad"/><polygon points="474.2,353.2 477.9,352.9 483.6,353.3 479.9,353.5" fill="#f7834d"/><polygon class="p" points="734.1,365.3 739.9,366.6 743.9,365.5 738.0,364.2"/><polygon class="p" points="565.5,365.3 570.1,366.6 575.1,365.5 570.6,364.2"/><polygon points="594.4,374.1 599.1,375.3 604.0,375.4 599.2,374.2" fill="#fff3ad"/><polygon class="p" points="681.1,365.4 686.6,366.7 690.9,365.6 685.4,364.3"/><polygon class="p" points="512.5,365.3 516.6,366.7 522.1,365.6 518.0,364.2"/><polygon class="p" points="628.2,365.4 633.2,366.8 637.8,365.6 632.8,364.3"/><polygon points="430.7,355.9 434.0,354.8 440.1,354.8 436.7,355.9" fill="#f99154"/><polygon class="p" points="459.5,365.4 463.2,366.7 469.0,365.6 465.3,364.3"/><polygon points="657.0,375.1 662.3,376.6 666.7,375.7 661.5,374.1" fill="#fff4af"/><polygon points="483.6,353.3 487.5,353.3 493.2,353.8 489.3,353.8" fill="#f7844e"/><polygon class="p" points="743.9,365.5 749.8,366.8 753.7,365.7 747.8,364.4"/><polygon class="p" points="575.1,365.5 579.7,366.8 584.8,365.7 580.1,364.4"/><polygon points="604.0,375.4 608.8,376.5 613.6,375.5 608.8,374.4" fill="#fff5af"/><polygon class="p" points="690.9,365.6 696.4,366.9 700.6,365.8 695.1,364.5"/><polygon class="p" points="522.1,365.6 526.3,366.9 531.6,365.8 527.4,364.4"/><polygon points="666.7,375.7 672.0,377.3 676.4,376.3 671.1,374.7" fill="#fff6b1"/><polygon class="p" points="637.8,365.6 642.9,367.0 647.5,365.8 642.4,364.5"/><polygon class="p" points="469.0,365.6 472.7,366.9 478.5,365.8 474.7,364.5"/><polygon points="493.2,353.8 497.1,353.9 502.7,354.4 498.8,354.3" fill="#f8874f"/><polygon class="p" points="753.7,365.7 759.7,367.1 763.5,365.9 757.5,364.6"/><polygon class="p" points="584.8,365.7 589.4,367.0 594.4,365.9 589.7,364.6"/><polygon class="p" points="415.8,365.7 419.1,367.0 425.2,365.9 421.9,364.6"/><polygon points="440.1,354.8 443.5,353.8 449.5,353.9 446.0,354.9" fill="#f88850"/><polygon points="613.6,375.5 618.6,376.5 623.3,375.4 618.4,374.4" fill="#fff4ae"/><polygon class="p" points="700.6,365.8 706.2,367.1 710.4,366.0 704.8,364.7"/><polygon class="p" points="531.6,365.8 535.9,367.1 541.2,366.0 536.9,364.7"/><polygon points="676.4,376.3 681.8,378.2 686.2,377.1 680.8,375.2" fill="#fff8b4"/><polygon points="502.7,354.4 506.7,354.7 512.3,355.4 508.2,355.1" fill="#f88b51"/><polygon class="p" points="647.5,365.8 652.7,367.2 657.3,366.1 652.1,364.7"/><polygon class="p" points="478.5,365.8 482.3,367.2 488.0,366.0 484.1,364.7"/><polygon class="p" points="594.4,365.9 599.2,367.2 604.1,366.1 599.3,364.8"/><polygon class="p" points="425.2,365.9 428.7,367.2 434.7,366.1 431.2,364.8"/><polygon points="686.2,377.1 691.6,379.6 695.9,378.4 690.4,375.9" fill="#fffab8"/><polygon points="623.3,375.4 628.3,376.4 633.0,375.4 628.0,374.3" fill="#fff3ac"/><polygon points="512.3,355.4 516.4,355.8 521.9,356.7 517.7,356.2" fill="#f99254"/><polygon class="p" points="710.4,366.0 716.1,367.3 720.2,366.2 714.5,364.9"/><polygon class="p" points="541.2,366.0 545.5,367.3 550.8,366.2 546.4,364.9"/><polygon points="449.5,353.9 453.0,353.1 458.9,353.3 455.4,354.0" fill="#f7814c"/><polygon points="763.5,401.7 769.3,407.3 773.1,406.4 767.2,400.7" fill="#89beda"/><polygon class="p" points="657.3,366.1 662.5,367.4 667.0,366.3 661.7,365.0"/><polygon class="p" points="488.0,366.0 491.9,367.4 497.5,366.2 493.6,364.9"/><polygon points="695.9,378.4 701.4,381.7 705.6,380.6 700.1,377.3" fill="#feffc1"/><polygon points="753.9,397.5 759.7,402.7 763.5,401.7 757.7,396.5" fill="#a3d3e6"/><polygon points="521.9,356.7 526.0,357.2 531.5,358.5 527.3,357.8" fill="#fa9c59"/><polygon class="p" points="604.1,366.1 608.9,367.5 613.7,366.3 608.9,365.0"/><polygon points="705.6,380.6 711.2,384.4 715.3,383.4 709.8,379.6" fill="#f6fccf"/><polygon class="p" points="434.7,366.1 438.2,367.4 444.2,366.3 440.6,365.0"/><polygon points="744.3,393.6 750.0,398.5 753.9,397.5 748.1,392.7" fill="#bae1ed"/><polygon points="734.6,390.1 740.3,394.5 744.3,393.6 738.6,389.2" fill="#cfebf3"/><polygon points="715.3,383.4 720.9,387.6 725.0,386.7 719.4,382.5" fill="#ecf8e1"/><polygon points="725.0,386.7 730.6,391.0 734.6,390.1 729.0,385.8" fill="#e2f4f5"/><polygon points="531.5,358.5 535.7,359.3 541.1,360.9 536.8,360.0" fill="#fcaa5f"/><polygon class="p" points="720.2,366.2 726.0,367.5 730.1,366.4 724.3,365.1"/><polygon points="633.0,375.4 638.1,376.4 642.8,375.5 637.7,374.4" fill="#fff2ac"/><polygon class="p" points="550.8,366.2 555.2,367.5 560.4,366.4 556.0,365.1"/><polygon points="541.1,360.9 545.5,361.8 550.8,363.4 546.4,362.4" fill="#fdb76a"/><polygon points="458.9,353.3 462.5,352.7 468.4,352.9 464.7,353.4" fill="#f67c4a"/><polygon class="p" points="667.0,366.3 672.4,367.6 676.8,366.5 671.4,365.2"/><polygon class="p" points="497.5,366.2 501.5,367.6 507.1,366.5 503.0,365.1"/><polygon points="415.3,357.6 418.5,356.3 424.6,356.1 421.4,357.3" fill="#fa9656"/><polygon points="550.8,363.4 555.2,364.2 560.4,365.6 556.0,364.7" fill="#fdc375"/><polygon class="p" points="613.7,366.3 618.7,367.7 623.4,366.5 618.5,365.2"/><polygon class="p" points="444.2,366.3 447.7,367.7 453.7,366.5 450.1,365.2"/><polygon points="560.4,365.6 564.9,366.4 570.1,368.0 565.6,367.1" fill="#fecf80"/><polygon points="642.8,375.5 647.9,376.7 652.5,375.9 647.3,374.6" fill="#fff2ac"/><polygon class="p" points="730.1,366.4 735.9,367.8 739.9,366.6 734.1,365.3"/><polygon class="p" points="560.4,366.4 564.9,367.7 570.1,366.6 565.5,365.3"/><polygon points="570.1,368.0 574.7,368.9 579.8,370.6 575.2,369.5" fill="#fedb8c"/><polygon class="p" points="676.8,366.5 682.2,367.8 686.6,366.7 681.1,365.4"/><polygon class="p" points="507.1,366.5 511.2,367.8 516.6,366.7 512.5,365.3"/><polygon points="468.4,352.9 472.1,352.6 477.9,352.9 474.2,353.2" fill="#f67949"/><polygon points="579.8,370.6 584.4,371.6 589.4,373.2 584.8,372.0" fill="#fee598"/><polygon class="p" points="623.4,366.5 628.5,367.9 633.2,366.8 628.2,365.4"/><polygon class="p" points="453.7,366.5 457.3,367.9 463.2,366.7 459.5,365.4"/><polygon points="589.4,373.2 594.2,374.3 599.1,375.3 594.4,374.1" fill="#feeda4"/><polygon points="652.5,375.9 657.8,377.3 662.3,376.6 657.0,375.1" fill="#fff3ad"/><polygon class="p" points="739.9,366.6 745.9,368.0 749.8,366.8 743.9,365.5"/><polygon points="424.6,356.1 427.9,354.9 434.0,354.8 430.7,355.9" fill="#f88a50"/><polygon class="p" points="570.1,366.6 574.7,368.0 579.7,366.8 575.1,365.5"/><polygon class="p" points="686.6,366.7 692.1,368.0 696.4,366.9 690.9,365.6"/><polygon points="599.1,375.3 604.0,376.4 608.8,376.5 604.0,375.4" fill="#fff2ab"/><polygon class="p" points="516.6,366.7 520.8,368.0 526.3,366.9 522.1,365.6"/><polygon points="477.9,352.9 481.7,352.8 487.5,353.3 483.6,353.3" fill="#f67949"/><polygon class="p" points="633.2,366.8 638.3,368.1 642.9,367.0 637.8,365.6"/><polygon class="p" points="463.2,366.7 466.9,368.1 472.7,366.9 469.0,365.6"/><polygon points="662.3,376.6 667.6,378.1 672.0,377.3 666.7,375.7" fill="#fff5b0"/><polygon class="p" points="749.8,366.8 755.9,368.2 759.7,367.1 753.7,365.7"/><polygon class="p" points="579.7,366.8 584.4,368.2 589.4,367.0 584.8,365.7"/><polygon points="608.8,376.5 613.7,377.5 618.6,376.5 613.6,375.5" fill="#fff3ad"/><polygon points="487.5,353.3 491.4,353.4 497.1,353.9 493.2,353.8" fill="#f67b4a"/><polygon class="p" points="696.4,366.9 702.0,368.3 706.2,367.1 700.6,365.8"/><polygon class="p" points="526.3,366.9 530.5,368.2 535.9,367.1 531.6,365.8"/><polygon points="434.0,354.8 437.4,353.8 443.5,353.8 440.1,354.8" fill="#f7804c"/><polygon points="672.0,377.3 677.4,379.2 681.8,378.2 676.4,376.3" fill="#fff7b3"/><polygon class="p" points="642.9,367.0 648.1,368.3 652.7,367.2 647.5,365.8"/><polygon class="p" points="472.7,366.9 476.6,368.3 482.3,367.2 478.5,365.8"/><polygon class="p" points="759.7,367.1 765.8,368.4 769.7,367.3 763.5,365.9"/><polygon class="p" points="589.4,367.0 594.2,368.4 599.2,367.2 594.4,365.9"/><polygon class="p" points="419.1,367.0 422.5,368.4 428.7,367.2 425.2,365.9"/><polygon points="497.1,353.9 501.1,354.1 506.7,354.7 502.7,354.4" fill="#f77f4b"/><polygon points="769.3,407.3 775.2,413.1 778.9,412.3 773.1,406.4" fill="#70a9cf"/><polygon points="681.8,378.2 687.3,380.7 691.6,379.6 686.2,377.1" fill="#fffab8"/><polygon points="618.6,376.5 623.6,377.4 628.3,376.4 623.3,375.4" fill="#fff2ac"/><polygon class="p" points="706.2,367.1 711.9,368.5 716.1,367.3 710.4,366.0"/><polygon class="p" points="535.9,367.1 540.2,368.5 545.5,367.3 541.2,366.0"/><polygon points="759.7,402.7 765.6,408.2 769.3,407.3 763.5,401.7" fill="#8cc0db"/><polygon class="p" points="652.7,367.2 658.0,368.5 662.5,367.4 657.3,366.1"/><polygon class="p" points="482.3,367.2 486.2,368.5 491.9,367.4 488.0,366.0"/><polygon points="443.5,353.8 446.9,352.9 453.0,353.1 449.5,353.9" fill="#f67948"/><polygon points="691.6,379.6 697.1,382.7 701.4,381.7 695.9,378.4" fill="#ffffc0"/><polygon points="506.7,354.7 510.8,355.0 516.4,355.8 512.3,355.4" fill="#f7844e"/><polygon points="750.0,398.5 755.9,403.6 759.7,402.7 753.9,397.5" fill="#a6d5e7"/><polygon class="p" points="599.2,367.2 604.0,368.6 608.9,367.5 604.1,366.1"/><polygon class="p" points="428.7,367.2 432.1,368.6 438.2,367.4 434.7,366.1"/><polygon points="701.4,381.7 707.0,385.4 711.2,384.4 705.6,380.6" fill="#f7fcce"/><polygon points="740.3,394.5 746.1,399.3 750.0,398.5 744.3,393.6" fill="#bde2ee"/><polygon points="711.2,384.4 716.8,388.4 720.9,387.6 715.3,383.4" fill="#eef8df"/><polygon points="730.6,391.0 736.4,395.4 740.3,394.5 734.6,390.1" fill="#d2ecf4"/><polygon points="720.9,387.6 726.6,391.8 730.6,391.0 725.0,386.7" fill="#e3f4f3"/><polygon class="p" points="716.1,367.3 721.9,368.7 726.0,367.5 720.2,366.2"/><polygon class="p" points="545.5,367.3 550.0,368.7 555.2,367.5 550.8,366.2"/><polygon points="628.3,376.4 633.4,377.3 638.1,376.4 633.0,375.4" fill="#fff1aa"/><polygon points="516.4,355.8 520.5,356.2 526.0,357.2 521.9,356.7" fill="#f88c51"/><polygon class="p" points="662.5,367.4 667.9,368.8 672.4,367.6 667.0,366.3"/><polygon class="p" points="491.9,367.4 495.9,368.7 501.5,367.6 497.5,366.2"/><polygon points="453.0,353.1 456.5,352.4 462.5,352.7 458.9,353.3" fill="#f57346"/><polygon class="p" points="608.9,367.5 613.8,368.8 618.7,367.7 613.7,366.3"/><polygon class="p" points="438.2,367.4 441.7,368.8 447.7,367.7 444.2,366.3"/><polygon points="526.0,357.2 530.3,357.8 535.7,359.3 531.5,358.5" fill="#fa9756"/><polygon class="p" points="726.0,367.5 731.9,368.9 735.9,367.8 730.1,366.4"/><polygon class="p" points="555.2,367.5 559.7,368.9 564.9,367.7 560.4,366.4"/><polygon points="638.1,376.4 643.3,377.5 647.9,376.7 642.8,375.5" fill="#fff1aa"/><polygon points="535.7,359.3 540.1,360.0 545.5,361.8 541.1,360.9" fill="#fca65d"/><polygon class="p" points="672.4,367.6 677.8,369.0 682.2,367.8 676.8,366.5"/><polygon class="p" points="501.5,367.6 505.6,369.0 511.2,367.8 507.1,366.5"/><polygon points="545.5,361.8 549.9,362.5 555.2,364.2 550.8,363.4" fill="#fdb467"/><polygon class="p" points="618.7,367.7 623.7,369.0 628.5,367.9 623.4,366.5"/><polygon class="p" points="447.7,367.7 451.4,369.0 457.3,367.9 453.7,366.5"/><polygon points="555.2,364.2 559.7,364.9 564.9,366.4 560.4,365.6" fill="#fdc072"/><polygon points="462.5,352.7 466.2,352.2 472.1,352.6 468.4,352.9" fill="#f47044"/><polygon class="p" points="735.9,367.8 741.9,369.1 745.9,368.0 739.9,366.6"/><polygon points="647.9,376.7 653.2,378.0 657.8,377.3 652.5,375.9" fill="#fff2ab"/><polygon class="p" points="564.9,367.7 569.5,369.1 574.7,368.0 570.1,366.6"/><polygon points="564.9,366.4 569.5,367.2 574.7,368.9 570.1,368.0" fill="#fecc7d"/><polygon points="418.5,356.3 421.7,355.1 427.9,354.9 424.6,356.1" fill="#f7844d"/><polygon class="p" points="682.2,367.8 687.8,369.2 692.1,368.0 686.6,366.7"/><polygon points="574.7,368.9 579.3,369.8 584.4,371.6 579.8,370.6" fill="#fed98a"/><polygon class="p" points="511.2,367.8 515.3,369.2 520.8,368.0 516.6,366.7"/><polygon points="584.4,371.6 589.2,372.7 594.2,374.3 589.4,373.2" fill="#fee497"/><polygon class="p" points="628.5,367.9 633.6,369.3 638.3,368.1 633.2,366.8"/><polygon class="p" points="457.3,367.9 461.0,369.2 466.9,368.1 463.2,366.7"/><polygon points="472.1,352.6 475.9,352.4 481.7,352.8 477.9,352.9" fill="#f46f44"/><polygon points="657.8,377.3 663.1,378.9 667.6,378.1 662.3,376.6" fill="#fff4ae"/><polygon points="594.2,374.3 599.0,375.4 604.0,376.4 599.1,375.3" fill="#feeca2"/><polygon class="p" points="745.9,368.0 751.9,369.3 755.9,368.2 749.8,366.8"/><polygon class="p" points="574.7,368.0 579.3,369.3 584.4,368.2 579.7,366.8"/><polygon class="p" points="692.1,368.0 697.7,369.4 702.0,368.3 696.4,366.9"/><polygon class="p" points="520.8,368.0 525.1,369.4 530.5,368.2 526.3,366.9"/><polygon points="604.0,376.4 608.9,377.3 613.7,377.5 608.8,376.5" fill="#fff1a9"/><polygon points="667.6,378.1 673.0,380.0 677.4,379.2 672.0,377.3" fill="#fff6b1"/><polygon class="p" points="638.3,368.1 643.5,369.5 648.1,368.3 642.9,367.0"/><polygon class="p" points="466.9,368.1 470.7,369.5 476.6,368.3 472.7,366.9"/><polygon points="427.9,354.9 431.2,353.8 437.4,353.8 434.0,354.8" fill="#f67949"/><polygon points="481.7,352.8 485.6,352.8 491.4,353.4 487.5,353.3" fill="#f47044"/><polygon class="p" points="755.9,368.2 762.0,369.6 765.8,368.4 759.7,367.1"/><polygon class="p" points="584.4,368.2 589.2,369.5 594.2,368.4 589.4,367.0"/><polygon points="677.4,379.2 682.9,381.7 687.3,380.7 681.8,378.2" fill="#fffab7"/><polygon class="p" points="702.0,368.3 707.7,369.6 711.9,368.5 706.2,367.1"/><polygon class="p" points="530.5,368.2 534.8,369.6 540.2,368.5 535.9,367.1"/><polygon points="613.7,377.5 618.7,378.1 623.6,377.4 618.6,376.5" fill="#fff1aa"/><polygon points="765.6,408.2 771.5,414.0 775.2,413.1 769.3,407.3" fill="#73acd1"/><polygon points="491.4,353.4 495.3,353.6 501.1,354.1 497.1,353.9" fill="#f57446"/><polygon class="p" points="648.1,368.3 653.4,369.7 658.0,368.5 652.7,367.2"/><polygon class="p" points="476.6,368.3 480.4,369.7 486.2,368.5 482.3,367.2"/><polygon points="755.9,403.6 761.7,409.1 765.6,408.2 759.7,402.7" fill="#8fc2dd"/><polygon points="687.3,380.7 692.8,383.7 697.1,382.7 691.6,379.6" fill="#ffffbf"/><polygon class="p" points="765.8,368.4 772.1,369.8 775.9,368.6 769.7,367.3"/><polygon class="p" points="594.2,368.4 599.0,369.8 604.0,368.6 599.2,367.2"/><polygon class="p" points="422.5,368.4 426.0,369.7 432.1,368.6 428.7,367.2"/><polygon points="437.4,353.8 440.8,352.8 446.9,352.9 443.5,353.8" fill="#f47045"/><polygon points="746.1,399.3 752.0,404.5 755.9,403.6 750.0,398.5" fill="#a8d7e8"/><polygon points="697.1,382.7 702.7,386.3 707.0,385.4 701.4,381.7" fill="#f8fccc"/><polygon class="p" points="711.9,368.5 717.7,369.9 721.9,368.7 716.1,367.3"/><polygon points="736.4,395.4 742.2,400.2 746.1,399.3 740.3,394.5" fill="#c0e3ef"/><polygon class="p" points="540.2,368.5 544.6,369.8 550.0,368.7 545.5,367.3"/><polygon points="707.0,385.4 712.6,389.3 716.8,388.4 711.2,384.4" fill="#eff9dd"/><polygon points="501.1,354.1 505.1,354.4 510.8,355.0 506.7,354.7" fill="#f67848"/><polygon points="726.6,391.8 732.3,396.2 736.4,395.4 730.6,391.0" fill="#d5edf5"/><polygon points="716.8,388.4 722.5,392.6 726.6,391.8 720.9,387.6" fill="#e4f5f0"/><polygon points="623.6,377.4 628.7,378.0 633.4,377.3 628.3,376.4" fill="#fff0a9"/><polygon class="p" points="658.0,368.5 663.4,369.9 667.9,368.8 662.5,367.4"/><polygon class="p" points="486.2,368.5 490.2,369.9 495.9,368.7 491.9,367.4"/><polygon class="p" points="604.0,368.6 608.9,370.0 613.8,368.8 608.9,367.5"/><polygon class="p" points="432.1,368.6 435.7,370.0 441.7,368.8 438.2,367.4"/><polygon points="510.8,355.0 514.9,355.4 520.5,356.2 516.4,355.8" fill="#f67e4b"/><polygon class="p" points="721.9,368.7 727.8,370.1 731.9,368.9 726.0,367.5"/><polygon class="p" points="550.0,368.7 554.5,370.0 559.7,368.9 555.2,367.5"/><polygon points="446.9,352.9 450.5,352.1 456.5,352.4 453.0,353.1" fill="#f36a42"/><polygon points="633.4,377.3 638.6,378.1 643.3,377.5 638.1,376.4" fill="#fff0a8"/><polygon class="p" points="667.9,368.8 673.3,370.1 677.8,369.0 672.4,367.6"/><polygon class="p" points="495.9,368.7 499.9,370.1 505.6,369.0 501.5,367.6"/><polygon points="520.5,356.2 524.8,356.6 530.3,357.8 526.0,357.2" fill="#f8864f"/><polygon class="p" points="613.8,368.8 618.8,370.2 623.7,369.0 618.7,367.7"/><polygon class="p" points="441.7,368.8 445.4,370.2 451.4,369.0 447.7,367.7"/><polygon points="530.3,357.8 534.6,358.3 540.1,360.0 535.7,359.3" fill="#f99254"/><polygon class="p" points="731.9,368.9 737.9,370.3 741.9,369.1 735.9,367.8"/><polygon class="p" points="559.7,368.9 564.3,370.3 569.5,369.1 564.9,367.7"/><polygon points="643.3,377.5 648.6,378.6 653.2,378.0 647.9,376.7" fill="#fff0a9"/><polygon points="456.5,352.4 460.2,351.9 466.2,352.2 462.5,352.7" fill="#f16740"/><polygon points="540.1,360.0 544.5,360.5 549.9,362.5 545.5,361.8" fill="#fba25b"/><polygon class="p" points="677.8,369.0 683.3,370.4 687.8,369.2 682.2,367.8"/><polygon class="p" points="505.6,369.0 509.7,370.3 515.3,369.2 511.2,367.8"/><polygon points="549.9,362.5 554.4,363.0 559.7,364.9 555.2,364.2" fill="#fdb164"/><polygon class="p" points="623.7,369.0 628.8,370.4 633.6,369.3 628.5,367.9"/><polygon class="p" points="451.4,369.0 455.1,370.4 461.0,369.2 457.3,367.9"/><polygon points="559.7,364.9 564.3,365.6 569.5,367.2 564.9,366.4" fill="#fdbd6f"/><polygon class="p" points="741.9,369.1 748.0,370.5 751.9,369.3 745.9,368.0"/><polygon class="p" points="569.5,369.1 574.2,370.5 579.3,369.3 574.7,368.0"/><polygon points="653.2,378.0 658.5,379.5 663.1,378.9 657.8,377.3" fill="#fff2ab"/><polygon points="569.5,367.2 574.2,368.0 579.3,369.8 574.7,368.9" fill="#fec97b"/><polygon points="466.2,352.2 469.9,352.0 475.9,352.4 472.1,352.6" fill="#f0653f"/><polygon class="p" points="687.8,369.2 693.4,370.6 697.7,369.4 692.1,368.0"/><polygon class="p" points="515.3,369.2 519.5,370.6 525.1,369.4 520.8,368.0"/><polygon points="579.3,369.8 584.1,370.7 589.2,372.7 584.4,371.6" fill="#fed788"/><polygon class="p" points="633.6,369.3 638.8,370.6 643.5,369.5 638.3,368.1"/><polygon points="589.2,372.7 594.0,373.7 599.0,375.4 594.2,374.3" fill="#fee395"/><polygon class="p" points="461.0,369.2 464.8,370.6 470.7,369.5 466.9,368.1"/><polygon points="663.1,378.9 668.5,380.7 673.0,380.0 667.6,378.1" fill="#fff4af"/><polygon class="p" points="751.9,369.3 758.1,370.7 762.0,369.6 755.9,368.2"/><polygon class="p" points="579.3,369.3 584.1,370.7 589.2,369.5 584.4,368.2"/><polygon points="421.7,355.1 425.0,353.9 431.2,353.8 427.9,354.9" fill="#f57245"/><polygon points="599.0,375.4 603.9,376.3 608.9,377.3 604.0,376.4" fill="#feeaa0"/><polygon points="475.9,352.4 479.7,352.3 485.6,352.8 481.7,352.8" fill="#f16640"/><polygon class="p" points="697.7,369.4 703.4,370.8 707.7,369.6 702.0,368.3"/><polygon class="p" points="525.1,369.4 529.4,370.8 534.8,369.6 530.5,368.2"/><polygon points="673.0,380.0 678.5,382.4 682.9,381.7 677.4,379.2" fill="#fff8b5"/><polygon points="761.7,409.1 767.7,414.9 771.5,414.0 765.6,408.2" fill="#76afd2"/><polygon class="p" points="643.5,369.5 648.7,370.9 653.4,369.7 648.1,368.3"/><polygon points="608.9,377.3 613.9,377.9 618.7,378.1 613.7,377.5" fill="#feeea6"/><polygon class="p" points="470.7,369.5 474.6,370.8 480.4,369.7 476.6,368.3"/><polygon points="682.9,381.7 688.5,384.6 692.8,383.7 687.3,380.7" fill="#fffebd"/><polygon points="752.0,404.5 757.9,410.0 761.7,409.1 755.9,403.6" fill="#92c5de"/><polygon class="p" points="762.0,369.6 768.2,371.0 772.1,369.8 765.8,368.4"/><polygon class="p" points="589.2,369.5 594.0,370.9 599.0,369.8 594.2,368.4"/><polygon points="485.6,352.8 489.5,352.9 495.3,353.6 491.4,353.4" fill="#f26841"/><polygon points="742.2,400.2 748.0,405.4 752.0,404.5 746.1,399.3" fill="#acd9e9"/><polygon points="692.8,383.7 698.4,387.2 702.7,386.3 697.1,382.7" fill="#f9fdca"/><polygon class="p" points="707.7,369.6 713.5,371.0 717.7,369.9 711.9,368.5"/><polygon class="p" points="534.8,369.6 539.2,371.0 544.6,369.8 540.2,368.5"/><polygon points="431.2,353.8 434.7,352.7 440.8,352.8 437.4,353.8" fill="#f26941"/><polygon points="702.7,386.3 708.4,390.1 712.6,389.3 707.0,385.4" fill="#f0f9da"/><polygon points="732.3,396.2 738.1,401.0 742.2,400.2 736.4,395.4" fill="#c3e5f0"/><polygon points="712.6,389.3 718.3,393.4 722.5,392.6 716.8,388.4" fill="#e6f5ed"/><polygon points="722.5,392.6 728.2,396.9 732.3,396.2 726.6,391.8" fill="#d8eff6"/><polygon points="618.7,378.1 623.8,378.7 628.7,378.0 623.6,377.4" fill="#feefa6"/><polygon class="p" points="653.4,369.7 658.8,371.1 663.4,369.9 658.0,368.5"/><polygon class="p" points="480.4,369.7 484.4,371.1 490.2,369.9 486.2,368.5"/><polygon points="495.3,353.6 499.4,353.8 505.1,354.4 501.1,354.1" fill="#f46c43"/><polygon class="p" points="772.1,369.8 778.4,371.2 782.2,370.0 775.9,368.6"/><polygon class="p" points="599.0,369.8 604.0,371.2 608.9,370.0 604.0,368.6"/><polygon class="p" points="426.0,369.7 429.5,371.1 435.7,370.0 432.1,368.6"/><polygon class="p" points="717.7,369.9 723.6,371.3 727.8,370.1 721.9,368.7"/><polygon class="p" points="544.6,369.8 549.1,371.2 554.5,370.0 550.0,368.7"/><polygon class="p" points="663.4,369.9 668.8,371.3 673.3,370.1 667.9,368.8"/><polygon points="505.1,354.4 509.3,354.8 514.9,355.4 510.8,355.0" fill="#f57245"/><polygon class="p" points="490.2,369.9 494.2,371.3 499.9,370.1 495.9,368.7"/><polygon points="628.7,378.0 633.8,378.8 638.6,378.1 633.4,377.3" fill="#feeea5"/><polygon points="440.8,352.8 444.4,351.9 450.5,352.1 446.9,352.9" fill="#ef623e"/><polygon class="p" points="608.9,370.0 613.9,371.4 618.8,370.2 613.8,368.8"/><polygon class="p" points="435.7,370.0 439.3,371.4 445.4,370.2 441.7,368.8"/><polygon class="p" points="727.8,370.1 733.8,371.5 737.9,370.3 731.9,368.9"/><polygon class="p" points="554.5,370.0 559.0,371.5 564.3,370.3 559.7,368.9"/><polygon points="514.9,355.4 519.1,355.8 524.8,356.6 520.5,356.2" fill="#f67848"/><polygon class="p" points="673.3,370.1 678.9,371.5 683.3,370.4 677.8,369.0"/><polygon points="638.6,378.1 643.9,379.2 648.6,378.6 643.3,377.5" fill="#feeea6"/><polygon class="p" points="499.9,370.1 504.1,371.5 509.7,370.3 505.6,369.0"/><polygon points="450.5,352.1 454.1,351.5 460.2,351.9 456.5,352.4" fill="#ed5d3c"/><polygon class="p" points="618.8,370.2 623.9,371.6 628.8,370.4 623.7,369.0"/><polygon class="p" points="445.4,370.2 449.0,371.6 455.1,370.4 451.4,369.0"/><polygon points="524.8,356.6 529.1,357.1 534.6,358.3 530.3,357.8" fill="#f7814c"/><polygon class="p" points="737.9,370.3 743.9,371.7 748.0,370.5 741.9,369.1"/><polygon class="p" points="564.3,370.3 569.0,371.7 574.2,370.5 569.5,369.1"/><polygon points="534.6,358.3 539.0,358.7 544.5,360.5 540.1,360.0" fill="#f88d52"/><polygon points="648.6,378.6 653.9,380.0 658.5,379.5 653.2,378.0" fill="#fff0a8"/><polygon class="p" points="683.3,370.4 689.0,371.8 693.4,370.6 687.8,369.2"/><polygon class="p" points="509.7,370.3 513.9,371.7 519.5,370.6 515.3,369.2"/><polygon points="544.5,360.5 549.0,360.9 554.4,363.0 549.9,362.5" fill="#fb9c59"/><polygon class="p" points="628.8,370.4 634.0,371.8 638.8,370.6 633.6,369.3"/><polygon points="460.2,351.9 463.9,351.5 469.9,352.0 466.2,352.2" fill="#ec5c3b"/><polygon class="p" points="455.1,370.4 458.8,371.8 464.8,370.6 461.0,369.2"/><polygon points="554.4,363.0 558.9,363.5 564.3,365.6 559.7,364.9" fill="#fdad60"/><polygon points="658.5,379.5 663.9,381.3 668.5,380.7 663.1,378.9" fill="#fff2ac"/><polygon class="p" points="748.0,370.5 754.1,371.9 758.1,370.7 751.9,369.3"/><polygon class="p" points="574.2,370.5 578.9,371.9 584.1,370.7 579.3,369.3"/><polygon points="564.3,365.6 568.9,366.3 574.2,368.0 569.5,367.2" fill="#fdb96c"/><polygon class="p" points="693.4,370.6 699.1,372.0 703.4,370.8 697.7,369.4"/><polygon class="p" points="519.5,370.6 523.8,372.0 529.4,370.8 525.1,369.4"/><polygon points="574.2,368.0 578.9,368.8 584.1,370.7 579.3,369.8" fill="#fdc678"/><polygon points="668.5,380.7 674.0,383.1 678.5,382.4 673.0,380.0" fill="#fff7b2"/><polygon points="584.1,370.7 588.9,371.7 594.0,373.7 589.2,372.7" fill="#fed585"/><polygon class="p" points="638.8,370.6 644.0,372.1 648.7,370.9 643.5,369.5"/><polygon points="469.9,352.0 473.8,351.8 479.7,352.3 475.9,352.4" fill="#ec5c3b"/><polygon class="p" points="464.8,370.6 468.7,372.0 474.6,370.8 470.7,369.5"/><polygon points="757.9,410.0 763.8,415.8 767.7,414.9 761.7,409.1" fill="#7ab2d4"/><polygon points="594.0,373.7 598.9,374.6 603.9,376.3 599.0,375.4" fill="#fee293"/><polygon class="p" points="758.1,370.7 764.3,372.2 768.2,371.0 762.0,369.6"/><polygon class="p" points="584.1,370.7 588.9,372.1 594.0,370.9 589.2,369.5"/><polygon points="678.5,382.4 684.0,385.3 688.5,384.6 682.9,381.7" fill="#fffcbb"/><polygon points="748.0,405.4 753.9,410.9 757.9,410.0 752.0,404.5" fill="#95c7df"/><polygon points="603.9,376.3 608.9,376.9 613.9,377.9 608.9,377.3" fill="#fee89c"/><polygon class="p" points="703.4,370.8 709.2,372.2 713.5,371.0 707.7,369.6"/><polygon class="p" points="529.4,370.8 533.7,372.2 539.2,371.0 534.8,369.6"/><polygon points="688.5,384.6 694.1,387.9 698.4,387.2 692.8,383.7" fill="#fafdc8"/><polygon points="738.1,401.0 744.0,406.3 748.0,405.4 742.2,400.2" fill="#afdbea"/><polygon points="479.7,352.3 483.6,352.3 489.5,352.9 485.6,352.8" fill="#ed5e3c"/><polygon points="698.4,387.2 704.1,390.9 708.4,390.1 702.7,386.3" fill="#f2fad8"/><polygon class="p" points="648.7,370.9 654.1,372.3 658.8,371.1 653.4,369.7"/><polygon points="728.2,396.9 734.1,401.8 738.1,401.0 732.3,396.2" fill="#c6e6f1"/><polygon class="p" points="474.6,370.8 478.5,372.3 484.4,371.1 480.4,369.7"/><polygon points="708.4,390.1 714.1,394.1 718.3,393.4 712.6,389.3" fill="#e8f6e9"/><polygon points="425.0,353.9 428.4,352.7 434.7,352.7 431.2,353.8" fill="#ef623e"/><polygon points="718.3,393.4 724.1,397.7 728.2,396.9 722.5,392.6" fill="#dbf1f7"/><polygon points="613.9,377.9 619.0,378.4 623.8,378.7 618.7,378.1" fill="#feeba1"/><polygon class="p" points="768.2,371.0 774.6,372.4 778.4,371.2 772.1,369.8"/><polygon class="p" points="594.0,370.9 598.9,372.4 604.0,371.2 599.0,369.8"/><polygon class="p" points="713.5,371.0 719.4,372.4 723.6,371.3 717.7,369.9"/><polygon class="p" points="539.2,371.0 543.7,372.4 549.1,371.2 544.6,369.8"/><polygon points="489.5,352.9 493.6,353.2 499.4,353.8 495.3,353.6" fill="#ee613e"/><polygon class="p" points="658.8,371.1 664.2,372.5 668.8,371.3 663.4,369.9"/><polygon class="p" points="484.4,371.1 488.4,372.5 494.2,371.3 490.2,369.9"/><polygon points="623.8,378.7 629.0,379.2 633.8,378.8 628.7,378.0" fill="#feeca2"/><polygon class="p" points="604.0,371.2 609.0,372.6 613.9,371.4 608.9,370.0"/><polygon class="p" points="429.5,371.1 433.1,372.6 439.3,371.4 435.7,370.0"/><polygon points="434.7,352.7 438.1,351.7 444.4,351.9 440.8,352.8" fill="#eb5a3a"/><polygon points="499.4,353.8 503.5,354.2 509.3,354.8 505.1,354.4" fill="#f16640"/><polygon class="p" points="723.6,371.3 729.6,372.7 733.8,371.5 727.8,370.1"/><polygon class="p" points="549.1,371.2 553.7,372.7 559.0,371.5 554.5,370.0"/><polygon class="p" points="668.8,371.3 674.3,372.7 678.9,371.5 673.3,370.1"/><polygon class="p" points="494.2,371.3 498.3,372.7 504.1,371.5 499.9,370.1"/><polygon points="633.8,378.8 639.1,379.6 643.9,379.2 638.6,378.1" fill="#feeca2"/><polygon points="509.3,354.8 513.5,355.1 519.1,355.8 514.9,355.4" fill="#f36b42"/><polygon class="p" points="613.9,371.4 619.0,372.8 623.9,371.6 618.8,370.2"/><polygon class="p" points="439.3,371.4 442.9,372.8 449.0,371.6 445.4,370.2"/><polygon class="p" points="733.8,371.5 739.8,372.9 743.9,371.7 737.9,370.3"/><polygon class="p" points="559.0,371.5 563.7,372.9 569.0,371.7 564.3,370.3"/><polygon points="444.4,351.9 447.9,351.2 454.1,351.5 450.5,352.1" fill="#e85438"/><polygon class="p" points="678.9,371.5 684.5,373.0 689.0,371.8 683.3,370.4"/><polygon points="519.1,355.8 523.4,356.2 529.1,357.1 524.8,356.6" fill="#f57245"/><polygon class="p" points="504.1,371.5 508.2,372.9 513.9,371.7 509.7,370.3"/><polygon points="643.9,379.2 649.2,380.4 653.9,380.0 648.6,378.6" fill="#feeda4"/><polygon class="p" points="623.9,371.6 629.1,373.0 634.0,371.8 628.8,370.4"/><polygon class="p" points="449.0,371.6 452.8,373.0 458.8,371.8 455.1,370.4"/><polygon points="529.1,357.1 533.4,357.3 539.0,358.7 534.6,358.3" fill="#f67a49"/><polygon class="p" points="743.9,371.7 750.1,373.1 754.1,371.9 748.0,370.5"/><polygon class="p" points="569.0,371.7 573.7,373.1 578.9,371.9 574.2,370.5"/><polygon points="454.1,351.5 457.8,351.1 463.9,351.5 460.2,351.9" fill="#e75237"/><polygon points="653.9,380.0 659.3,381.7 663.9,381.3 658.5,379.5" fill="#fff0a8"/><polygon class="p" points="689.0,371.8 694.7,373.2 699.1,372.0 693.4,370.6"/><polygon class="p" points="513.9,371.7 518.2,373.2 523.8,372.0 519.5,370.6"/><polygon points="539.0,358.7 543.5,358.9 549.0,360.9 544.5,360.5" fill="#f7864f"/><polygon class="p" points="634.0,371.8 639.2,373.3 644.0,372.1 638.8,370.6"/><polygon class="p" points="458.8,371.8 462.7,373.2 468.7,372.0 464.8,370.6"/><polygon points="663.9,381.3 669.4,383.6 674.0,383.1 668.5,380.7" fill="#fff4af"/><polygon points="549.0,360.9 553.5,361.2 558.9,363.5 554.4,363.0" fill="#fa9656"/><polygon points="753.9,410.9 759.9,416.7 763.8,415.8 757.9,410.0" fill="#7db4d5"/><polygon class="p" points="754.1,371.9 760.4,373.4 764.3,372.2 758.1,370.7"/><polygon class="p" points="578.9,371.9 583.7,373.3 588.9,372.1 584.1,370.7"/><polygon points="558.9,363.5 563.6,364.1 568.9,366.3 564.3,365.6" fill="#fca75e"/><polygon points="463.9,351.5 467.7,351.2 473.8,351.8 469.9,352.0" fill="#e75236"/><polygon points="674.0,383.1 679.5,385.8 684.0,385.3 678.5,382.4" fill="#fffab8"/><polygon points="744.0,406.3 749.9,411.9 753.9,410.9 748.0,405.4" fill="#98cae1"/><polygon points="568.9,366.3 573.7,367.0 578.9,368.8 574.2,368.0" fill="#fdb669"/><polygon class="p" points="699.1,372.0 704.9,373.4 709.2,372.2 703.4,370.8"/><polygon class="p" points="523.8,372.0 528.2,373.4 533.7,372.2 529.4,370.8"/><polygon points="578.9,368.8 583.7,369.7 588.9,371.7 584.1,370.7" fill="#fdc375"/><polygon points="684.0,385.3 689.6,388.5 694.1,387.9 688.5,384.6" fill="#fcfec4"/><polygon points="734.1,401.8 740.0,407.1 744.0,406.3 738.1,401.0" fill="#b2ddeb"/><polygon class="p" points="644.0,372.1 649.4,373.5 654.1,372.3 648.7,370.9"/><polygon class="p" points="468.7,372.0 472.6,373.5 478.5,372.3 474.6,370.8"/><polygon points="588.9,371.7 593.8,372.6 598.9,374.6 594.0,373.7" fill="#fed283"/><polygon points="694.1,387.9 699.7,391.6 704.1,390.9 698.4,387.2" fill="#f4fbd4"/><polygon points="724.1,397.7 729.9,402.5 734.1,401.8 728.2,396.9" fill="#cae8f2"/><polygon points="704.1,390.9 709.8,394.8 714.1,394.1 708.4,390.1" fill="#eaf7e6"/><polygon points="714.1,394.1 719.9,398.4 724.1,397.7 718.3,393.4" fill="#dff2f8"/><polygon class="p" points="764.3,372.2 770.7,373.6 774.6,372.4 768.2,371.0"/><polygon points="598.9,374.6 603.9,375.3 608.9,376.9 603.9,376.3" fill="#fedf8f"/><polygon class="p" points="588.9,372.1 593.8,373.6 598.9,372.4 594.0,370.9"/><polygon points="473.8,351.8 477.7,351.6 483.6,352.3 479.7,352.3" fill="#e75337"/><polygon class="p" points="709.2,372.2 715.1,373.7 719.4,372.4 713.5,371.0"/><polygon class="p" points="533.7,372.2 538.2,373.6 543.7,372.4 539.2,371.0"/><polygon points="608.9,376.9 614.0,377.5 619.0,378.4 613.9,377.9" fill="#fee598"/><polygon class="p" points="654.1,372.3 659.6,373.7 664.2,372.5 658.8,371.1"/><polygon class="p" points="478.5,372.3 482.5,373.7 488.4,372.5 484.4,371.1"/><polygon points="483.6,352.3 487.6,352.4 493.6,353.2 489.5,352.9" fill="#e95638"/><polygon class="p" points="598.9,372.4 603.9,373.8 609.0,372.6 604.0,371.2"/><polygon points="619.0,378.4 624.1,378.9 629.0,379.2 623.8,378.7" fill="#fee89c"/><polygon class="p" points="719.4,372.4 725.4,373.9 729.6,372.7 723.6,371.3"/><polygon class="p" points="543.7,372.4 548.2,373.9 553.7,372.7 549.1,371.2"/><polygon points="428.4,352.7 431.8,351.6 438.1,351.7 434.7,352.7" fill="#e75237"/><polygon class="p" points="664.2,372.5 669.8,374.0 674.3,372.7 668.8,371.3"/><polygon class="p" points="488.4,372.5 492.5,373.9 498.3,372.7 494.2,371.3"/><polygon points="493.6,353.2 497.7,353.4 503.5,354.2 499.4,353.8" fill="#eb5b3b"/><polygon class="p" points="609.0,372.6 614.0,374.0 619.0,372.8 613.9,371.4"/><polygon class="p" points="433.1,372.6 436.7,374.0 442.9,372.8 439.3,371.4"/><polygon points="629.0,379.2 634.3,380.0 639.1,379.6 633.8,378.8" fill="#fee99e"/><polygon class="p" points="729.6,372.7 735.7,374.1 739.8,372.9 733.8,371.5"/><polygon class="p" points="553.7,372.7 558.3,374.1 563.7,372.9 559.0,371.5"/><polygon points="503.5,354.2 507.7,354.5 513.5,355.1 509.3,354.8" fill="#ee603d"/><polygon class="p" points="674.3,372.7 680.0,374.2 684.5,373.0 678.9,371.5"/><polygon class="p" points="498.3,372.7 502.5,374.2 508.2,372.9 504.1,371.5"/><polygon points="438.1,351.7 441.7,350.9 447.9,351.2 444.4,351.9" fill="#e44c34"/><polygon points="639.1,379.6 644.5,380.8 649.2,380.4 643.9,379.2" fill="#feeba0"/><polygon class="p" points="619.0,372.8 624.2,374.3 629.1,373.0 623.9,371.6"/><polygon class="p" points="442.9,372.8 446.6,374.2 452.8,373.0 449.0,371.6"/><polygon points="513.5,355.1 517.7,355.5 523.4,356.2 519.1,355.8" fill="#f0653f"/><polygon class="p" points="739.8,372.9 746.0,374.4 750.1,373.1 743.9,371.7"/><polygon class="p" points="563.7,372.9 568.4,374.3 573.7,373.1 569.0,371.7"/><polygon class="p" points="684.5,373.0 690.2,374.4 694.7,373.2 689.0,371.8"/><polygon class="p" points="508.2,372.9 512.5,374.4 518.2,373.2 513.9,371.7"/><polygon points="649.2,380.4 654.6,382.1 659.3,381.7 653.9,380.0" fill="#feeda4"/><polygon points="447.9,351.2 451.6,350.7 457.8,351.1 454.1,351.5" fill="#e34832"/><polygon points="523.4,356.2 527.8,356.4 533.4,357.3 529.1,357.1" fill="#f36b42"/><polygon class="p" points="629.1,373.0 634.4,374.5 639.2,373.3 634.0,371.8"/><polygon class="p" points="452.8,373.0 456.6,374.5 462.7,373.2 458.8,371.8"/><polygon class="p" points="750.1,373.1 756.4,374.6 760.4,373.4 754.1,371.9"/><polygon class="p" points="573.7,373.1 578.5,374.6 583.7,373.3 578.9,371.9"/><polygon points="659.3,381.7 664.8,384.0 669.4,383.6 663.9,381.3" fill="#fff2ab"/><polygon points="749.9,411.9 755.9,417.7 759.9,416.7 753.9,410.9" fill="#81b7d6"/><polygon points="533.4,357.3 537.9,357.5 543.5,358.9 539.0,358.7" fill="#f57346"/><polygon class="p" points="694.7,373.2 700.5,374.7 704.9,373.4 699.1,372.0"/><polygon class="p" points="518.2,373.2 522.5,374.6 528.2,373.4 523.8,372.0"/><polygon points="669.4,383.6 675.0,386.2 679.5,385.8 674.0,383.1" fill="#fff8b4"/><polygon points="740.0,407.1 745.9,412.8 749.9,411.9 744.0,406.3" fill="#9ccde2"/><polygon points="457.8,351.1 461.6,350.7 467.7,351.2 463.9,351.5" fill="#e24732"/><polygon class="p" points="639.2,373.3 644.6,374.7 649.4,373.5 644.0,372.1"/><polygon class="p" points="462.7,373.2 466.5,374.7 472.6,373.5 468.7,372.0"/><polygon points="543.5,358.9 548.0,359.1 553.5,361.2 549.0,360.9" fill="#f67f4b"/><polygon points="679.5,385.8 685.2,388.9 689.6,388.5 684.0,385.3" fill="#ffffbf"/><polygon points="729.9,402.5 735.8,407.9 740.0,407.1 734.1,401.8" fill="#b6deec"/><polygon class="p" points="760.4,373.4 766.7,374.8 770.7,373.6 764.3,372.2"/><polygon class="p" points="583.7,373.3 588.6,374.8 593.8,373.6 588.9,372.1"/><polygon points="689.6,388.5 695.3,392.0 699.7,391.6 694.1,387.9" fill="#f6fbd0"/><polygon points="553.5,361.2 558.2,361.6 563.6,364.1 558.9,363.5" fill="#f99053"/><polygon points="719.9,398.4 725.8,403.3 729.9,402.5 724.1,397.7" fill="#ceeaf3"/><polygon points="699.7,391.6 705.5,395.4 709.8,394.8 704.1,390.9" fill="#ecf8e2"/><polygon points="709.8,394.8 715.6,399.1 719.9,398.4 714.1,394.1" fill="#e1f4f5"/><polygon points="563.6,364.1 568.3,364.7 573.7,367.0 568.9,366.3" fill="#fba25c"/><polygon class="p" points="704.9,373.4 710.8,374.9 715.1,373.7 709.2,372.2"/><polygon class="p" points="528.2,373.4 532.6,374.9 538.2,373.6 533.7,372.2"/><polygon points="573.7,367.0 578.5,367.9 583.7,369.7 578.9,368.8" fill="#fdb366"/><polygon points="467.7,351.2 471.6,351.0 477.7,351.6 473.8,351.8" fill="#e24832"/><polygon class="p" points="649.4,373.5 654.8,375.0 659.6,373.7 654.1,372.3"/><polygon class="p" points="472.6,373.5 476.6,374.9 482.5,373.7 478.5,372.3"/><polygon points="583.7,369.7 588.6,370.6 593.8,372.6 588.9,371.7" fill="#fdc173"/><polygon points="593.8,372.6 598.8,373.4 603.9,375.3 598.9,374.6" fill="#fecf80"/><polygon class="p" points="593.8,373.6 598.8,375.0 603.9,373.8 598.9,372.4"/><polygon points="603.9,375.3 609.0,376.0 614.0,377.5 608.9,376.9" fill="#fedb8b"/><polygon class="p" points="715.1,373.7 721.1,375.1 725.4,373.9 719.4,372.4"/><polygon class="p" points="538.2,373.6 542.7,375.1 548.2,373.9 543.7,372.4"/><polygon points="477.7,351.6 481.6,351.6 487.6,352.4 483.6,352.3" fill="#e44a33"/><polygon class="p" points="659.6,373.7 665.1,375.2 669.8,374.0 664.2,372.5"/><polygon class="p" points="482.5,373.7 486.6,375.2 492.5,373.9 488.4,372.5"/><polygon points="614.0,377.5 619.2,378.1 624.1,378.9 619.0,378.4" fill="#fee293"/><polygon class="p" points="603.9,373.8 609.0,375.3 614.0,374.0 609.0,372.6"/><polygon points="487.6,352.4 491.7,352.6 497.7,353.4 493.6,353.2" fill="#e64f35"/><polygon class="p" points="725.4,373.9 731.5,375.4 735.7,374.1 729.6,372.7"/><polygon class="p" points="548.2,373.9 552.8,375.3 558.3,374.1 553.7,372.7"/><polygon points="624.1,378.9 629.4,379.7 634.3,380.0 629.0,379.2" fill="#fee598"/><polygon class="p" points="669.8,374.0 675.4,375.4 680.0,374.2 674.3,372.7"/><polygon class="p" points="492.5,373.9 496.6,375.4 502.5,374.2 498.3,372.7"/><polygon class="p" points="614.0,374.0 619.2,375.5 624.2,374.3 619.0,372.8"/><polygon points="497.7,353.4 501.8,353.8 507.7,354.5 503.5,354.2" fill="#e85538"/><polygon class="p" points="436.7,374.0 440.4,375.5 446.6,374.2 442.9,372.8"/><polygon points="431.8,351.6 435.3,350.6 441.7,350.9 438.1,351.7" fill="#e04330"/><polygon points="634.3,380.0 639.6,381.1 644.5,380.8 639.1,379.6" fill="#fee89c"/><polygon class="p" points="735.7,374.1 741.9,375.6 746.0,374.4 739.8,372.9"/><polygon class="p" points="558.3,374.1 563.0,375.6 568.4,374.3 563.7,372.9"/><polygon class="p" points="680.0,374.2 685.7,375.7 690.2,374.4 684.5,373.0"/><polygon class="p" points="502.5,374.2 506.7,375.6 512.5,374.4 508.2,372.9"/><polygon points="507.7,354.5 511.9,354.8 517.7,355.5 513.5,355.1" fill="#eb5a3a"/><polygon class="p" points="624.2,374.3 629.5,375.7 634.4,374.5 629.1,373.0"/><polygon points="644.5,380.8 649.9,382.5 654.6,382.1 649.2,380.4" fill="#feeaa0"/><polygon class="p" points="446.6,374.2 450.4,375.7 456.6,374.5 452.8,373.0"/><polygon class="p" points="746.0,374.4 752.3,375.8 756.4,374.6 750.1,373.1"/><polygon points="441.7,350.9 445.3,350.3 451.6,350.7 447.9,351.2" fill="#de3f2e"/><polygon class="p" points="568.4,374.3 573.2,375.8 578.5,374.6 573.7,373.1"/><polygon points="517.7,355.5 522.1,355.7 527.8,356.4 523.4,356.2" fill="#ed5f3c"/><polygon points="745.9,412.8 751.9,418.7 755.9,417.7 749.9,411.9" fill="#84bad8"/><polygon points="654.6,382.1 660.1,384.3 664.8,384.0 659.3,381.7" fill="#feefa7"/><polygon class="p" points="690.2,374.4 696.0,375.9 700.5,374.7 694.7,373.2"/><polygon class="p" points="512.5,374.4 516.8,375.9 522.5,374.6 518.2,373.2"/><polygon class="p" points="634.4,374.5 639.7,376.0 644.6,374.7 639.2,373.3"/><polygon points="735.8,407.9 741.8,413.7 745.9,412.8 740.0,407.1" fill="#a0d0e4"/><polygon class="p" points="456.6,374.5 460.4,375.9 466.5,374.7 462.7,373.2"/><polygon points="664.8,384.0 670.4,386.6 675.0,386.2 669.4,383.6" fill="#fff5b0"/><polygon points="527.8,356.4 532.2,356.5 537.9,357.5 533.4,357.3" fill="#f0643f"/><polygon class="p" points="756.4,374.6 762.7,376.1 766.7,374.8 760.4,373.4"/><polygon class="p" points="578.5,374.6 583.4,376.0 588.6,374.8 583.7,373.3"/><polygon points="725.8,403.3 731.7,408.7 735.8,407.9 729.9,402.5" fill="#bae0ed"/><polygon points="675.0,386.2 680.6,389.3 685.2,388.9 679.5,385.8" fill="#fffcbb"/><polygon points="451.6,350.7 455.3,350.2 461.6,350.7 457.8,351.1" fill="#dd3d2d"/><polygon points="685.2,388.9 690.9,392.4 695.3,392.0 689.6,388.5" fill="#f9fdca"/><polygon points="715.6,399.1 721.5,404.0 725.8,403.3 719.9,398.4" fill="#d2ecf4"/><polygon class="p" points="700.5,374.7 706.4,376.1 710.8,374.9 704.9,373.4"/><polygon class="p" points="522.5,374.6 527.0,376.1 532.6,374.9 528.2,373.4"/><polygon points="695.3,392.0 701.1,395.7 705.5,395.4 699.7,391.6" fill="#eff9dc"/><polygon points="705.5,395.4 711.3,399.6 715.6,399.1 709.8,394.8" fill="#e4f5f1"/><polygon points="537.9,357.5 542.4,357.6 548.0,359.1 543.5,358.9" fill="#f36b42"/><polygon class="p" points="644.6,374.7 650.0,376.2 654.8,375.0 649.4,373.5"/><polygon class="p" points="466.5,374.7 470.5,376.2 476.6,374.9 472.6,373.5"/><polygon class="p" points="588.6,374.8 593.6,376.3 598.8,375.0 593.8,373.6"/><polygon points="461.6,350.7 465.4,350.4 471.6,351.0 467.7,351.2" fill="#dd3d2d"/><polygon points="548.0,359.1 552.6,359.4 558.2,361.6 553.5,361.2" fill="#f57848"/><polygon points="558.2,361.6 562.9,362.2 568.3,364.7 563.6,364.1" fill="#f88a50"/><polygon class="p" points="710.8,374.9 716.8,376.4 721.1,375.1 715.1,373.7"/><polygon class="p" points="532.6,374.9 537.1,376.3 542.7,375.1 538.2,373.6"/><polygon points="568.3,364.7 573.1,365.6 578.5,367.9 573.7,367.0" fill="#fb9e5a"/><polygon points="578.5,367.9 583.4,368.9 588.6,370.6 583.7,369.7" fill="#fdb063"/><polygon class="p" points="654.8,375.0 660.4,376.4 665.1,375.2 659.6,373.7"/><polygon class="p" points="476.6,374.9 480.6,376.4 486.6,375.2 482.5,373.7"/><polygon points="588.6,370.6 593.6,371.6 598.8,373.4 593.8,372.6" fill="#fdbe70"/><polygon points="471.6,351.0 475.5,350.9 481.6,351.6 477.7,351.6" fill="#de3f2e"/><polygon class="p" points="598.8,375.0 603.9,376.5 609.0,375.3 603.9,373.8"/><polygon points="598.8,373.4 603.9,374.3 609.0,376.0 603.9,375.3" fill="#fecb7c"/><polygon class="p" points="721.1,375.1 727.2,376.6 731.5,375.4 725.4,373.9"/><polygon class="p" points="542.7,375.1 547.3,376.6 552.8,375.3 548.2,373.9"/><polygon points="609.0,376.0 614.2,376.7 619.2,378.1 614.0,377.5" fill="#fed687"/><polygon class="p" points="665.1,375.2 670.7,376.7 675.4,375.4 669.8,374.0"/><polygon class="p" points="486.6,375.2 490.7,376.7 496.6,375.4 492.5,373.9"/><polygon points="481.6,351.6 485.7,351.7 491.7,352.6 487.6,352.4" fill="#e04330"/><polygon class="p" points="609.0,375.3 614.2,376.8 619.2,375.5 614.0,374.0"/><polygon points="619.2,378.1 624.4,378.9 629.4,379.7 624.1,378.9" fill="#fedf8f"/><polygon class="p" points="731.5,375.4 737.7,376.9 741.9,375.6 735.7,374.1"/><polygon class="p" points="552.8,375.3 557.5,376.8 563.0,375.6 558.3,374.1"/><polygon points="491.7,352.6 495.9,352.9 501.8,353.8 497.7,353.4" fill="#e34832"/><polygon points="629.4,379.7 634.7,380.8 639.6,381.1 634.3,380.0" fill="#fee395"/><polygon class="p" points="675.4,375.4 681.1,376.9 685.7,375.7 680.0,374.2"/><polygon class="p" points="496.6,375.4 500.9,376.9 506.7,375.6 502.5,374.2"/><polygon class="p" points="619.2,375.5 624.5,377.0 629.5,375.7 624.2,374.3"/><polygon class="p" points="440.4,375.5 444.1,377.0 450.4,375.7 446.6,374.2"/><polygon points="501.8,353.8 506.1,354.1 511.9,354.8 507.7,354.5" fill="#e54e35"/><polygon points="639.6,381.1 645.1,382.7 649.9,382.5 644.5,380.8" fill="#fee79b"/><polygon class="p" points="741.9,375.6 748.2,377.1 752.3,375.8 746.0,374.4"/><polygon class="p" points="563.0,375.6 567.8,377.1 573.2,375.8 568.4,374.3"/><polygon class="p" points="685.7,375.7 691.5,377.2 696.0,375.9 690.2,374.4"/><polygon class="p" points="506.7,375.6 511.0,377.1 516.8,375.9 512.5,374.4"/><polygon points="435.3,350.6 438.9,349.9 445.3,350.3 441.7,350.9" fill="#da362a"/><polygon points="741.8,413.7 747.8,419.8 751.9,418.7 745.9,412.8" fill="#87bcd9"/><polygon points="649.9,382.5 655.4,384.6 660.1,384.3 654.6,382.1" fill="#feeca2"/><polygon class="p" points="629.5,375.7 634.8,377.2 639.7,376.0 634.4,374.5"/><polygon class="p" points="450.4,375.7 454.2,377.2 460.4,375.9 456.6,374.5"/><polygon points="511.9,354.8 516.3,355.0 522.1,355.7 517.7,355.5" fill="#e85337"/><polygon points="731.7,408.7 737.6,414.6 741.8,413.7 735.8,407.9" fill="#a3d3e6"/><polygon class="p" points="752.3,375.8 758.7,377.3 762.7,376.1 756.4,374.6"/><polygon class="p" points="573.2,375.8 578.0,377.3 583.4,376.0 578.5,374.6"/><polygon points="660.1,384.3 665.7,386.9 670.4,386.6 664.8,384.0" fill="#fff2ab"/><polygon points="721.5,404.0 727.4,409.5 731.7,408.7 725.8,403.3" fill="#bee2ee"/><polygon class="p" points="696.0,375.9 702.0,377.4 706.4,376.1 700.5,374.7"/><polygon class="p" points="516.8,375.9 521.2,377.4 527.0,376.1 522.5,374.6"/><polygon points="670.4,386.6 676.0,389.5 680.6,389.3 675.0,386.2" fill="#fff9b6"/><polygon points="445.3,350.3 449.0,349.7 455.3,350.2 451.6,350.7" fill="#d93429"/><polygon points="711.3,399.6 717.2,404.6 721.5,404.0 715.6,399.1" fill="#d6eef5"/><polygon points="522.1,355.7 526.5,355.7 532.2,356.5 527.8,356.4" fill="#ea5739"/><polygon points="680.6,389.3 686.4,392.6 690.9,392.4 685.2,388.9" fill="#fcfec4"/><polygon class="p" points="639.7,376.0 645.2,377.5 650.0,376.2 644.6,374.7"/><polygon points="701.1,395.7 707.0,399.9 711.3,399.6 705.5,395.4" fill="#e7f6eb"/><polygon points="690.9,392.4 696.7,396.0 701.1,395.7 695.3,392.0" fill="#f2fad6"/><polygon class="p" points="460.4,375.9 464.4,377.4 470.5,376.2 466.5,374.7"/><polygon class="p" points="583.4,376.0 588.3,377.5 593.6,376.3 588.6,374.8"/><polygon class="p" points="706.4,376.1 712.4,377.6 716.8,376.4 710.8,374.9"/><polygon points="532.2,356.5 536.8,356.6 542.4,357.6 537.9,357.5" fill="#ec5c3b"/><polygon class="p" points="527.0,376.1 531.5,377.6 537.1,376.3 532.6,374.9"/><polygon points="455.3,350.2 459.2,349.7 465.4,350.4 461.6,350.7" fill="#d83228"/><polygon class="p" points="650.0,376.2 655.6,377.7 660.4,376.4 654.8,375.0"/><polygon class="p" points="470.5,376.2 474.5,377.7 480.6,376.4 476.6,374.9"/><polygon points="542.4,357.6 547.0,357.9 552.6,359.4 548.0,359.1" fill="#f0643f"/><polygon class="p" points="593.6,376.3 598.7,377.8 603.9,376.5 598.8,375.0"/><polygon class="p" points="716.8,376.4 722.9,377.9 727.2,376.6 721.1,375.1"/><polygon points="552.6,359.4 557.3,360.0 562.9,362.2 558.2,361.6" fill="#f57245"/><polygon class="p" points="537.1,376.3 541.7,377.9 547.3,376.6 542.7,375.1"/><polygon points="562.9,362.2 567.7,363.1 573.1,365.6 568.3,364.7" fill="#f7864e"/><polygon points="465.4,350.4 469.3,350.1 475.5,350.9 471.6,351.0" fill="#d93329"/><polygon points="573.1,365.6 578.0,366.7 583.4,368.9 578.5,367.9" fill="#fa9b58"/><polygon class="p" points="660.4,376.4 666.0,378.0 670.7,376.7 665.1,375.2"/><polygon class="p" points="480.6,376.4 484.7,377.9 490.7,376.7 486.6,375.2"/><polygon points="583.4,368.9 588.4,369.9 593.6,371.6 588.6,370.6" fill="#fdae61"/><polygon class="p" points="603.9,376.5 609.0,378.0 614.2,376.8 609.0,375.3"/><polygon points="593.6,371.6 598.7,372.5 603.9,374.3 598.8,373.4" fill="#fdbb6d"/><polygon class="p" points="727.2,376.6 733.4,378.1 737.7,376.9 731.5,375.4"/><polygon points="603.9,374.3 609.0,375.2 614.2,376.7 609.0,376.0" fill="#fec779"/><polygon class="p" points="547.3,376.6 552.0,378.1 557.5,376.8 552.8,375.3"/><polygon points="475.5,350.9 479.5,350.9 485.7,351.7 481.6,351.6" fill="#da372a"/><polygon class="p" points="670.7,376.7 676.5,378.2 681.1,376.9 675.4,375.4"/><polygon class="p" points="490.7,376.7 494.9,378.2 500.9,376.9 496.6,375.4"/><polygon points="614.2,376.7 619.4,377.6 624.4,378.9 619.2,378.1" fill="#fed283"/><polygon class="p" points="614.2,376.8 619.4,378.3 624.5,377.0 619.2,375.5"/><polygon points="485.7,351.7 489.8,352.0 495.9,352.9 491.7,352.6" fill="#dd3c2c"/><polygon points="624.4,378.9 629.8,380.0 634.7,380.8 629.4,379.7" fill="#fedc8c"/><polygon class="p" points="737.7,376.9 744.0,378.4 748.2,377.1 741.9,375.6"/><polygon class="p" points="557.5,376.8 562.3,378.3 567.8,377.1 563.0,375.6"/><polygon class="p" points="681.1,376.9 686.9,378.4 691.5,377.2 685.7,375.7"/><polygon class="p" points="500.9,376.9 505.2,378.4 511.0,377.1 506.7,375.6"/><polygon points="634.7,380.8 640.2,382.4 645.1,382.7 639.6,381.1" fill="#fee394"/><polygon points="495.9,352.9 500.1,353.3 506.1,354.1 501.8,353.8" fill="#e0422f"/><polygon points="737.6,414.6 743.7,420.8 747.8,419.8 741.8,413.7" fill="#8bbfdb"/><polygon class="p" points="624.5,377.0 629.8,378.5 634.8,377.2 629.5,375.7"/><polygon class="p" points="444.1,377.0 447.9,378.5 454.2,377.2 450.4,375.7"/><polygon points="645.1,382.7 650.6,384.7 655.4,384.6 649.9,382.5" fill="#fee89c"/><polygon class="p" points="748.2,377.1 754.6,378.6 758.7,377.3 752.3,375.8"/><polygon class="p" points="567.8,377.1 572.6,378.6 578.0,377.3 573.2,375.8"/><polygon points="727.4,409.5 733.4,415.5 737.6,414.6 731.7,408.7" fill="#a7d6e7"/><polygon points="506.1,354.1 510.4,354.3 516.3,355.0 511.9,354.8" fill="#e24832"/><polygon class="p" points="691.5,377.2 697.4,378.7 702.0,377.4 696.0,375.9"/><polygon points="655.4,384.6 661.0,387.1 665.7,386.9 660.1,384.3" fill="#feeea5"/><polygon class="p" points="511.0,377.1 515.4,378.7 521.2,377.4 516.8,375.9"/><polygon points="717.2,404.6 723.1,410.3 727.4,409.5 721.5,404.0" fill="#c2e4f0"/><polygon class="p" points="634.8,377.2 640.2,378.8 645.2,377.5 639.7,376.0"/><polygon points="665.7,386.9 671.4,389.7 676.0,389.5 670.4,386.6" fill="#fff5b1"/><polygon class="p" points="454.2,377.2 458.1,378.7 464.4,377.4 460.4,375.9"/><polygon points="707.0,399.9 712.8,405.1 717.2,404.6 711.3,399.6" fill="#dcf1f7"/><polygon points="676.0,389.5 681.8,392.8 686.4,392.6 680.6,389.3" fill="#fffebe"/><polygon points="438.9,349.9 442.6,349.2 449.0,349.7 445.3,350.3" fill="#d22b27"/><polygon class="p" points="578.0,377.3 583.0,378.8 588.3,377.5 583.4,376.0"/><polygon points="696.7,396.0 702.5,400.2 707.0,399.9 701.1,395.7" fill="#ebf7e4"/><polygon points="686.4,392.6 692.2,396.1 696.7,396.0 690.9,392.4" fill="#f6fccf"/><polygon points="516.3,355.0 520.7,355.1 526.5,355.7 522.1,355.7" fill="#e44b34"/><polygon class="p" points="702.0,377.4 708.0,378.9 712.4,377.6 706.4,376.1"/><polygon class="p" points="521.2,377.4 525.7,378.9 531.5,377.6 527.0,376.1"/><polygon class="p" points="645.2,377.5 650.7,379.0 655.6,377.7 650.0,376.2"/><polygon class="p" points="464.4,377.4 468.4,379.0 474.5,377.7 470.5,376.2"/><polygon points="526.5,355.7 531.0,355.7 536.8,356.6 532.2,356.5" fill="#e64f35"/><polygon class="p" points="588.3,377.5 593.4,379.1 598.7,377.8 593.6,376.3"/><polygon points="449.0,349.7 452.8,349.1 459.2,349.7 455.3,350.2" fill="#d02a27"/><polygon class="p" points="712.4,377.6 718.5,379.2 722.9,377.9 716.8,376.4"/><polygon class="p" points="531.5,377.6 536.0,379.1 541.7,377.9 537.1,376.3"/><polygon class="p" points="655.6,377.7 661.2,379.2 666.0,378.0 660.4,376.4"/><polygon points="536.8,356.6 541.4,356.8 547.0,357.9 542.4,357.6" fill="#e85438"/><polygon class="p" points="474.5,377.7 478.6,379.2 484.7,377.9 480.6,376.4"/><polygon class="p" points="598.7,377.8 603.8,379.3 609.0,378.0 603.9,376.5"/><polygon points="459.2,349.7 463.0,349.4 469.3,350.1 465.4,350.4" fill="#d12a27"/><polygon points="547.0,357.9 551.7,358.4 557.3,360.0 552.6,359.4" fill="#ed5e3c"/><polygon class="p" points="722.9,377.9 729.1,379.4 733.4,378.1 727.2,376.6"/><polygon class="p" points="541.7,377.9 546.4,379.4 552.0,378.1 547.3,376.6"/><polygon points="557.3,360.0 562.1,360.9 567.7,363.1 562.9,362.2" fill="#f46d43"/><polygon points="567.7,363.1 572.6,364.3 578.0,366.7 573.1,365.6" fill="#f7834d"/><polygon class="p" points="666.0,378.0 671.7,379.5 676.5,378.2 670.7,376.7"/><polygon points="578.0,366.7 583.0,367.8 588.4,369.9 583.4,368.9" fill="#fa9857"/><polygon class="p" points="484.7,377.9 488.9,379.5 494.9,378.2 490.7,376.7"/><polygon points="588.4,369.9 593.4,371.0 598.7,372.5 593.6,371.6" fill="#fdab5f"/><polygon points="469.3,350.1 473.3,350.1 479.5,350.9 475.5,350.9" fill="#d32c27"/><polygon class="p" points="609.0,378.0 614.3,379.6 619.4,378.3 614.2,376.8"/><polygon points="598.7,372.5 603.9,373.6 609.0,375.2 603.9,374.3" fill="#fdb86b"/><polygon class="p" points="733.4,378.1 739.8,379.7 744.0,378.4 737.7,376.9"/><polygon class="p" points="552.0,378.1 556.8,379.6 562.3,378.3 557.5,376.8"/><polygon points="609.0,375.2 614.3,376.2 619.4,377.6 614.2,376.7" fill="#fdc476"/><polygon class="p" points="676.5,378.2 682.3,379.7 686.9,378.4 681.1,376.9"/><polygon class="p" points="494.9,378.2 499.2,379.7 505.2,378.4 500.9,376.9"/><polygon points="479.5,350.9 483.6,351.1 489.8,352.0 485.7,351.7" fill="#d62f27"/><polygon points="619.4,377.6 624.8,378.9 629.8,380.0 624.4,378.9" fill="#fed081"/><polygon class="p" points="619.4,378.3 624.7,379.8 629.8,378.5 624.5,377.0"/><polygon points="733.4,415.5 739.5,422.0 743.7,420.8 737.6,414.6" fill="#8ec2dc"/><polygon points="629.8,380.0 635.2,381.6 640.2,382.4 634.7,380.8" fill="#fedb8b"/><polygon class="p" points="744.0,378.4 750.4,379.9 754.6,378.6 748.2,377.1"/><polygon class="p" points="562.3,378.3 567.2,379.9 572.6,378.6 567.8,377.1"/><polygon points="489.8,352.0 494.0,352.5 500.1,353.3 495.9,352.9" fill="#da362a"/><polygon points="723.1,410.3 729.1,416.5 733.4,415.5 727.4,409.5" fill="#abd9e9"/><polygon points="640.2,382.4 645.7,384.4 650.6,384.7 645.1,382.7" fill="#fee496"/><polygon class="p" points="686.9,378.4 692.9,380.0 697.4,378.7 691.5,377.2"/><polygon class="p" points="505.2,378.4 509.5,380.0 515.4,378.7 511.0,377.1"/><polygon class="p" points="629.8,378.5 635.2,380.1 640.2,378.8 634.8,377.2"/><polygon points="650.6,384.7 656.2,387.2 661.0,387.1 655.4,384.6" fill="#feeaa0"/><polygon class="p" points="447.9,378.5 451.8,380.0 458.1,378.7 454.2,377.2"/><polygon points="712.8,405.1 718.8,411.0 723.1,410.3 717.2,404.6" fill="#c7e7f1"/><polygon points="500.1,353.3 504.4,353.7 510.4,354.3 506.1,354.1" fill="#dd3c2d"/><polygon class="p" points="572.6,378.6 577.6,380.1 583.0,378.8 578.0,377.3"/><polygon points="661.0,387.1 666.6,389.9 671.4,389.7 665.7,386.9" fill="#fff2ab"/><polygon points="702.5,400.2 708.4,405.4 712.8,405.1 707.0,399.9" fill="#e1f3f6"/><polygon points="671.4,389.7 677.1,392.9 681.8,392.8 676.0,389.5" fill="#fffab8"/><polygon class="p" points="697.4,378.7 703.5,380.2 708.0,378.9 702.0,377.4"/><polygon class="p" points="515.4,378.7 519.9,380.2 525.7,378.9 521.2,377.4"/><polygon points="692.2,396.1 698.0,400.3 702.5,400.2 696.7,396.0" fill="#eff9dc"/><polygon points="681.8,392.8 687.6,396.2 692.2,396.1 686.4,392.6" fill="#fafdc8"/><polygon points="510.4,354.3 514.8,354.5 520.7,355.1 516.3,355.0" fill="#df402e"/><polygon class="p" points="640.2,378.8 645.8,380.3 650.7,379.0 645.2,377.5"/><polygon class="p" points="458.1,378.7 462.1,380.3 468.4,379.0 464.4,377.4"/><polygon class="p" points="583.0,378.8 588.0,380.4 593.4,379.1 588.3,377.5"/><polygon class="p" points="708.0,378.9 714.1,380.5 718.5,379.2 712.4,377.6"/><polygon class="p" points="525.7,378.9 530.3,380.5 536.0,379.1 531.5,377.6"/><polygon points="520.7,355.1 525.2,355.1 531.0,355.7 526.5,355.7" fill="#e04330"/><polygon points="442.6,349.2 446.3,348.5 452.8,349.1 449.0,349.7" fill="#c82227"/><polygon class="p" points="650.7,379.0 656.3,380.6 661.2,379.2 655.6,377.7"/><polygon class="p" points="468.4,379.0 472.4,380.5 478.6,379.2 474.5,377.7"/><polygon class="p" points="593.4,379.1 598.5,380.6 603.8,379.3 598.7,377.8"/><polygon points="531.0,355.7 535.6,355.9 541.4,356.8 536.8,356.6" fill="#e24732"/><polygon class="p" points="718.5,379.2 724.8,380.7 729.1,379.4 722.9,377.9"/><polygon class="p" points="536.0,379.1 540.7,380.7 546.4,379.4 541.7,377.9"/><polygon points="452.8,349.1 456.6,348.6 463.0,349.4 459.2,349.7" fill="#c72127"/><polygon class="p" points="661.2,379.2 666.9,380.8 671.7,379.5 666.0,378.0"/><polygon class="p" points="478.6,379.2 482.8,380.8 488.9,379.5 484.7,377.9"/><polygon points="541.4,356.8 546.0,357.2 551.7,358.4 547.0,357.9" fill="#e54e35"/><polygon class="p" points="603.8,379.3 609.1,380.9 614.3,379.6 609.0,378.0"/><polygon class="p" points="729.1,379.4 735.5,381.0 739.8,379.7 733.4,378.1"/><polygon class="p" points="546.4,379.4 551.1,381.0 556.8,379.6 552.0,378.1"/><polygon points="551.7,358.4 556.5,359.3 562.1,360.9 557.3,360.0" fill="#eb5a3a"/><polygon points="463.0,349.4 467.0,349.2 473.3,350.1 469.3,350.1" fill="#c92227"/><polygon points="562.1,360.9 567.0,362.2 572.6,364.3 567.7,363.1" fill="#f36b42"/><polygon class="p" points="671.7,379.5 677.6,381.1 682.3,379.7 676.5,378.2"/><polygon points="572.6,364.3 577.5,365.6 583.0,367.8 578.0,366.7" fill="#f7814c"/><polygon class="p" points="488.9,379.5 493.1,381.0 499.2,379.7 494.9,378.2"/><polygon points="583.0,367.8 588.1,369.0 593.4,371.0 588.4,369.9" fill="#fa9656"/><polygon class="p" points="614.3,379.6 619.6,381.1 624.7,379.8 619.4,378.3"/><polygon points="593.4,371.0 598.6,372.1 603.9,373.6 598.7,372.5" fill="#fca85e"/><polygon points="729.1,416.5 735.2,423.2 739.5,422.0 733.4,415.5" fill="#91c4de"/><polygon points="473.3,350.1 477.4,350.3 483.6,351.1 479.5,350.9" fill="#cc2627"/><polygon class="p" points="739.8,379.7 746.2,381.2 750.4,379.9 744.0,378.4"/><polygon points="603.9,373.6 609.1,374.8 614.3,376.2 609.0,375.2" fill="#fdb668"/><polygon class="p" points="556.8,379.6 561.6,381.2 567.2,379.9 562.3,378.3"/><polygon points="614.3,376.2 619.6,377.5 624.8,378.9 619.4,377.6" fill="#fdc274"/><polygon class="p" points="682.3,379.7 688.2,381.3 692.9,380.0 686.9,378.4"/><polygon class="p" points="499.2,379.7 503.5,381.3 509.5,380.0 505.2,378.4"/><polygon points="718.8,411.0 724.8,417.5 729.1,416.5 723.1,410.3" fill="#afdbea"/><polygon points="624.8,378.9 630.2,380.5 635.2,381.6 629.8,380.0" fill="#fecf80"/><polygon points="483.6,351.1 487.8,351.7 494.0,352.5 489.8,352.0" fill="#d22b27"/><polygon class="p" points="624.7,379.8 630.2,381.4 635.2,380.1 629.8,378.5"/><polygon points="635.2,381.6 640.7,383.7 645.7,384.4 640.2,382.4" fill="#fedc8c"/><polygon points="708.4,405.4 714.4,411.6 718.8,411.0 712.8,405.1" fill="#cce9f2"/><polygon class="p" points="567.2,379.9 572.1,381.5 577.6,380.1 572.6,378.6"/><polygon points="645.7,384.4 651.3,386.9 656.2,387.2 650.6,384.7" fill="#fee699"/><polygon points="494.0,352.5 498.3,353.1 504.4,353.7 500.1,353.3" fill="#d73027"/><polygon class="p" points="692.9,380.0 698.9,381.6 703.5,380.2 697.4,378.7"/><polygon class="p" points="509.5,380.0 514.0,381.5 519.9,380.2 515.4,378.7"/><polygon points="656.2,387.2 661.8,389.9 666.6,389.9 661.0,387.1" fill="#feeea5"/><polygon points="698.0,400.3 703.9,405.8 708.4,405.4 702.5,400.2" fill="#e5f5ef"/><polygon points="666.6,389.9 672.4,393.0 677.1,392.9 671.4,389.7" fill="#fff6b1"/><polygon class="p" points="635.2,380.1 640.8,381.6 645.8,380.3 640.2,378.8"/><polygon class="p" points="451.8,380.0 455.8,381.6 462.1,380.3 458.1,378.7"/><polygon points="687.6,396.2 693.5,400.4 698.0,400.3 692.2,396.1" fill="#f3fad5"/><polygon points="677.1,392.9 683.0,396.3 687.6,396.2 681.8,392.8" fill="#feffc0"/><polygon class="p" points="577.6,380.1 582.6,381.7 588.0,380.4 583.0,378.8"/><polygon points="504.4,353.7 508.7,354.1 514.8,354.5 510.4,354.3" fill="#da352a"/><polygon class="p" points="703.5,380.2 709.6,381.8 714.1,380.5 708.0,378.9"/><polygon class="p" points="519.9,380.2 524.4,381.8 530.3,380.5 525.7,378.9"/><polygon class="p" points="645.8,380.3 651.4,381.9 656.3,380.6 650.7,379.0"/><polygon class="p" points="462.1,380.3 466.1,381.9 472.4,380.5 468.4,379.0"/><polygon points="514.8,354.5 519.2,354.7 525.2,355.1 520.7,355.1" fill="#db382b"/><polygon class="p" points="588.0,380.4 593.2,382.0 598.5,380.6 593.4,379.1"/><polygon class="p" points="714.1,380.5 720.3,382.1 724.8,380.7 718.5,379.2"/><polygon class="p" points="530.3,380.5 534.9,382.0 540.7,380.7 536.0,379.1"/><polygon class="p" points="656.3,380.6 662.1,382.1 666.9,380.8 661.2,379.2"/><polygon class="p" points="472.4,380.5 476.6,382.1 482.8,380.8 478.6,379.2"/><polygon points="525.2,355.1 529.7,355.3 535.6,355.9 531.0,355.7" fill="#dc3b2c"/><polygon class="p" points="598.5,380.6 603.8,382.2 609.1,380.9 603.8,379.3"/><polygon points="446.3,348.5 450.1,347.8 456.6,348.6 452.8,349.1" fill="#be1827"/><polygon class="p" points="724.8,380.7 731.1,382.3 735.5,381.0 729.1,379.4"/><polygon class="p" points="540.7,380.7 545.4,382.3 551.1,381.0 546.4,379.4"/><polygon points="535.6,355.9 540.2,356.3 546.0,357.2 541.4,356.8" fill="#df402f"/><polygon class="p" points="666.9,380.8 672.8,382.4 677.6,381.1 671.7,379.5"/><polygon class="p" points="482.8,380.8 487.0,382.4 493.1,381.0 488.9,379.5"/><polygon class="p" points="609.1,380.9 614.4,382.5 619.6,381.1 614.3,379.6"/><polygon points="456.6,348.6 460.6,348.4 467.0,349.2 463.0,349.4" fill="#bf1927"/><polygon points="546.0,357.2 550.8,358.1 556.5,359.3 551.7,358.4" fill="#e34a33"/><polygon class="p" points="735.5,381.0 741.9,382.6 746.2,381.2 739.8,379.7"/><polygon class="p" points="551.1,381.0 555.9,382.5 561.6,381.2 556.8,379.6"/><polygon points="724.8,417.5 730.8,424.5 735.2,423.2 729.1,416.5" fill="#94c6df"/><polygon points="556.5,359.3 561.4,360.7 567.0,362.2 562.1,360.9" fill="#ea5839"/><polygon points="567.0,362.2 572.0,363.6 577.5,365.6 572.6,364.3" fill="#f36a42"/><polygon class="p" points="677.6,381.1 683.5,382.6 688.2,381.3 682.3,379.7"/><polygon class="p" points="493.1,381.0 497.5,382.6 503.5,381.3 499.2,379.7"/><polygon points="577.5,365.6 582.6,366.9 588.1,369.0 583.0,367.8" fill="#f7804c"/><polygon points="467.0,349.2 471.0,349.4 477.4,350.3 473.3,350.1" fill="#c21c27"/><polygon points="588.1,369.0 593.2,370.3 598.6,372.1 593.4,371.0" fill="#f99455"/><polygon points="714.4,411.6 720.4,418.5 724.8,417.5 718.8,411.0" fill="#b3ddeb"/><polygon class="p" points="619.6,381.1 625.0,382.7 630.2,381.4 624.7,379.8"/><polygon points="598.6,372.1 603.8,373.4 609.1,374.8 603.9,373.6" fill="#fca55d"/><polygon class="p" points="561.6,381.2 566.5,382.8 572.1,381.5 567.2,379.9"/><polygon points="609.1,374.8 614.5,376.1 619.6,377.5 614.3,376.2" fill="#fdb467"/><polygon points="477.4,350.3 481.6,350.8 487.8,351.7 483.6,351.1" fill="#c82127"/><polygon points="703.9,405.8 709.9,412.3 714.4,411.6 708.4,405.4" fill="#d2ecf4"/><polygon points="619.6,377.5 625.1,379.2 630.2,380.5 624.8,378.9" fill="#fdc274"/><polygon class="p" points="688.2,381.3 694.2,382.9 698.9,381.6 692.9,380.0"/><polygon class="p" points="503.5,381.3 508.0,382.9 514.0,381.5 509.5,380.0"/><polygon points="630.2,380.5 635.7,382.7 640.7,383.7 635.2,381.6" fill="#fed182"/><polygon points="640.7,383.7 646.3,386.3 651.3,386.9 645.7,384.4" fill="#fee090"/><polygon class="p" points="630.2,381.4 635.7,383.0 640.8,381.6 635.2,380.1"/><polygon points="651.3,386.9 657.0,389.7 661.8,389.9 656.2,387.2" fill="#fee99e"/><polygon points="487.8,351.7 492.1,352.4 498.3,353.1 494.0,352.5" fill="#ce2727"/><polygon points="693.5,400.4 699.4,406.0 703.9,405.8 698.0,400.3" fill="#e9f7e7"/><polygon class="p" points="572.1,381.5 577.1,383.0 582.6,381.7 577.6,380.1"/><polygon points="661.8,389.9 667.6,393.0 672.4,393.0 666.6,389.9" fill="#fff2ab"/><polygon points="683.0,396.3 688.8,400.4 693.5,400.4 687.6,396.2" fill="#f8fccc"/><polygon points="672.4,393.0 678.2,396.3 683.0,396.3 677.1,392.9" fill="#fffbb9"/><polygon class="p" points="698.9,381.6 705.0,383.2 709.6,381.8 703.5,380.2"/><polygon class="p" points="514.0,381.5 518.5,383.1 524.4,381.8 519.9,380.2"/><polygon points="498.3,353.1 502.6,353.7 508.7,354.1 504.4,353.7" fill="#d32c27"/><polygon class="p" points="640.8,381.6 646.4,383.2 651.4,381.9 645.8,380.3"/><polygon class="p" points="455.8,381.6 459.8,383.2 466.1,381.9 462.1,380.3"/><polygon class="p" points="582.6,381.7 587.7,383.3 593.2,382.0 588.0,380.4"/><polygon class="p" points="709.6,381.8 715.8,383.4 720.3,382.1 714.1,380.5"/><polygon class="p" points="524.4,381.8 529.0,383.4 534.9,382.0 530.3,380.5"/><polygon points="508.7,354.1 513.2,354.5 519.2,354.7 514.8,354.5" fill="#d62f27"/><polygon class="p" points="651.4,381.9 657.1,383.5 662.1,382.1 656.3,380.6"/><polygon class="p" points="466.1,381.9 470.3,383.5 476.6,382.1 472.4,380.5"/><polygon class="p" points="593.2,382.0 598.4,383.6 603.8,382.2 598.5,380.6"/><polygon points="519.2,354.7 523.8,355.0 529.7,355.3 525.2,355.1" fill="#d73127"/><polygon class="p" points="720.3,382.1 726.7,383.7 731.1,382.3 724.8,380.7"/><polygon class="p" points="534.9,382.0 539.6,383.6 545.4,382.3 540.7,380.7"/><polygon class="p" points="662.1,382.1 667.9,383.7 672.8,382.4 666.9,380.8"/><polygon class="p" points="476.6,382.1 480.8,383.7 487.0,382.4 482.8,380.8"/><polygon class="p" points="603.8,382.2 609.1,383.8 614.4,382.5 609.1,380.9"/><polygon points="529.7,355.3 534.4,355.7 540.2,356.3 535.6,355.9" fill="#d93529"/><polygon class="p" points="731.1,382.3 737.5,383.9 741.9,382.6 735.5,381.0"/><polygon class="p" points="545.4,382.3 550.2,383.9 555.9,382.5 551.1,381.0"/><polygon points="720.4,418.5 726.4,425.8 730.8,424.5 724.8,417.5" fill="#96c9e0"/><polygon points="450.1,347.8 454.0,347.5 460.6,348.4 456.6,348.6" fill="#b51026"/><polygon class="p" points="672.8,382.4 678.7,384.0 683.5,382.6 677.6,381.1"/><polygon class="p" points="487.0,382.4 491.3,384.0 497.5,382.6 493.1,381.0"/><polygon points="540.2,356.3 545.0,357.2 550.8,358.1 546.0,357.2" fill="#dd3c2d"/><polygon class="p" points="614.4,382.5 619.8,384.1 625.0,382.7 619.6,381.1"/><polygon points="550.8,358.1 555.7,359.5 561.4,360.7 556.5,359.3" fill="#e34832"/><polygon points="709.9,412.3 715.9,419.5 720.4,418.5 714.4,411.6" fill="#b7dfec"/><polygon class="p" points="555.9,382.5 560.9,384.2 566.5,382.8 561.6,381.2"/><polygon points="460.6,348.4 464.6,348.6 471.0,349.4 467.0,349.2" fill="#b81326"/><polygon points="561.4,360.7 566.4,362.1 572.0,363.6 567.0,362.2" fill="#ea5839"/><polygon class="p" points="683.5,382.6 689.5,384.3 694.2,382.9 688.2,381.3"/><polygon points="572.0,363.6 577.1,365.0 582.6,366.9 577.5,365.6" fill="#f36a42"/><polygon class="p" points="497.5,382.6 501.9,384.2 508.0,382.9 503.5,381.3"/><polygon points="582.6,366.9 587.8,368.3 593.2,370.3 588.1,369.0" fill="#f67e4b"/><polygon points="593.2,370.3 598.5,371.6 603.8,373.4 598.6,372.1" fill="#f99254"/><polygon points="699.4,406.0 705.3,412.8 709.9,412.3 703.9,405.8" fill="#d8eff6"/><polygon class="p" points="625.0,382.7 630.5,384.3 635.7,383.0 630.2,381.4"/><polygon points="471.0,349.4 475.2,350.0 481.6,350.8 477.4,350.3" fill="#be1826"/><polygon points="603.8,373.4 609.2,374.8 614.5,376.1 609.1,374.8" fill="#fca45c"/><polygon class="p" points="566.5,382.8 571.5,384.4 577.1,383.0 572.1,381.5"/><polygon points="614.5,376.1 619.9,377.9 625.1,379.2 619.6,377.5" fill="#fdb467"/><polygon points="625.1,379.2 630.6,381.6 635.7,382.7 630.2,380.5" fill="#fdc476"/><polygon points="635.7,382.7 641.3,385.5 646.3,386.3 640.7,383.7" fill="#fed585"/><polygon points="688.8,400.4 694.8,406.2 699.4,406.0 693.5,400.4" fill="#eef8df"/><polygon class="p" points="694.2,382.9 700.4,384.5 705.0,383.2 698.9,381.6"/><polygon points="646.3,386.3 652.0,389.2 657.0,389.7 651.3,386.9" fill="#fee395"/><polygon class="p" points="508.0,382.9 512.5,384.5 518.5,383.1 514.0,381.5"/><polygon points="481.6,350.8 485.8,351.5 492.1,352.4 487.8,351.7" fill="#c41e27"/><polygon points="657.0,389.7 662.7,392.8 667.6,393.0 661.8,389.9" fill="#feeda4"/><polygon points="667.6,393.0 673.4,396.4 678.2,396.3 672.4,393.0" fill="#fff7b2"/><polygon points="678.2,396.3 684.1,400.5 688.8,400.4 683.0,396.3" fill="#fcfec4"/><polygon class="p" points="635.7,383.0 641.3,384.6 646.4,383.2 640.8,381.6"/><polygon class="p" points="577.1,383.0 582.2,384.7 587.7,383.3 582.6,381.7"/><polygon points="492.1,352.4 496.4,353.1 502.6,353.7 498.3,353.1" fill="#ca2427"/><polygon class="p" points="705.0,383.2 711.2,384.8 715.8,383.4 709.6,381.8"/><polygon class="p" points="518.5,383.1 523.1,384.8 529.0,383.4 524.4,381.8"/><polygon class="p" points="646.4,383.2 652.1,384.9 657.1,383.5 651.4,381.9"/><polygon class="p" points="459.8,383.2 463.9,384.8 470.3,383.5 466.1,381.9"/><polygon points="502.6,353.7 507.1,354.4 513.2,354.5 508.7,354.1" fill="#cf2827"/><polygon class="p" points="587.7,383.3 593.0,384.9 598.4,383.6 593.2,382.0"/><polygon class="p" points="715.8,383.4 722.2,385.0 726.7,383.7 720.3,382.1"/><polygon class="p" points="529.0,383.4 533.7,385.0 539.6,383.6 534.9,382.0"/><polygon class="p" points="657.1,383.5 663.0,385.1 667.9,383.7 662.1,382.1"/><polygon points="513.2,354.5 517.7,355.1 523.8,355.0 519.2,354.7" fill="#d12a27"/><polygon class="p" points="470.3,383.5 474.4,385.1 480.8,383.7 476.6,382.1"/><polygon class="p" points="598.4,383.6 603.7,385.2 609.1,383.8 603.8,382.2"/><polygon class="p" points="726.7,383.7 733.1,385.3 737.5,383.9 731.1,382.3"/><polygon class="p" points="539.6,383.6 544.4,385.3 550.2,383.9 545.4,382.3"/><polygon points="523.8,355.0 528.4,355.5 534.4,355.7 529.7,355.3" fill="#d32c27"/><polygon class="p" points="667.9,383.7 673.8,385.4 678.7,384.0 672.8,382.4"/><polygon points="715.9,419.5 721.9,427.1 726.4,425.8 720.4,418.5" fill="#99cbe1"/><polygon class="p" points="480.8,383.7 485.0,385.4 491.3,384.0 487.0,382.4"/><polygon class="p" points="609.1,383.8 614.5,385.5 619.8,384.1 614.4,382.5"/><polygon points="534.4,355.7 539.1,356.6 545.0,357.2 540.2,356.3" fill="#d73027"/><polygon class="p" points="550.2,383.9 555.1,385.5 560.9,384.2 555.9,382.5"/><polygon points="705.3,412.8 711.3,420.4 715.9,419.5 709.9,412.3" fill="#bce1ee"/><polygon class="p" points="678.7,384.0 684.7,385.6 689.5,384.3 683.5,382.6"/><polygon class="p" points="491.3,384.0 495.7,385.6 501.9,384.2 497.5,382.6"/><polygon points="545.0,357.2 549.9,358.6 555.7,359.5 550.8,358.1" fill="#dc3a2c"/><polygon points="454.0,347.5 458.0,347.8 464.6,348.6 460.6,348.4" fill="#af0926"/><polygon class="p" points="619.8,384.1 625.3,385.7 630.5,384.3 625.0,382.7"/><polygon points="555.7,359.5 560.6,361.0 566.4,362.1 561.4,360.7" fill="#e34832"/><polygon points="694.8,406.2 700.7,413.3 705.3,412.8 699.4,406.0" fill="#def2f8"/><polygon class="p" points="560.9,384.2 565.9,385.8 571.5,384.4 566.5,382.8"/><polygon points="566.4,362.1 571.4,363.6 577.1,365.0 572.0,363.6" fill="#ea5839"/><polygon points="464.6,348.6 468.7,349.3 475.2,350.0 471.0,349.4" fill="#b40e26"/><polygon class="p" points="689.5,384.3 695.6,385.9 700.4,384.5 694.2,382.9"/><polygon class="p" points="501.9,384.2 506.3,385.9 512.5,384.5 508.0,382.9"/><polygon points="577.1,365.0 582.2,366.4 587.8,368.3 582.6,366.9" fill="#f26941"/><polygon points="587.8,368.3 593.0,369.7 598.5,371.6 593.2,370.3" fill="#f67d4b"/><polygon points="684.1,400.5 690.1,406.4 694.8,406.2 688.8,400.4" fill="#f2fad7"/><polygon points="598.5,371.6 603.8,373.1 609.2,374.8 603.8,373.4" fill="#f99154"/><polygon class="p" points="630.5,384.3 636.2,386.0 641.3,384.6 635.7,383.0"/><polygon points="609.2,374.8 614.6,376.6 619.9,377.9 614.5,376.1" fill="#fca45c"/><polygon points="641.3,385.5 647.0,388.6 652.0,389.2 646.3,386.3" fill="#fedb8b"/><polygon points="630.6,381.6 636.2,384.5 641.3,385.5 635.7,382.7" fill="#fec97a"/><polygon points="619.9,377.9 625.4,380.4 630.6,381.6 625.1,379.2" fill="#fdb769"/><polygon points="652.0,389.2 657.8,392.5 662.7,392.8 657.0,389.7" fill="#fee89c"/><polygon points="475.2,350.0 479.4,350.9 485.8,351.5 481.6,350.8" fill="#ba1426"/><polygon points="673.4,396.4 679.4,400.6 684.1,400.5 678.2,396.3" fill="#fffdbc"/><polygon points="662.7,392.8 668.6,396.3 673.4,396.4 667.6,393.0" fill="#fff2ab"/><polygon class="p" points="571.5,384.4 576.6,386.1 582.2,384.7 577.1,383.0"/><polygon class="p" points="700.4,384.5 706.6,386.2 711.2,384.8 705.0,383.2"/><polygon class="p" points="512.5,384.5 517.0,386.1 523.1,384.8 518.5,383.1"/><polygon points="485.8,351.5 490.1,352.3 496.4,353.1 492.1,352.4" fill="#c11b27"/><polygon class="p" points="641.3,384.6 647.0,386.2 652.1,384.9 646.4,383.2"/><polygon class="p" points="582.2,384.7 587.4,386.3 593.0,384.9 587.7,383.3"/><polygon points="496.4,353.1 500.9,353.9 507.1,354.4 502.6,353.7" fill="#c72127"/><polygon class="p" points="711.2,384.8 717.6,386.4 722.2,385.0 715.8,383.4"/><polygon class="p" points="523.1,384.8 527.8,386.4 533.7,385.0 529.0,383.4"/><polygon class="p" points="652.1,384.9 658.0,386.5 663.0,385.1 657.1,383.5"/><polygon class="p" points="463.9,384.8 468.0,386.5 474.4,385.1 470.3,383.5"/><polygon points="507.1,354.4 511.6,355.2 517.7,355.1 513.2,354.5" fill="#cb2527"/><polygon class="p" points="593.0,384.9 598.3,386.6 603.7,385.2 598.4,383.6"/><polygon class="p" points="722.2,385.0 728.6,386.7 733.1,385.3 726.7,383.7"/><polygon class="p" points="533.7,385.0 538.5,386.7 544.4,385.3 539.6,383.6"/><polygon class="p" points="663.0,385.1 668.9,386.8 673.8,385.4 667.9,383.7"/><polygon class="p" points="474.4,385.1 478.7,386.8 485.0,385.4 480.8,383.7"/><polygon points="711.3,420.4 717.4,428.4 721.9,427.1 715.9,419.5" fill="#9ccde3"/><polygon points="517.7,355.1 522.4,355.8 528.4,355.5 523.8,355.0" fill="#cd2627"/><polygon class="p" points="603.7,385.2 609.1,386.9 614.5,385.5 609.1,383.8"/><polygon class="p" points="544.4,385.3 549.3,386.9 555.1,385.5 550.2,383.9"/><polygon class="p" points="673.8,385.4 679.9,387.0 684.7,385.6 678.7,384.0"/><polygon class="p" points="485.0,385.4 489.4,387.0 495.7,385.6 491.3,384.0"/><polygon points="700.7,413.3 706.7,421.2 711.3,420.4 705.3,412.8" fill="#c1e4ef"/><polygon points="528.4,355.5 533.1,356.5 539.1,356.6 534.4,355.7" fill="#cf2927"/><polygon class="p" points="614.5,385.5 620.0,387.1 625.3,385.7 619.8,384.1"/><polygon class="p" points="555.1,385.5 560.1,387.2 565.9,385.8 560.9,384.2"/><polygon points="539.1,356.6 544.0,358.0 549.9,358.6 545.0,357.2" fill="#d62f27"/><polygon points="690.1,406.4 696.0,413.7 700.7,413.3 694.8,406.2" fill="#e3f4f2"/><polygon class="p" points="684.7,385.6 690.9,387.3 695.6,385.9 689.5,384.3"/><polygon class="p" points="495.7,385.6 500.1,387.3 506.3,385.9 501.9,384.2"/><polygon points="549.9,358.6 554.8,360.0 560.6,361.0 555.7,359.5" fill="#dc3a2c"/><polygon class="p" points="625.3,385.7 630.9,387.4 636.2,386.0 630.5,384.3"/><polygon points="458.0,347.8 462.1,348.7 468.7,349.3 464.6,348.6" fill="#ab0526"/><polygon points="560.6,361.0 565.7,362.4 571.4,363.6 566.4,362.1" fill="#e34832"/><polygon class="p" points="565.9,385.8 570.9,387.5 576.6,386.1 571.5,384.4"/><polygon points="679.4,400.6 685.3,406.6 690.1,406.4 684.1,400.5" fill="#f6fccf"/><polygon points="571.4,363.6 576.6,365.1 582.2,366.4 577.1,365.0" fill="#ea5839"/><polygon class="p" points="695.6,385.9 701.9,387.6 706.6,386.2 700.4,384.5"/><polygon class="p" points="506.3,385.9 510.9,387.6 517.0,386.1 512.5,384.5"/><polygon points="582.2,366.4 587.4,367.9 593.0,369.7 587.8,368.3" fill="#f26941"/><polygon points="668.6,396.3 674.5,400.5 679.4,400.6 673.4,396.4" fill="#fff9b5"/><polygon points="468.7,349.3 472.9,350.4 479.4,350.9 475.2,350.0" fill="#b10c26"/><polygon points="657.8,392.5 663.6,396.1 668.6,396.3 662.7,392.8" fill="#feeda3"/><polygon points="647.0,388.6 652.8,392.1 657.8,392.5 652.0,389.2" fill="#fee292"/><polygon points="636.2,384.5 641.9,387.9 647.0,388.6 641.3,385.5" fill="#fed081"/><polygon points="593.0,369.7 598.3,371.2 603.8,373.1 598.5,371.6" fill="#f67d4a"/><polygon points="625.4,380.4 631.0,383.5 636.2,384.5 630.6,381.6" fill="#fdbc6e"/><polygon points="603.8,373.1 609.2,374.9 614.6,376.6 609.2,374.8" fill="#f99254"/><polygon points="614.6,376.6 620.1,379.2 625.4,380.4 619.9,377.9" fill="#fca85e"/><polygon class="p" points="636.2,386.0 641.9,387.7 647.0,386.2 641.3,384.6"/><polygon class="p" points="576.6,386.1 581.8,387.7 587.4,386.3 582.2,384.7"/><polygon points="479.4,350.9 483.7,351.8 490.1,352.3 485.8,351.5" fill="#b81226"/><polygon class="p" points="706.6,386.2 713.0,387.8 717.6,386.4 711.2,384.8"/><polygon class="p" points="517.0,386.1 521.7,387.8 527.8,386.4 523.1,384.8"/><polygon class="p" points="647.0,386.2 652.9,387.9 658.0,386.5 652.1,384.9"/><polygon points="490.1,352.3 494.5,353.2 500.9,353.9 496.4,353.1" fill="#be1827"/><polygon class="p" points="587.4,386.3 592.7,388.0 598.3,386.6 593.0,384.9"/><polygon class="p" points="717.6,386.4 724.1,388.1 728.6,386.7 722.2,385.0"/><polygon class="p" points="527.8,386.4 532.5,388.1 538.5,386.7 533.7,385.0"/><polygon points="500.9,353.9 505.4,354.9 511.6,355.2 507.1,354.4" fill="#c41e27"/><polygon class="p" points="658.0,386.5 663.9,388.2 668.9,386.8 663.0,385.1"/><polygon class="p" points="468.0,386.5 472.2,388.2 478.7,386.8 474.4,385.1"/><polygon class="p" points="598.3,386.6 603.7,388.3 609.1,386.9 603.7,385.2"/><polygon points="706.7,421.2 712.8,429.6 717.4,428.4 711.3,420.4" fill="#a0d0e4"/><polygon points="511.6,355.2 516.2,356.2 522.4,355.8 517.7,355.1" fill="#c82227"/><polygon class="p" points="538.5,386.7 543.4,388.4 549.3,386.9 544.4,385.3"/><polygon class="p" points="668.9,386.8 674.9,388.5 679.9,387.0 673.8,385.4"/><polygon class="p" points="478.7,386.8 483.0,388.4 489.4,387.0 485.0,385.4"/><polygon class="p" points="609.1,386.9 614.6,388.6 620.0,387.1 614.5,385.5"/><polygon points="696.0,413.7 702.0,421.9 706.7,421.2 700.7,413.3" fill="#c6e6f1"/><polygon points="522.4,355.8 527.1,356.9 533.1,356.5 528.4,355.5" fill="#ca2427"/><polygon class="p" points="549.3,386.9 554.3,388.6 560.1,387.2 555.1,385.5"/><polygon class="p" points="679.9,387.0 686.0,388.7 690.9,387.3 684.7,385.6"/><polygon class="p" points="489.4,387.0 493.8,388.7 500.1,387.3 495.7,385.6"/><polygon points="533.1,356.5 538.0,357.9 544.0,358.0 539.1,356.6" fill="#ce2727"/><polygon class="p" points="620.0,387.1 625.6,388.8 630.9,387.4 625.3,385.7"/><polygon points="685.3,406.6 691.3,413.9 696.0,413.7 690.1,406.4" fill="#e7f6eb"/><polygon class="p" points="560.1,387.2 565.2,388.9 570.9,387.5 565.9,385.8"/><polygon points="544.0,358.0 548.9,359.4 554.8,360.0 549.9,358.6" fill="#d62f27"/><polygon class="p" points="690.9,387.3 697.1,389.0 701.9,387.6 695.6,385.9"/><polygon class="p" points="500.1,387.3 504.7,389.0 510.9,387.6 506.3,385.9"/><polygon points="674.5,400.5 680.5,406.5 685.3,406.6 679.4,400.6" fill="#fbfdc6"/><polygon points="554.8,360.0 559.8,361.5 565.7,362.4 560.6,361.0" fill="#dc3a2c"/><polygon class="p" points="630.9,387.4 636.6,389.1 641.9,387.7 636.2,386.0"/><polygon points="663.6,396.1 669.6,400.4 674.5,400.5 668.6,396.3" fill="#fff3ad"/><polygon points="565.7,362.4 570.8,363.9 576.6,365.1 571.4,363.6" fill="#e34832"/><polygon points="462.1,348.7 466.3,350.1 472.9,350.4 468.7,349.3" fill="#a90426"/><polygon points="652.8,392.1 658.6,395.8 663.6,396.1 657.8,392.5" fill="#fee79b"/><polygon class="p" points="570.9,387.5 576.1,389.2 581.8,387.7 576.6,386.1"/><polygon points="641.9,387.9 647.7,391.6 652.8,392.1 647.0,388.6" fill="#fed989"/><polygon points="631.0,383.5 636.7,387.2 641.9,387.9 636.2,384.5" fill="#fdc476"/><polygon points="576.6,365.1 581.8,366.6 587.4,367.9 582.2,366.4" fill="#ea5839"/><polygon points="620.1,379.2 625.7,382.6 631.0,383.5 625.4,380.4" fill="#fdb063"/><polygon class="p" points="701.9,387.6 708.3,389.3 713.0,387.8 706.6,386.2"/><polygon class="p" points="510.9,387.6 515.5,389.3 521.7,387.8 517.0,386.1"/><polygon points="587.4,367.9 592.8,369.4 598.3,371.2 593.0,369.7" fill="#f26941"/><polygon points="609.2,374.9 614.7,377.7 620.1,379.2 614.6,376.6" fill="#fa9656"/><polygon points="598.3,371.2 603.8,373.1 609.2,374.9 603.8,373.1" fill="#f67d4b"/><polygon points="472.9,350.4 477.2,351.6 483.7,351.8 479.4,350.9" fill="#b00a26"/><polygon class="p" points="641.9,387.7 647.7,389.4 652.9,387.9 647.0,386.2"/><polygon class="p" points="581.8,387.7 587.1,389.4 592.7,388.0 587.4,386.3"/><polygon points="483.7,351.8 488.1,352.8 494.5,353.2 490.1,352.3" fill="#b51026"/><polygon class="p" points="713.0,387.8 719.4,389.6 724.1,388.1 717.6,386.4"/><polygon class="p" points="521.7,387.8 526.4,389.5 532.5,388.1 527.8,386.4"/><polygon class="p" points="652.9,387.9 658.8,389.6 663.9,388.2 658.0,386.5"/><polygon points="494.5,353.2 499.0,354.1 505.4,354.9 500.9,353.9" fill="#bc1626"/><polygon class="p" points="592.7,388.0 598.1,389.7 603.7,388.3 598.3,386.6"/><polygon points="702.0,421.9 708.1,430.7 712.8,429.6 706.7,421.2" fill="#a4d3e6"/><polygon class="p" points="532.5,388.1 537.4,389.8 543.4,388.4 538.5,386.7"/><polygon points="505.4,354.9 510.0,356.0 516.2,356.2 511.6,355.2" fill="#c21c27"/><polygon class="p" points="663.9,388.2 669.9,389.9 674.9,388.5 668.9,386.8"/><polygon class="p" points="472.2,388.2 476.6,389.9 483.0,388.4 478.7,386.8"/><polygon class="p" points="603.7,388.3 609.2,390.0 614.6,388.6 609.1,386.9"/><polygon points="516.2,356.2 520.9,357.4 527.1,356.9 522.4,355.8" fill="#c62027"/><polygon class="p" points="543.4,388.4 548.3,390.1 554.3,388.6 549.3,386.9"/><polygon points="691.3,413.9 697.3,422.4 702.0,421.9 696.0,413.7" fill="#cdeaf3"/><polygon class="p" points="674.9,388.5 681.1,390.2 686.0,388.7 679.9,387.0"/><polygon class="p" points="483.0,388.4 487.4,390.2 493.8,388.7 489.4,387.0"/><polygon class="p" points="614.6,388.6 620.2,390.3 625.6,388.8 620.0,387.1"/><polygon points="527.1,356.9 531.9,358.3 538.0,357.9 533.1,356.5" fill="#c92227"/><polygon class="p" points="554.3,388.6 559.3,390.4 565.2,388.9 560.1,387.2"/><polygon points="680.5,406.5 686.5,413.8 691.3,413.9 685.3,406.6" fill="#ecf8e2"/><polygon class="p" points="686.0,388.7 692.3,390.5 697.1,389.0 690.9,387.3"/><polygon class="p" points="493.8,388.7 498.3,390.4 504.7,389.0 500.1,387.3"/><polygon points="538.0,357.9 542.9,359.3 548.9,359.4 544.0,358.0" fill="#ce2727"/><polygon class="p" points="625.6,388.8 631.3,390.6 636.6,389.1 630.9,387.4"/><polygon points="669.6,400.4 675.5,406.3 680.5,406.5 674.5,400.5" fill="#fffebd"/><polygon class="p" points="565.2,388.9 570.3,390.6 576.1,389.2 570.9,387.5"/><polygon points="548.9,359.4 553.9,360.9 559.8,361.5 554.8,360.0" fill="#d62f27"/><polygon class="p" points="697.1,389.0 703.5,390.7 708.3,389.3 701.9,387.6"/><polygon points="658.6,395.8 664.6,400.3 669.6,400.4 663.6,396.1" fill="#feeea6"/><polygon class="p" points="504.7,389.0 509.3,390.7 515.5,389.3 510.9,387.6"/><polygon points="647.7,391.6 653.5,395.6 658.6,395.8 652.8,392.1" fill="#fee292"/><polygon points="559.8,361.5 565.0,363.0 570.8,363.9 565.7,362.4" fill="#dc3b2c"/><polygon points="636.7,387.2 642.5,391.2 647.7,391.6 641.9,387.9" fill="#fece7f"/><polygon class="p" points="636.6,389.1 642.5,390.8 647.7,389.4 641.9,387.7"/><polygon points="625.7,382.6 631.4,386.5 636.7,387.2 631.0,383.5" fill="#fdb96c"/><polygon points="570.8,363.9 576.0,365.4 581.8,366.6 576.6,365.1" fill="#e34832"/><polygon points="466.3,350.1 470.6,351.6 477.2,351.6 472.9,350.4" fill="#a90426"/><polygon class="p" points="576.1,389.2 581.4,390.9 587.1,389.4 581.8,387.7"/><polygon points="614.7,377.7 620.3,381.4 625.7,382.6 620.1,379.2" fill="#fba05a"/><polygon points="581.8,366.6 587.1,368.1 592.8,369.4 587.4,367.9" fill="#ea5739"/><polygon points="603.8,373.1 609.3,376.1 614.7,377.7 609.2,374.9" fill="#f7834d"/><polygon class="p" points="708.3,389.3 714.7,391.0 719.4,389.6 713.0,387.8"/><polygon class="p" points="515.5,389.3 520.3,391.0 526.4,389.5 521.7,387.8"/><polygon points="592.8,369.4 598.2,371.4 603.8,373.1 598.3,371.2" fill="#f26a41"/><polygon points="477.2,351.6 481.6,352.9 488.1,352.8 483.7,351.8" fill="#ae0926"/><polygon class="p" points="647.7,389.4 653.6,391.1 658.8,389.6 652.9,387.9"/><polygon class="p" points="587.1,389.4 592.5,391.2 598.1,389.7 592.7,388.0"/><polygon points="488.1,352.8 492.6,353.9 499.0,354.1 494.5,353.2" fill="#b30e26"/><polygon class="p" points="526.4,389.5 531.3,391.3 537.4,389.8 532.5,388.1"/><polygon points="697.3,422.4 703.3,431.5 708.1,430.7 702.0,421.9" fill="#a9d8e8"/><polygon class="p" points="658.8,389.6 664.8,391.4 669.9,389.9 663.9,388.2"/><polygon points="499.0,354.1 503.6,355.2 510.0,356.0 505.4,354.9" fill="#ba1426"/><polygon class="p" points="598.1,389.7 603.6,391.5 609.2,390.0 603.7,388.3"/><polygon class="p" points="537.4,389.8 542.3,391.6 548.3,390.1 543.4,388.4"/><polygon points="510.0,356.0 514.7,357.2 520.9,357.4 516.2,356.2" fill="#c11b27"/><polygon class="p" points="669.9,389.9 676.1,391.7 681.1,390.2 674.9,388.5"/><polygon class="p" points="476.6,389.9 480.9,391.6 487.4,390.2 483.0,388.4"/><polygon points="686.5,413.8 692.5,422.3 697.3,422.4 691.3,413.9" fill="#d5eef5"/><polygon class="p" points="609.2,390.0 614.8,391.7 620.2,390.3 614.6,388.6"/><polygon points="520.9,357.4 525.7,358.8 531.9,358.3 527.1,356.9" fill="#c51f27"/><polygon class="p" points="548.3,390.1 553.4,391.8 559.3,390.4 554.3,388.6"/><polygon class="p" points="681.1,390.2 687.3,391.9 692.3,390.5 686.0,388.7"/><polygon class="p" points="487.4,390.2 491.9,391.9 498.3,390.4 493.8,388.7"/><polygon points="675.5,406.3 681.6,413.5 686.5,413.8 680.5,406.5" fill="#f2fad8"/><polygon class="p" points="620.2,390.3 625.9,392.0 631.3,390.6 625.6,388.8"/><polygon points="531.9,358.3 536.8,359.8 542.9,359.3 538.0,357.9" fill="#c92227"/><polygon class="p" points="559.3,390.4 564.5,392.1 570.3,390.6 565.2,388.9"/><polygon class="p" points="692.3,390.5 698.6,392.2 703.5,390.7 697.1,389.0"/><polygon class="p" points="498.3,390.4 502.9,392.2 509.3,390.7 504.7,389.0"/><polygon points="664.6,400.3 670.5,406.1 675.5,406.3 669.6,400.4" fill="#fff8b5"/><polygon points="542.9,359.3 547.9,360.8 553.9,360.9 548.9,359.4" fill="#ce2727"/><polygon class="p" points="631.3,390.6 637.1,392.3 642.5,390.8 636.6,389.1"/><polygon points="653.5,395.6 659.5,400.1 664.6,400.3 658.6,395.8" fill="#fee99d"/><polygon points="642.5,391.2 648.3,395.4 653.5,395.6 647.7,391.6" fill="#fed98a"/><polygon class="p" points="570.3,390.6 575.6,392.4 581.4,390.9 576.1,389.2"/><polygon points="553.9,360.9 559.0,362.4 565.0,363.0 559.8,361.5" fill="#d62f27"/><polygon points="631.4,386.5 637.2,390.8 642.5,391.2 636.7,387.2" fill="#fdc476"/><polygon class="p" points="703.5,390.7 710.0,392.5 714.7,391.0 708.3,389.3"/><polygon class="p" points="509.3,390.7 514.0,392.5 520.3,391.0 515.5,389.3"/><polygon points="620.3,381.4 626.0,385.6 631.4,386.5 625.7,382.6" fill="#fdae61"/><polygon points="565.0,363.0 570.2,364.5 576.0,365.4 570.8,363.9" fill="#dc3b2c"/><polygon class="p" points="642.5,390.8 648.4,392.6 653.6,391.1 647.7,389.4"/><polygon points="609.3,376.1 614.9,380.0 620.3,381.4 614.7,377.7" fill="#f98e52"/><polygon points="576.0,365.4 581.4,367.0 587.1,368.1 581.8,366.6" fill="#e34832"/><polygon points="470.6,351.6 475.0,353.3 481.6,352.9 477.2,351.6" fill="#a90426"/><polygon class="p" points="581.4,390.9 586.8,392.7 592.5,391.2 587.1,389.4"/><polygon points="598.2,371.4 603.7,374.6 609.3,376.1 603.8,373.1" fill="#f47044"/><polygon points="587.1,368.1 592.5,370.1 598.2,371.4 592.8,369.4" fill="#ea593a"/><polygon class="p" points="520.3,391.0 525.1,392.8 531.3,391.3 526.4,389.5"/><polygon class="p" points="653.6,391.1 659.7,392.9 664.8,391.4 658.8,389.6"/><polygon points="481.6,352.9 486.1,354.3 492.6,353.9 488.1,352.8" fill="#ad0826"/><polygon points="692.5,422.3 698.6,431.4 703.3,431.5 697.3,422.4" fill="#b1dceb"/><polygon class="p" points="592.5,391.2 598.0,393.0 603.6,391.5 598.1,389.7"/><polygon class="p" points="531.3,391.3 536.2,393.0 542.3,391.6 537.4,389.8"/><polygon points="492.6,353.9 497.1,355.1 503.6,355.2 499.0,354.1" fill="#b10c26"/><polygon class="p" points="664.8,391.4 671.0,393.2 676.1,391.7 669.9,389.9"/><polygon class="p" points="603.6,391.5 609.2,393.2 614.8,391.7 609.2,390.0"/><polygon points="503.6,355.2 508.3,356.3 514.7,357.2 510.0,356.0" fill="#b81226"/><polygon points="681.6,413.5 687.6,421.7 692.5,422.3 686.5,413.8" fill="#dff3f8"/><polygon class="p" points="542.3,391.6 547.3,393.3 553.4,391.8 548.3,390.1"/><polygon points="514.7,357.2 519.4,358.7 525.7,358.8 520.9,357.4" fill="#c01a27"/><polygon class="p" points="676.1,391.7 682.3,393.4 687.3,391.9 681.1,390.2"/><polygon class="p" points="480.9,391.6 485.4,393.4 491.9,391.9 487.4,390.2"/><polygon class="p" points="614.8,391.7 620.5,393.5 625.9,392.0 620.2,390.3"/><polygon points="525.7,358.8 530.6,360.3 536.8,359.8 531.9,358.3" fill="#c51f27"/><polygon class="p" points="553.4,391.8 558.5,393.6 564.5,392.1 559.3,390.4"/><polygon points="670.5,406.1 676.6,413.0 681.6,413.5 675.5,406.3" fill="#f8fccd"/><polygon class="p" points="687.3,391.9 693.7,393.7 698.6,392.2 692.3,390.5"/><polygon class="p" points="491.9,391.9 496.5,393.7 502.9,392.2 498.3,390.4"/><polygon class="p" points="625.9,392.0 631.7,393.8 637.1,392.3 631.3,390.6"/><polygon points="536.8,359.8 541.8,361.2 547.9,360.8 542.9,359.3" fill="#c92227"/><polygon points="659.5,400.1 665.5,405.8 670.5,406.1 664.6,400.3" fill="#fff3ad"/><polygon class="p" points="564.5,392.1 569.7,393.9 575.6,392.4 570.3,390.6"/><polygon points="648.3,395.4 654.3,400.0 659.5,400.1 653.5,395.6" fill="#fee496"/><polygon class="p" points="698.6,392.2 705.1,394.0 710.0,392.5 703.5,390.7"/><polygon class="p" points="502.9,392.2 507.6,394.0 514.0,392.5 509.3,390.7"/><polygon points="637.2,390.8 643.0,395.2 648.3,395.4 642.5,391.2" fill="#fed081"/><polygon points="547.9,360.8 553.0,362.3 559.0,362.4 553.9,360.9" fill="#ce2727"/><polygon class="p" points="637.1,392.3 643.1,394.1 648.4,392.6 642.5,390.8"/><polygon points="626.0,385.6 631.8,390.1 637.2,390.8 631.4,386.5" fill="#fdba6c"/><polygon class="p" points="575.6,392.4 581.0,394.2 586.8,392.7 581.4,390.9"/><polygon points="559.0,362.4 564.2,363.9 570.2,364.5 565.0,363.0" fill="#d62f27"/><polygon points="614.9,380.0 620.6,384.6 626.0,385.6 620.3,381.4" fill="#fb9d59"/><polygon class="p" points="514.0,392.5 518.8,394.3 525.1,392.8 520.3,391.0"/><polygon points="570.2,364.5 575.5,366.0 581.4,367.0 576.0,365.4" fill="#dc3b2c"/><polygon points="603.7,374.6 609.3,379.0 614.9,380.0 609.3,376.1" fill="#f67c4a"/><polygon class="p" points="648.4,392.6 654.4,394.4 659.7,392.9 653.6,391.1"/><polygon points="581.4,367.0 586.8,369.1 592.5,370.1 587.1,368.1" fill="#e34a33"/><polygon points="592.5,370.1 598.1,373.7 603.7,374.6 598.2,371.4" fill="#ee5f3d"/><polygon points="475.0,353.3 479.4,355.0 486.1,354.3 481.6,352.9" fill="#a90426"/><polygon class="p" points="586.8,392.7 592.2,394.5 598.0,393.0 592.5,391.2"/><polygon class="p" points="525.1,392.8 530.0,394.6 536.2,393.0 531.3,391.3"/><polygon points="687.6,421.7 693.7,430.7 698.6,431.4 692.5,422.3" fill="#bce2ee"/><polygon class="p" points="659.7,392.9 665.8,394.7 671.0,393.2 664.8,391.4"/><polygon points="486.1,354.3 490.6,355.8 497.1,355.1 492.6,353.9" fill="#ad0726"/><polygon class="p" points="598.0,393.0 603.5,394.8 609.2,393.2 603.6,391.5"/><polygon class="p" points="536.2,393.0 541.2,394.9 547.3,393.3 542.3,391.6"/><polygon points="497.1,355.1 501.8,356.4 508.3,356.3 503.6,355.2" fill="#b00b26"/><polygon class="p" points="671.0,393.2 677.2,395.0 682.3,393.4 676.1,391.7"/><polygon points="676.6,413.0 682.7,420.9 687.6,421.7 681.6,413.5" fill="#e7f6ec"/><polygon class="p" points="609.2,393.2 614.9,395.1 620.5,393.5 614.8,391.7"/><polygon points="508.3,356.3 513.0,357.8 519.4,358.7 514.7,357.2" fill="#b81226"/><polygon class="p" points="547.3,393.3 552.5,395.1 558.5,393.6 553.4,391.8"/><polygon points="519.4,358.7 524.3,360.2 530.6,360.3 525.7,358.8" fill="#c01a27"/><polygon class="p" points="682.3,393.4 688.7,395.3 693.7,393.7 687.3,391.9"/><polygon class="p" points="485.4,393.4 490.0,395.2 496.5,393.7 491.9,391.9"/><polygon class="p" points="620.5,393.5 626.3,395.3 631.7,393.8 625.9,392.0"/><polygon points="665.5,405.8 671.5,412.5 676.6,413.0 670.5,406.1" fill="#fefec1"/><polygon points="530.6,360.3 535.6,361.8 541.8,361.2 536.8,359.8" fill="#c51f27"/><polygon class="p" points="558.5,393.6 563.7,395.4 569.7,393.9 564.5,392.1"/><polygon class="p" points="693.7,393.7 700.2,395.5 705.1,394.0 698.6,392.2"/><polygon class="p" points="496.5,393.7 501.2,395.5 507.6,394.0 502.9,392.2"/><polygon points="654.3,400.0 660.3,405.7 665.5,405.8 659.5,400.1" fill="#feeea5"/><polygon class="p" points="631.7,393.8 637.7,395.6 643.1,394.1 637.1,392.3"/><polygon points="643.0,395.2 649.0,400.0 654.3,400.0 648.3,395.4" fill="#fede8e"/><polygon points="541.8,361.2 546.9,362.7 553.0,362.3 547.9,360.8" fill="#c92227"/><polygon points="631.8,390.1 637.7,394.8 643.0,395.2 637.2,390.8" fill="#fec779"/><polygon class="p" points="569.7,393.9 575.1,395.7 581.0,394.2 575.6,392.4"/><polygon points="620.6,384.6 626.4,389.5 631.8,390.1 626.0,385.6" fill="#fdaf62"/><polygon class="p" points="507.6,394.0 512.4,395.8 518.8,394.3 514.0,392.5"/><polygon points="553.0,362.3 558.2,363.8 564.2,363.9 559.0,362.4" fill="#ce2727"/><polygon class="p" points="643.1,394.1 649.1,395.9 654.4,394.4 648.4,392.6"/><polygon points="609.3,379.0 615.0,384.0 620.6,384.6 614.9,380.0" fill="#f98e52"/><polygon class="p" points="581.0,394.2 586.4,396.0 592.2,394.5 586.8,392.7"/><polygon points="564.2,363.9 569.5,365.4 575.5,366.0 570.2,364.5" fill="#d62f27"/><polygon points="598.1,373.7 603.7,378.5 609.3,379.0 603.7,374.6" fill="#f46d43"/><polygon class="p" points="518.8,394.3 523.7,396.1 530.0,394.6 525.1,392.8"/><polygon points="575.5,366.0 580.9,368.2 586.8,369.1 581.4,367.0" fill="#dd3c2d"/><polygon points="586.8,369.1 592.3,373.0 598.1,373.7 592.5,370.1" fill="#e75237"/><polygon class="p" points="654.4,394.4 660.6,396.2 665.8,394.7 659.7,392.9"/><polygon points="479.4,355.0 484.0,356.9 490.6,355.8 486.1,354.3" fill="#aa0526"/><polygon class="p" points="592.2,394.5 597.8,396.3 603.5,394.8 598.0,393.0"/><polygon points="682.7,420.9 688.9,429.5 693.7,430.7 687.6,421.7" fill="#cae8f2"/><polygon class="p" points="530.0,394.6 535.0,396.4 541.2,394.9 536.2,393.0"/><polygon class="p" points="665.8,394.7 672.1,396.5 677.2,395.0 671.0,393.2"/><polygon points="490.6,355.8 495.2,357.5 501.8,356.4 497.1,355.1" fill="#ad0726"/><polygon class="p" points="603.5,394.8 609.2,396.6 614.9,395.1 609.2,393.2"/><polygon class="p" points="541.2,394.9 546.3,396.7 552.5,395.1 547.3,393.3"/><polygon points="501.8,356.4 506.5,357.9 513.0,357.8 508.3,356.3" fill="#b00a26"/><polygon points="671.5,412.5 677.7,420.1 682.7,420.9 676.6,413.0" fill="#eef8df"/><polygon class="p" points="677.2,395.0 683.6,396.8 688.7,395.3 682.3,393.4"/><polygon class="p" points="614.9,395.1 620.7,396.9 626.3,395.3 620.5,393.5"/><polygon points="513.0,357.8 517.9,359.4 524.3,360.2 519.4,358.7" fill="#b81226"/><polygon class="p" points="552.5,395.1 557.7,397.0 563.7,395.4 558.5,393.6"/><polygon points="660.3,405.7 666.4,412.2 671.5,412.5 665.5,405.8" fill="#fffab8"/><polygon points="524.3,360.2 529.3,361.8 535.6,361.8 530.6,360.3" fill="#c01a27"/><polygon class="p" points="688.7,395.3 695.2,397.1 700.2,395.5 693.7,393.7"/><polygon class="p" points="490.0,395.2 494.6,397.1 501.2,395.5 496.5,393.7"/><polygon class="p" points="626.3,395.3 632.2,397.2 637.7,395.6 631.7,393.8"/><polygon points="649.0,400.0 655.0,405.7 660.3,405.7 654.3,400.0" fill="#fee99d"/><polygon points="535.6,361.8 540.6,363.3 546.9,362.7 541.8,361.2" fill="#c51f27"/><polygon class="p" points="563.7,395.4 569.1,397.3 575.1,395.7 569.7,393.9"/><polygon points="637.7,394.8 643.6,399.8 649.0,400.0 643.0,395.2" fill="#fed586"/><polygon class="p" points="501.2,395.5 505.9,397.4 512.4,395.8 507.6,394.0"/><polygon points="626.4,389.5 632.2,394.5 637.7,394.8 631.8,390.1" fill="#fdbe70"/><polygon class="p" points="637.7,395.6 643.7,397.5 649.1,395.9 643.1,394.1"/><polygon points="546.9,362.7 552.1,364.2 558.2,363.8 553.0,362.3" fill="#c92227"/><polygon points="615.0,384.0 620.8,389.3 626.4,389.5 620.6,384.6" fill="#fba25c"/><polygon class="p" points="575.1,395.7 580.5,397.6 586.4,396.0 581.0,394.2"/><polygon points="603.7,378.5 609.3,384.0 615.0,384.0 609.3,379.0" fill="#f7824d"/><polygon class="p" points="512.4,395.8 517.3,397.7 523.7,396.1 518.8,394.3"/><polygon points="558.2,363.8 563.5,365.4 569.5,365.4 564.2,363.9" fill="#ce2727"/><polygon class="p" points="649.1,395.9 655.3,397.8 660.6,396.2 654.4,394.4"/><polygon points="592.3,373.0 597.9,378.3 603.7,378.5 598.1,373.7" fill="#ef623e"/><polygon points="569.5,365.4 574.9,367.7 580.9,368.2 575.5,366.0" fill="#d73027"/><polygon class="p" points="586.4,396.0 592.0,397.9 597.8,396.3 592.2,394.5"/><polygon points="580.9,368.2 586.4,372.5 592.3,373.0 586.8,369.1" fill="#e14531"/><polygon class="p" points="523.7,396.1 528.6,398.0 535.0,396.4 530.0,394.6"/><polygon class="p" points="660.6,396.2 666.8,398.1 672.1,396.5 665.8,394.7"/><polygon points="484.0,356.9 488.6,358.8 495.2,357.5 490.6,355.8" fill="#ac0626"/><polygon points="677.7,420.1 683.9,428.2 688.9,429.5 682.7,420.9" fill="#d9eff6"/><polygon class="p" points="597.8,396.3 603.5,398.2 609.2,396.6 603.5,394.8"/><polygon class="p" points="535.0,396.4 540.1,398.3 546.3,396.7 541.2,394.9"/><polygon class="p" points="672.1,396.5 678.5,398.4 683.6,396.8 677.2,395.0"/><polygon points="495.2,357.5 500.0,359.2 506.5,357.9 501.8,356.4" fill="#ad0826"/><polygon class="p" points="609.2,396.6 615.0,398.5 620.7,396.9 614.9,395.1"/><polygon points="666.4,412.2 672.6,419.4 677.7,420.1 671.5,412.5" fill="#f5fbd2"/><polygon class="p" points="546.3,396.7 551.5,398.6 557.7,397.0 552.5,395.1"/><polygon points="506.5,357.9 511.4,359.7 517.9,359.4 513.0,357.8" fill="#b00b26"/><polygon class="p" points="683.6,396.8 690.1,398.7 695.2,397.1 688.7,395.3"/><polygon class="p" points="620.7,396.9 626.6,398.8 632.2,397.2 626.3,395.3"/><polygon points="517.9,359.4 522.8,361.3 529.3,361.8 524.3,360.2" fill="#b91326"/><polygon points="655.0,405.7 661.1,412.0 666.4,412.2 660.3,405.7" fill="#fff5b0"/><polygon class="p" points="557.7,397.0 563.0,398.9 569.1,397.3 563.7,395.4"/><polygon points="529.3,361.8 534.3,363.5 540.6,363.3 535.6,361.8" fill="#c01a27"/><polygon points="643.6,399.8 649.7,405.6 655.0,405.7 649.0,400.0" fill="#fee495"/><polygon class="p" points="494.6,397.1 499.3,399.0 505.9,397.4 501.2,395.5"/><polygon class="p" points="632.2,397.2 638.2,399.1 643.7,397.5 637.7,395.6"/><polygon points="632.2,394.5 638.2,399.7 643.6,399.8 637.7,394.8" fill="#fecd7e"/><polygon points="540.6,363.3 545.8,364.8 552.1,364.2 546.9,362.7" fill="#c51f27"/><polygon class="p" points="569.1,397.3 574.5,399.2 580.5,397.6 575.1,395.7"/><polygon points="620.8,389.3 626.7,394.6 632.2,394.5 626.4,389.5" fill="#fdb568"/><polygon points="609.3,384.0 615.1,389.8 620.8,389.3 615.0,384.0" fill="#fa9957"/><polygon class="p" points="505.9,397.4 510.7,399.3 517.3,397.7 512.4,395.8"/><polygon class="p" points="643.7,397.5 649.8,399.4 655.3,397.8 649.1,395.9"/><polygon points="597.9,378.3 603.6,384.4 609.3,384.0 603.7,378.5" fill="#f67848"/><polygon points="552.1,364.2 557.3,365.7 563.5,365.4 558.2,363.8" fill="#c92227"/><polygon class="p" points="580.5,397.6 586.1,399.5 592.0,397.9 586.4,396.0"/><polygon points="586.4,372.5 592.0,378.4 597.9,378.3 592.3,373.0" fill="#ea5839"/><polygon class="p" points="517.3,397.7 522.2,399.6 528.6,398.0 523.7,396.1"/><polygon points="563.5,365.4 568.9,367.7 574.9,367.7 569.5,365.4" fill="#d02927"/><polygon points="574.9,367.7 580.5,372.4 586.4,372.5 580.9,368.2" fill="#dc3b2c"/><polygon class="p" points="655.3,397.8 661.5,399.7 666.8,398.1 660.6,396.2"/><polygon class="p" points="592.0,397.9 597.6,399.8 603.5,398.2 597.8,396.3"/><polygon class="p" points="528.6,398.0 533.7,399.9 540.1,398.3 535.0,396.4"/><polygon class="p" points="666.8,398.1 673.2,400.0 678.5,398.4 672.1,396.5"/><polygon points="488.6,358.8 493.3,360.7 500.0,359.2 495.2,357.5" fill="#ad0826"/><polygon points="672.6,419.4 678.8,427.1 683.9,428.2 677.7,420.1" fill="#e4f5f1"/><polygon class="p" points="603.5,398.2 609.3,400.1 615.0,398.5 609.2,396.6"/><polygon class="p" points="540.1,398.3 545.2,400.2 551.5,398.6 546.3,396.7"/><polygon points="500.0,359.2 504.8,361.1 511.4,359.7 506.5,357.9" fill="#ae0926"/><polygon class="p" points="678.5,398.4 685.0,400.3 690.1,398.7 683.6,396.8"/><polygon points="661.1,412.0 667.3,419.0 672.6,419.4 666.4,412.2" fill="#fbfdc7"/><polygon class="p" points="615.0,398.5 620.9,400.4 626.6,398.8 620.7,396.9"/><polygon class="p" points="551.5,398.6 556.8,400.5 563.0,398.9 557.7,397.0"/><polygon points="511.4,359.7 516.3,361.7 522.8,361.3 517.9,359.4" fill="#b20c26"/><polygon points="649.7,405.6 655.8,411.9 661.1,412.0 655.0,405.7" fill="#fff0a8"/><polygon points="522.8,361.3 527.9,363.3 534.3,363.5 529.3,361.8" fill="#ba1426"/><polygon class="p" points="626.6,398.8 632.6,400.7 638.2,399.1 632.2,397.2"/><polygon points="638.2,399.7 644.2,405.5 649.7,405.6 643.6,399.8" fill="#fede8e"/><polygon class="p" points="563.0,398.9 568.4,400.8 574.5,399.2 569.1,397.3"/><polygon points="626.7,394.6 632.6,400.0 638.2,399.7 632.2,394.5" fill="#fdc577"/><polygon points="534.3,363.5 539.5,365.2 545.8,364.8 540.6,363.3" fill="#c11b27"/><polygon points="615.1,389.8 621.0,395.5 626.7,394.6 620.8,389.3" fill="#fdaf62"/><polygon class="p" points="499.3,399.0 504.1,400.9 510.7,399.3 505.9,397.4"/><polygon points="603.6,384.4 609.4,390.8 615.1,389.8 609.3,384.0" fill="#f99254"/><polygon class="p" points="638.2,399.1 644.3,401.0 649.8,399.4 643.7,397.5"/><polygon class="p" points="574.5,399.2 580.0,401.1 586.1,399.5 580.5,397.6"/><polygon points="545.8,364.8 551.1,366.3 557.3,365.7 552.1,364.2" fill="#c51e27"/><polygon points="592.0,378.4 597.7,385.1 603.6,384.4 597.9,378.3" fill="#f57145"/><polygon class="p" points="510.7,399.3 515.7,401.2 522.2,399.6 517.3,397.7"/><polygon points="580.5,372.4 586.1,378.7 592.0,378.4 586.4,372.5" fill="#e64f35"/><polygon class="p" points="649.8,399.4 656.1,401.3 661.5,399.7 655.3,397.8"/><polygon points="557.3,365.7 562.7,368.1 568.9,367.7 563.5,365.4" fill="#ca2427"/><polygon points="568.9,367.7 574.4,372.6 580.5,372.4 574.9,367.7" fill="#d83228"/><polygon class="p" points="586.1,399.5 591.7,401.4 597.6,399.8 592.0,397.9"/><polygon class="p" points="522.2,399.6 527.3,401.5 533.7,399.9 528.6,398.0"/><polygon class="p" points="661.5,399.7 667.9,401.6 673.2,400.0 666.8,398.1"/><polygon class="p" points="597.6,399.8 603.4,401.7 609.3,400.1 603.5,398.2"/><polygon class="p" points="533.7,399.9 538.9,401.8 545.2,400.2 540.1,398.3"/><polygon points="667.3,419.0 673.6,426.5 678.8,427.1 672.6,419.4" fill="#ebf7e3"/><polygon points="493.3,360.7 498.1,362.8 504.8,361.1 500.0,359.2" fill="#af0926"/><polygon class="p" points="673.2,400.0 679.7,401.9 685.0,400.3 678.5,398.4"/><polygon class="p" points="609.3,400.1 615.2,402.0 620.9,400.4 615.0,398.5"/><polygon points="655.8,411.9 662.0,418.8 667.3,419.0 661.1,412.0" fill="#fffdbc"/><polygon class="p" points="545.2,400.2 550.5,402.1 556.8,400.5 551.5,398.6"/><polygon points="504.8,361.1 509.7,363.1 516.3,361.7 511.4,359.7" fill="#b00a26"/><polygon class="p" points="620.9,400.4 626.9,402.3 632.6,400.7 626.6,398.8"/><polygon points="644.2,405.5 650.4,411.8 655.8,411.9 649.7,405.6" fill="#feeaa0"/><polygon points="516.3,361.7 521.3,363.9 527.9,363.3 522.8,361.3" fill="#b40e26"/><polygon class="p" points="556.8,400.5 562.2,402.4 568.4,400.8 563.0,398.9"/><polygon points="632.6,400.0 638.7,405.8 644.2,405.5 638.2,399.7" fill="#fed687"/><polygon points="621.0,395.5 627.0,401.0 632.6,400.0 626.7,394.6" fill="#fdc072"/><polygon points="609.4,390.8 615.2,396.8 621.0,395.5 615.1,389.8" fill="#fdac60"/><polygon points="527.9,363.3 533.0,365.4 539.5,365.2 534.3,363.5" fill="#bb1526"/><polygon class="p" points="632.6,400.7 638.8,402.6 644.3,401.0 638.2,399.1"/><polygon points="597.7,385.1 603.5,391.9 609.4,390.8 603.6,384.4" fill="#f98e52"/><polygon class="p" points="568.4,400.8 573.9,402.7 580.0,401.1 574.5,399.2"/><polygon points="539.5,365.2 544.7,367.0 551.1,366.3 545.8,364.8" fill="#c11b27"/><polygon points="586.1,378.7 591.8,385.8 597.7,385.1 592.0,378.4" fill="#f36b42"/><polygon class="p" points="504.1,400.9 509.0,402.8 515.7,401.2 510.7,399.3"/><polygon class="p" points="644.3,401.0 650.6,403.0 656.1,401.3 649.8,399.4"/><polygon points="574.4,372.6 580.0,379.2 586.1,378.7 580.5,372.4" fill="#e34932"/><polygon points="551.1,366.3 556.4,368.8 562.7,368.1 557.3,365.7" fill="#c62027"/><polygon class="p" points="580.0,401.1 585.7,403.0 591.7,401.4 586.1,399.5"/><polygon points="562.7,368.1 568.2,373.2 574.4,372.6 568.9,367.7" fill="#d42d27"/><polygon class="p" points="515.7,401.2 520.7,403.1 527.3,401.5 522.2,399.6"/><polygon class="p" points="656.1,401.3 662.5,403.3 667.9,401.6 661.5,399.7"/><polygon class="p" points="591.7,401.4 597.5,403.4 603.4,401.7 597.6,399.8"/><polygon class="p" points="527.3,401.5 532.4,403.5 538.9,401.8 533.7,399.9"/><polygon class="p" points="667.9,401.6 674.4,403.6 679.7,401.9 673.2,400.0"/><polygon points="662.0,418.8 668.3,426.1 673.6,426.5 667.3,419.0" fill="#f2fad7"/><polygon class="p" points="603.4,401.7 609.3,403.7 615.2,402.0 609.3,400.1"/><polygon class="p" points="538.9,401.8 544.1,403.8 550.5,402.1 545.2,400.2"/><polygon points="498.1,362.8 503.0,365.0 509.7,363.1 504.8,361.1" fill="#b10c26"/><polygon points="650.4,411.8 656.6,418.6 662.0,418.8 655.8,411.9" fill="#fff8b4"/><polygon class="p" points="615.2,402.0 621.2,404.0 626.9,402.3 620.9,400.4"/><polygon class="p" points="550.5,402.1 555.9,404.1 562.2,402.4 556.8,400.5"/><polygon points="509.7,363.1 514.7,365.4 521.3,363.9 516.3,361.7" fill="#b20d26"/><polygon points="638.7,405.8 644.8,412.0 650.4,411.8 644.2,405.5" fill="#fee699"/><polygon points="627.0,401.0 633.0,406.7 638.7,405.8 632.6,400.0" fill="#fed182"/><polygon points="615.2,396.8 621.2,402.3 627.0,401.0 621.0,395.5" fill="#fdbe70"/><polygon points="603.5,391.9 609.4,398.2 615.2,396.8 609.4,390.8" fill="#fca95f"/><polygon class="p" points="626.9,402.3 633.1,404.3 638.8,402.6 632.6,400.7"/><polygon points="521.3,363.9 526.4,366.3 533.0,365.4 527.9,363.3" fill="#b71126"/><polygon points="591.8,385.8 597.5,393.1 603.5,391.9 597.7,385.1" fill="#f88a50"/><polygon class="p" points="562.2,402.4 567.7,404.4 573.9,402.7 568.4,400.8"/><polygon points="533.0,365.4 538.2,367.7 544.7,367.0 539.5,365.2" fill="#bd1726"/><polygon points="580.0,379.2 585.7,386.8 591.8,385.8 586.1,378.7" fill="#f16640"/><polygon class="p" points="638.8,402.6 645.0,404.6 650.6,403.0 644.3,401.0"/><polygon class="p" points="573.9,402.7 579.6,404.7 585.7,403.0 580.0,401.1"/><polygon points="568.2,373.2 573.8,380.1 580.0,379.2 574.4,372.6" fill="#e04430"/><polygon points="544.7,367.0 550.1,369.7 556.4,368.8 551.1,366.3" fill="#c31d27"/><polygon class="p" points="509.0,402.8 514.0,404.8 520.7,403.1 515.7,401.2"/><polygon points="556.4,368.8 561.9,374.0 568.2,373.2 562.7,368.1" fill="#d02927"/><polygon class="p" points="650.6,403.0 657.0,404.9 662.5,403.3 656.1,401.3"/><polygon class="p" points="585.7,403.0 591.4,405.0 597.5,403.4 591.7,401.4"/><polygon class="p" points="520.7,403.1 525.8,405.1 532.4,403.5 527.3,401.5"/><polygon class="p" points="662.5,403.3 669.0,405.3 674.4,403.6 667.9,401.6"/><polygon class="p" points="597.5,403.4 603.4,405.4 609.3,403.7 603.4,401.7"/><polygon class="p" points="532.4,403.5 537.6,405.5 544.1,403.8 538.9,401.8"/><polygon points="656.6,418.6 662.9,425.7 668.3,426.1 662.0,418.8" fill="#f8fccc"/><polygon class="p" points="609.3,403.7 615.3,405.7 621.2,404.0 615.2,402.0"/><polygon points="503.0,365.0 508.0,367.4 514.7,365.4 509.7,363.1" fill="#b40e26"/><polygon points="644.8,412.0 651.1,418.6 656.6,418.6 650.4,411.8" fill="#fff3ac"/><polygon class="p" points="544.1,403.8 549.5,405.8 555.9,404.1 550.5,402.1"/><polygon points="633.0,406.7 639.2,412.8 644.8,412.0 638.7,405.8" fill="#fee294"/><polygon points="621.2,402.3 627.3,408.0 633.0,406.7 627.0,401.0" fill="#fecf80"/><polygon points="609.4,398.2 615.3,403.8 621.2,402.3 615.2,396.8" fill="#fdbd6f"/><polygon class="p" points="621.2,404.0 627.3,406.0 633.1,404.3 626.9,402.3"/><polygon points="597.5,393.1 603.4,399.6 609.4,398.2 603.5,391.9" fill="#fca75e"/><polygon points="514.7,365.4 519.8,367.9 526.4,366.3 521.3,363.9" fill="#b61026"/><polygon class="p" points="555.9,404.1 561.4,406.1 567.7,404.4 562.2,402.4"/><polygon points="585.7,386.8 591.5,394.3 597.5,393.1 591.8,385.8" fill="#f8874f"/><polygon points="526.4,366.3 531.7,368.8 538.2,367.7 533.0,365.4" fill="#ba1426"/><polygon class="p" points="633.1,404.3 639.3,406.3 645.0,404.6 638.8,402.6"/><polygon points="573.8,380.1 579.5,387.9 585.7,386.8 580.0,379.2" fill="#ef623e"/><polygon class="p" points="567.7,404.4 573.3,406.4 579.6,404.7 573.9,402.7"/><polygon points="538.2,367.7 543.6,370.7 550.1,369.7 544.7,367.0" fill="#c11b27"/><polygon points="561.9,374.0 567.5,381.1 573.8,380.1 568.2,373.2" fill="#df402e"/><polygon points="550.1,369.7 555.6,374.8 561.9,374.0 556.4,368.8" fill="#cd2727"/><polygon class="p" points="645.0,404.6 651.4,406.7 657.0,404.9 650.6,403.0"/><polygon class="p" points="579.6,404.7 585.3,406.8 591.4,405.0 585.7,403.0"/><polygon class="p" points="514.0,404.8 519.1,406.9 525.8,405.1 520.7,403.1"/><polygon class="p" points="657.0,404.9 663.5,407.0 669.0,405.3 662.5,403.3"/><polygon class="p" points="591.4,405.0 597.3,407.1 603.4,405.4 597.5,403.4"/><polygon class="p" points="525.8,405.1 531.0,407.2 537.6,405.5 532.4,403.5"/><polygon class="p" points="603.4,405.4 609.3,407.4 615.3,405.7 609.3,403.7"/><polygon points="651.1,418.6 657.4,425.6 662.9,425.7 656.6,418.6" fill="#feffc1"/><polygon class="p" points="537.6,405.5 543.0,407.5 549.5,405.8 544.1,403.8"/><polygon points="639.2,412.8 645.4,419.1 651.1,418.6 644.8,412.0" fill="#feeea6"/><polygon points="627.3,408.0 633.4,413.9 639.2,412.8 633.0,406.7" fill="#fee090"/><polygon points="603.4,399.6 609.4,405.2 615.3,403.8 609.4,398.2" fill="#fdbc6e"/><polygon points="615.3,403.8 621.4,409.4 627.3,408.0 621.2,402.3" fill="#fecd7e"/><polygon class="p" points="615.3,405.7 621.4,407.7 627.3,406.0 621.2,404.0"/><polygon points="508.0,367.4 513.0,370.0 519.8,367.9 514.7,365.4" fill="#b81226"/><polygon points="591.5,394.3 597.3,401.0 603.4,399.6 597.5,393.1" fill="#fca55d"/><polygon class="p" points="549.5,405.8 555.0,407.8 561.4,406.1 555.9,404.1"/><polygon points="579.5,387.9 585.3,395.6 591.5,394.3 585.7,386.8" fill="#f7844e"/><polygon points="519.8,367.9 525.0,370.6 531.7,368.8 526.4,366.3" fill="#ba1426"/><polygon class="p" points="627.3,406.0 633.5,408.1 639.3,406.3 633.1,404.3"/><polygon points="567.5,381.1 573.2,389.0 579.5,387.9 573.8,380.1" fill="#ee603d"/><polygon class="p" points="561.4,406.1 567.0,408.2 573.3,406.4 567.7,404.4"/><polygon points="531.7,368.8 537.0,372.0 543.6,370.7 538.2,367.7" fill="#bf1927"/><polygon points="555.6,374.8 561.2,381.8 567.5,381.1 561.9,374.0" fill="#dd3c2d"/><polygon class="p" points="639.3,406.3 645.7,408.4 651.4,406.7 645.0,404.6"/><polygon points="543.6,370.7 549.1,375.7 555.6,374.8 550.1,369.7" fill="#cb2427"/><polygon class="p" points="573.3,406.4 579.1,408.5 585.3,406.8 579.6,404.7"/><polygon class="p" points="651.4,406.7 657.9,408.7 663.5,407.0 657.0,404.9"/><polygon class="p" points="585.3,406.8 591.1,408.8 597.3,407.1 591.4,405.0"/><polygon class="p" points="519.1,406.9 524.3,408.9 531.0,407.2 525.8,405.1"/><polygon class="p" points="597.3,407.1 603.3,409.2 609.3,407.4 603.4,405.4"/><polygon class="p" points="531.0,407.2 536.4,409.3 543.0,407.5 537.6,405.5"/><polygon points="645.4,419.1 651.8,425.7 657.4,425.6 651.1,418.6" fill="#fffbb9"/><polygon points="633.4,413.9 639.7,419.9 645.4,419.1 639.2,412.8" fill="#feeca2"/><polygon class="p" points="609.3,407.4 615.5,409.5 621.4,407.7 615.3,405.7"/><polygon points="597.3,401.0 603.3,406.7 609.4,405.2 603.4,399.6" fill="#fdba6d"/><polygon points="621.4,409.4 627.6,415.1 633.4,413.9 627.3,408.0" fill="#fede8e"/><polygon points="609.4,405.2 615.4,410.9 621.4,409.4 615.3,403.8" fill="#fecc7d"/><polygon points="585.3,395.6 591.2,402.4 597.3,401.0 591.5,394.3" fill="#fca35c"/><polygon class="p" points="543.0,407.5 548.4,409.6 555.0,407.8 549.5,405.8"/><polygon points="573.2,389.0 579.0,396.9 585.3,395.6 579.5,387.9" fill="#f7824d"/><polygon points="513.0,370.0 518.2,372.8 525.0,370.6 519.8,367.9" fill="#bc1626"/><polygon class="p" points="621.4,407.7 627.7,409.8 633.5,408.1 627.3,406.0"/><polygon points="561.2,381.8 566.9,389.7 573.2,389.0 567.5,381.1" fill="#ec5c3b"/><polygon class="p" points="555.0,407.8 560.6,409.9 567.0,408.2 561.4,406.1"/><polygon points="525.0,370.6 530.3,373.8 537.0,372.0 531.7,368.8" fill="#bf1927"/><polygon points="549.1,375.7 554.7,382.2 561.2,381.8 555.6,374.8" fill="#db382b"/><polygon class="p" points="633.5,408.1 639.9,410.2 645.7,408.4 639.3,406.3"/><polygon points="537.0,372.0 542.5,376.8 549.1,375.7 543.6,370.7" fill="#c92327"/><polygon class="p" points="567.0,408.2 572.7,410.3 579.1,408.5 573.3,406.4"/><polygon class="p" points="645.7,408.4 652.2,410.5 657.9,408.7 651.4,406.7"/><polygon class="p" points="579.1,408.5 584.9,410.6 591.1,408.8 585.3,406.8"/><polygon class="p" points="591.1,408.8 597.1,410.9 603.3,409.2 597.3,407.1"/><polygon class="p" points="524.3,408.9 529.6,411.0 536.4,409.3 531.0,407.2"/><polygon points="639.7,419.9 646.1,426.1 651.8,425.7 645.4,419.1" fill="#fff7b3"/><polygon class="p" points="603.3,409.2 609.4,411.3 615.5,409.5 609.3,407.4"/><polygon points="627.6,415.1 633.9,420.9 639.7,419.9 633.4,413.9" fill="#fee99e"/><polygon points="591.2,402.4 597.1,408.0 603.3,406.7 597.3,401.0" fill="#fdb96b"/><polygon points="603.3,406.7 609.4,412.2 615.4,410.9 609.4,405.2" fill="#fecb7c"/><polygon points="615.4,410.9 621.6,416.4 627.6,415.1 621.4,409.4" fill="#fedc8c"/><polygon points="579.0,396.9 584.9,403.6 591.2,402.4 585.3,395.6" fill="#fba15b"/><polygon class="p" points="536.4,409.3 541.8,411.4 548.4,409.6 543.0,407.5"/><polygon points="566.9,389.7 572.6,397.5 579.0,396.9 573.2,389.0" fill="#f67e4b"/><polygon class="p" points="615.5,409.5 621.7,411.6 627.7,409.8 621.4,407.7"/><polygon class="p" points="548.4,409.6 554.0,411.7 560.6,409.9 555.0,407.8"/><polygon points="518.2,372.8 523.5,375.9 530.3,373.8 525.0,370.6" fill="#c11b27"/><polygon points="554.7,382.2 560.4,389.5 566.9,389.7 561.2,381.8" fill="#e95538"/><polygon class="p" points="627.7,409.8 634.0,412.0 639.9,410.2 633.5,408.1"/><polygon points="530.3,373.8 535.8,378.1 542.5,376.8 537.0,372.0" fill="#c92227"/><polygon points="542.5,376.8 548.0,382.7 554.7,382.2 549.1,375.7" fill="#d93429"/><polygon class="p" points="560.6,409.9 566.2,412.1 572.7,410.3 567.0,408.2"/><polygon class="p" points="639.9,410.2 646.4,412.3 652.2,410.5 645.7,408.4"/><polygon class="p" points="572.7,410.3 578.5,412.4 584.9,410.6 579.1,408.5"/><polygon class="p" points="584.9,410.6 590.9,412.8 597.1,410.9 591.1,408.8"/><polygon class="p" points="597.1,410.9 603.2,413.1 609.4,411.3 603.3,409.2"/><polygon points="633.9,420.9 640.3,426.7 646.1,426.1 639.7,419.9" fill="#fff4ae"/><polygon points="584.9,403.6 590.9,409.2 597.1,408.0 591.2,402.4" fill="#fdb769"/><polygon points="597.1,408.0 603.2,413.5 609.4,412.2 603.3,406.7" fill="#fec97a"/><polygon points="621.6,416.4 627.9,422.0 633.9,420.9 627.6,415.1" fill="#fee79b"/><polygon points="609.4,412.2 615.6,417.6 621.6,416.4 615.4,410.9" fill="#feda8a"/><polygon class="p" points="529.6,411.0 535.0,413.2 541.8,411.4 536.4,409.3"/><polygon points="572.6,397.5 578.5,404.2 584.9,403.6 579.0,396.9" fill="#fb9d59"/><polygon class="p" points="609.4,411.3 615.6,413.4 621.7,411.6 615.5,409.5"/><polygon points="560.4,389.5 566.1,396.7 572.6,397.5 566.9,389.7" fill="#f57547"/><polygon class="p" points="541.8,411.4 547.3,413.5 554.0,411.7 548.4,409.6"/><polygon points="548.0,382.7 553.7,389.1 560.4,389.5 554.7,382.2" fill="#e54d34"/><polygon class="p" points="621.7,411.6 628.1,413.8 634.0,412.0 627.7,409.8"/><polygon points="523.5,375.9 528.9,379.6 535.8,378.1 530.3,373.8" fill="#ca2327"/><polygon points="535.8,378.1 541.3,383.2 548.0,382.7 542.5,376.8" fill="#d73027"/><polygon class="p" points="554.0,411.7 559.7,413.9 566.2,412.1 560.6,409.9"/><polygon class="p" points="634.0,412.0 640.5,414.1 646.4,412.3 639.9,410.2"/><polygon class="p" points="566.2,412.1 572.1,414.2 578.5,412.4 572.7,410.3"/><polygon class="p" points="578.5,412.4 584.5,414.6 590.9,412.8 584.9,410.6"/><polygon class="p" points="590.9,412.8 596.9,414.9 603.2,413.1 597.1,410.9"/><polygon points="590.9,409.2 596.9,414.6 603.2,413.5 597.1,408.0" fill="#fdc678"/><polygon points="627.9,422.0 634.3,427.4 640.3,426.7 633.9,420.9" fill="#fff1aa"/><polygon points="603.2,413.5 609.4,418.8 615.6,417.6 609.4,412.2" fill="#fed788"/><polygon points="615.6,417.6 621.9,422.9 627.9,422.0 621.6,416.4" fill="#fee598"/><polygon points="578.5,404.2 584.5,409.7 590.9,409.2 584.9,403.6" fill="#fdb366"/><polygon points="566.1,396.7 572.0,403.1 578.5,404.2 572.6,397.5" fill="#f99254"/><polygon class="p" points="603.2,413.1 609.4,415.3 615.6,413.4 609.4,411.3"/><polygon class="p" points="535.0,413.2 540.6,415.4 547.3,413.5 541.8,411.4"/><polygon points="553.7,389.1 559.5,395.6 566.1,396.7 560.4,389.5" fill="#f26841"/><polygon class="p" points="615.6,413.4 622.0,415.6 628.1,413.8 621.7,411.6"/><polygon class="p" points="547.3,413.5 553.0,415.8 559.7,413.9 554.0,411.7"/><polygon points="541.3,383.2 547.0,388.9 553.7,389.1 548.0,382.7" fill="#e14531"/><polygon points="528.9,379.6 534.5,383.8 541.3,383.2 535.8,378.1" fill="#d52e27"/><polygon class="p" points="628.1,413.8 634.5,416.0 640.5,414.1 634.0,412.0"/><polygon class="p" points="559.7,413.9 565.5,416.1 572.1,414.2 566.2,412.1"/><polygon class="p" points="572.1,414.2 578.0,416.5 584.5,414.6 578.5,412.4"/><polygon class="p" points="584.5,414.6 590.5,416.8 596.9,414.9 590.9,412.8"/><polygon points="596.9,414.6 603.1,419.8 609.4,418.8 603.2,413.5" fill="#fed485"/><polygon points="584.5,409.7 590.5,415.0 596.9,414.6 590.9,409.2" fill="#fdc173"/><polygon points="609.4,418.8 615.7,424.0 621.9,422.9 615.6,417.6" fill="#fee395"/><polygon points="621.9,422.9 628.3,428.1 634.3,427.4 627.9,422.0" fill="#feeea5"/><polygon points="572.0,403.1 578.0,408.5 584.5,409.7 578.5,404.2" fill="#fca85e"/><polygon class="p" points="596.9,414.9 603.1,417.2 609.4,415.3 603.2,413.1"/><polygon points="559.5,395.6 565.4,401.6 572.0,403.1 566.1,396.7" fill="#f7814c"/><polygon class="p" points="609.4,415.3 615.8,417.5 622.0,415.6 615.6,413.4"/><polygon class="p" points="540.6,415.4 546.2,417.6 553.0,415.8 547.3,413.5"/><polygon points="547.0,388.9 552.7,394.6 559.5,395.6 553.7,389.1" fill="#ec5b3b"/><polygon points="534.5,383.8 540.1,388.4 547.0,388.9 541.3,383.2" fill="#dd3d2d"/><polygon class="p" points="622.0,415.6 628.5,417.9 634.5,416.0 628.1,413.8"/><polygon class="p" points="553.0,415.8 558.8,418.0 565.5,416.1 559.7,413.9"/><polygon class="p" points="565.5,416.1 571.4,418.4 578.0,416.5 572.1,414.2"/><polygon class="p" points="578.0,416.5 584.0,418.7 590.5,416.8 584.5,414.6"/><polygon points="603.1,419.8 609.4,424.8 615.7,424.0 609.4,418.8" fill="#fee191"/><polygon points="590.5,415.0 596.7,420.1 603.1,419.8 596.9,414.6" fill="#fecf80"/><polygon points="615.7,424.0 622.1,428.9 628.3,428.1 621.9,422.9" fill="#feeba0"/><polygon class="p" points="590.5,416.8 596.7,419.1 603.1,417.2 596.9,414.9"/><polygon points="578.0,408.5 584.0,413.8 590.5,415.0 584.5,409.7" fill="#fdb86a"/><polygon points="565.4,401.6 571.3,407.0 578.0,408.5 572.0,403.1" fill="#fa9656"/><polygon class="p" points="603.1,417.2 609.5,419.5 615.8,417.5 609.4,415.3"/><polygon points="552.7,394.6 558.6,400.1 565.4,401.6 559.5,395.6" fill="#f47045"/><polygon points="540.1,388.4 545.8,393.3 552.7,394.6 547.0,388.9" fill="#e54e35"/><polygon class="p" points="615.8,417.5 622.3,419.8 628.5,417.9 622.0,415.6"/><polygon class="p" points="546.2,417.6 552.0,419.9 558.8,418.0 553.0,415.8"/><polygon class="p" points="558.8,418.0 564.7,420.3 571.4,418.4 565.5,416.1"/><polygon class="p" points="571.4,418.4 577.4,420.7 584.0,418.7 578.0,416.5"/><polygon class="p" points="584.0,418.7 590.2,421.0 596.7,419.1 590.5,416.8"/><polygon points="596.7,420.1 603.0,424.9 609.4,424.8 603.1,419.8" fill="#fedb8b"/><polygon points="609.4,424.8 615.9,429.5 622.1,428.9 615.7,424.0" fill="#fee89c"/><polygon points="584.0,413.8 590.2,418.9 596.7,420.1 590.5,415.0" fill="#fdc576"/><polygon points="571.3,407.0 577.4,412.3 584.0,413.8 578.0,408.5" fill="#fca85e"/><polygon class="p" points="596.7,419.1 603.1,421.4 609.5,419.5 603.1,417.2"/><polygon points="558.6,400.1 564.6,405.4 571.3,407.0 565.4,401.6" fill="#f7844d"/><polygon class="p" points="609.5,419.5 615.9,421.8 622.3,419.8 615.8,417.5"/><polygon points="545.8,393.3 551.7,398.3 558.6,400.1 552.7,394.6" fill="#ee603d"/><polygon class="p" points="552.0,419.9 557.8,422.3 564.7,420.3 558.8,418.0"/><polygon class="p" points="564.7,420.3 570.7,422.7 577.4,420.7 571.4,418.4"/><polygon class="p" points="577.4,420.7 583.6,423.0 590.2,421.0 584.0,418.7"/><polygon points="603.0,424.9 609.5,429.5 615.9,429.5 609.4,424.8" fill="#fee395"/><polygon points="590.2,418.9 596.5,423.9 603.0,424.9 596.7,420.1" fill="#fed081"/><polygon class="p" points="590.2,421.0 596.5,423.4 603.1,421.4 596.7,419.1"/><polygon points="577.4,412.3 583.6,417.5 590.2,418.9 584.0,413.8" fill="#fdb769"/><polygon points="564.6,405.4 570.6,410.7 577.4,412.3 571.3,407.0" fill="#fa9556"/><polygon class="p" points="603.1,421.4 609.5,423.8 615.9,421.8 609.5,419.5"/><polygon points="551.7,398.3 557.6,403.4 564.6,405.4 558.6,400.1" fill="#f47044"/><polygon class="p" points="557.8,422.3 563.8,424.7 570.7,422.7 564.7,420.3"/><polygon class="p" points="570.7,422.7 576.8,425.1 583.6,423.0 577.4,420.7"/><polygon class="p" points="583.6,423.0 589.9,425.4 596.5,423.4 590.2,421.0"/><polygon points="596.5,423.9 603.0,428.6 609.5,429.5 603.0,424.9" fill="#fedb8b"/><polygon points="583.6,417.5 589.9,422.7 596.5,423.9 590.2,418.9" fill="#fdc374"/><polygon class="p" points="596.5,423.4 603.0,425.8 609.5,423.8 603.1,421.4"/><polygon points="570.6,410.7 576.8,416.2 583.6,417.5 577.4,412.3" fill="#fca65d"/><polygon points="557.6,403.4 563.7,408.9 570.6,410.7 564.6,405.4" fill="#f7814c"/><polygon class="p" points="563.8,424.7 570.0,427.1 576.8,425.1 570.7,422.7"/><polygon class="p" points="576.8,425.1 583.1,427.5 589.9,425.4 583.6,423.0"/><polygon points="589.9,422.7 596.3,427.8 603.0,428.6 596.5,423.9" fill="#fece7f"/><polygon class="p" points="589.9,425.4 596.3,427.9 603.0,425.8 596.5,423.4"/><polygon points="576.8,416.2 583.1,421.8 589.9,422.7 583.6,417.5" fill="#fdb568"/><polygon points="563.7,408.9 569.9,414.7 576.8,416.2 570.6,410.7" fill="#f99355"/><polygon class="p" points="570.0,427.1 576.2,429.6 583.1,427.5 576.8,425.1"/><polygon class="p" points="583.1,427.5 589.5,430.0 596.3,427.9 589.9,425.4"/><polygon points="583.1,421.8 589.6,427.4 596.3,427.8 589.9,422.7" fill="#fdc173"/><polygon points="569.9,414.7 576.2,420.8 583.1,421.8 576.8,416.2" fill="#fca65d"/><polygon class="p" points="576.2,429.6 582.6,432.2 589.5,430.0 583.1,427.5"/><polygon points="576.2,420.8 582.6,427.2 589.6,427.4 583.1,421.8" fill="#fdb669"/></g>
</g>
<text x="279" y="175" class="t">1</text><text x="279" y="272" class="t">0.5</text><text x="298" y="363" class="t">0</text><text x="295" y="448" class="t">-0.5</text><text x="312" y="528" class="t">-1</text><text x="295" y="528" class="t">-59.8</text><text x="331.5" y="542" class="t">0</text><text x="344" y="568" class="t">100</text><text x="375" y="600" class="t">200</text><text x="412" y="637" class="t">300</text><text x="729.5" y="642" class="t">200</text><text x="776.5" y="609" class="t">300</text><text x="815.5" y="579" class="t">400</text><text x="850.5" y="554" class="t">500</text><text x="861" y="546" class="t">533.65</text><text x="249" y="372" class="n">Z</text><text x="343" y="629" class="n">X</text><text x="804" y="648" class="n">Y</text>
</svg>
<!-- right panels -->
<div class="panel" style="left:1189px;top:12px;width:568px;height:282px">
  <div class="hdr"></div>
  <svg class="abs" style="left:18px;top:14px" width="20" height="20" viewBox="0 0 20 20">
    <circle cx="10" cy="10" r="10" fill="#fff"/>
    <rect x="8.8" y="8.6" width="2.4" height="6.6" fill="#272727"/><rect x="8.8" y="4.8" width="2.4" height="2.4" fill="#272727"/>
  </svg>
  <div class="abs t20" style="left:48px;top:15px;letter-spacing:-0.15px">Current Mesh</div>
  <svg class="abs" style="left:537px;top:19px" width="14" height="10" viewBox="0 0 14 10"><path d="M1.5 2L7 7.5L12.5 2" fill="none" stroke="#fff" stroke-width="2"/></svg>
  <div class="row" style="top:48px"><div class="rl">Name</div><div class="rr" style="color:#9bef22">Prep</div></div>
  <div class="row" style="top:95px"><div class="rl">Size</div><div class="rr">40x40</div></div>
  <div class="row" style="top:142px"><div class="rl">Max [214.1, 50.0]</div><div class="rr">0.178 mm</div></div>
  <div class="row" style="top:189px"><div class="rl">Min [50.0, 283.8]</div><div class="rr">-0.313 mm</div></div>
  <div class="row" style="top:236px;border-bottom:none"><div class="rl">Range</div><div class="rr">0.491 mm</div></div>
</div>
<div class="panel" style="left:1189px;top:318px;width:568px;height:95px">
  <div class="hdr"></div>
  <svg class="abs" style="left:16px;top:13px" width="24" height="24" viewBox="0 0 24 24">
    <path d="M4 13.9V20.1H18.4V13.9" fill="none" stroke="#fff" stroke-width="1.8"/>
    <path d="M14.1 1.6L19.3 7.8M11 5.1L17.3 9M8.6 8.7L15.8 11.6M7.7 12.5L14.8 14.1M7.2 16.6L15.2 16.7" stroke="#fff" stroke-width="1.6" stroke-linecap="round"/>
  </svg>
  <div class="abs t20" style="left:48px;top:15px">Profiles</div>
  <svg class="abs" style="left:537px;top:19px" width="14" height="10" viewBox="0 0 14 10"><path d="M1.5 2L7 7.5L12.5 2" fill="none" stroke="#fff" stroke-width="2"/></svg>
  <div class="abs" style="left:12px;top:63px;font-size:14px;font-weight:normal;-webkit-text-stroke:0.35px currentColor;line-height:14px;color:#9bef22">Prep</div>
  <div class="abs" style="left:408px;top:67px;font-size:11px;font-weight:normal;-webkit-text-stroke:0.3px currentColor;line-height:11px;color:#fff">0.491</div>
  <svg class="abs" style="left:484px;top:60px" width="24" height="24" viewBox="0 0 24 24"><path d="M20.71 7.04C21.1 6.65 21.1 6 20.71 5.63L18.37 3.29C18 2.9 17.35 2.9 16.96 3.29L15.12 5.12L18.87 8.87M3 17.25V21H6.75L17.81 9.93L14.06 6.18L3 17.25Z" fill="#fff"/></svg>
  <svg class="abs" style="left:532px;top:60px" width="24" height="24" viewBox="0 0 24 24"><path d="M19 4H15.5L14.5 3H9.5L8.5 4H5V6H19M6 19A2 2 0 0 0 8 21H16A2 2 0 0 0 18 19V7H6V19Z" fill="#fff"/></svg>
</div>
</body></html>
